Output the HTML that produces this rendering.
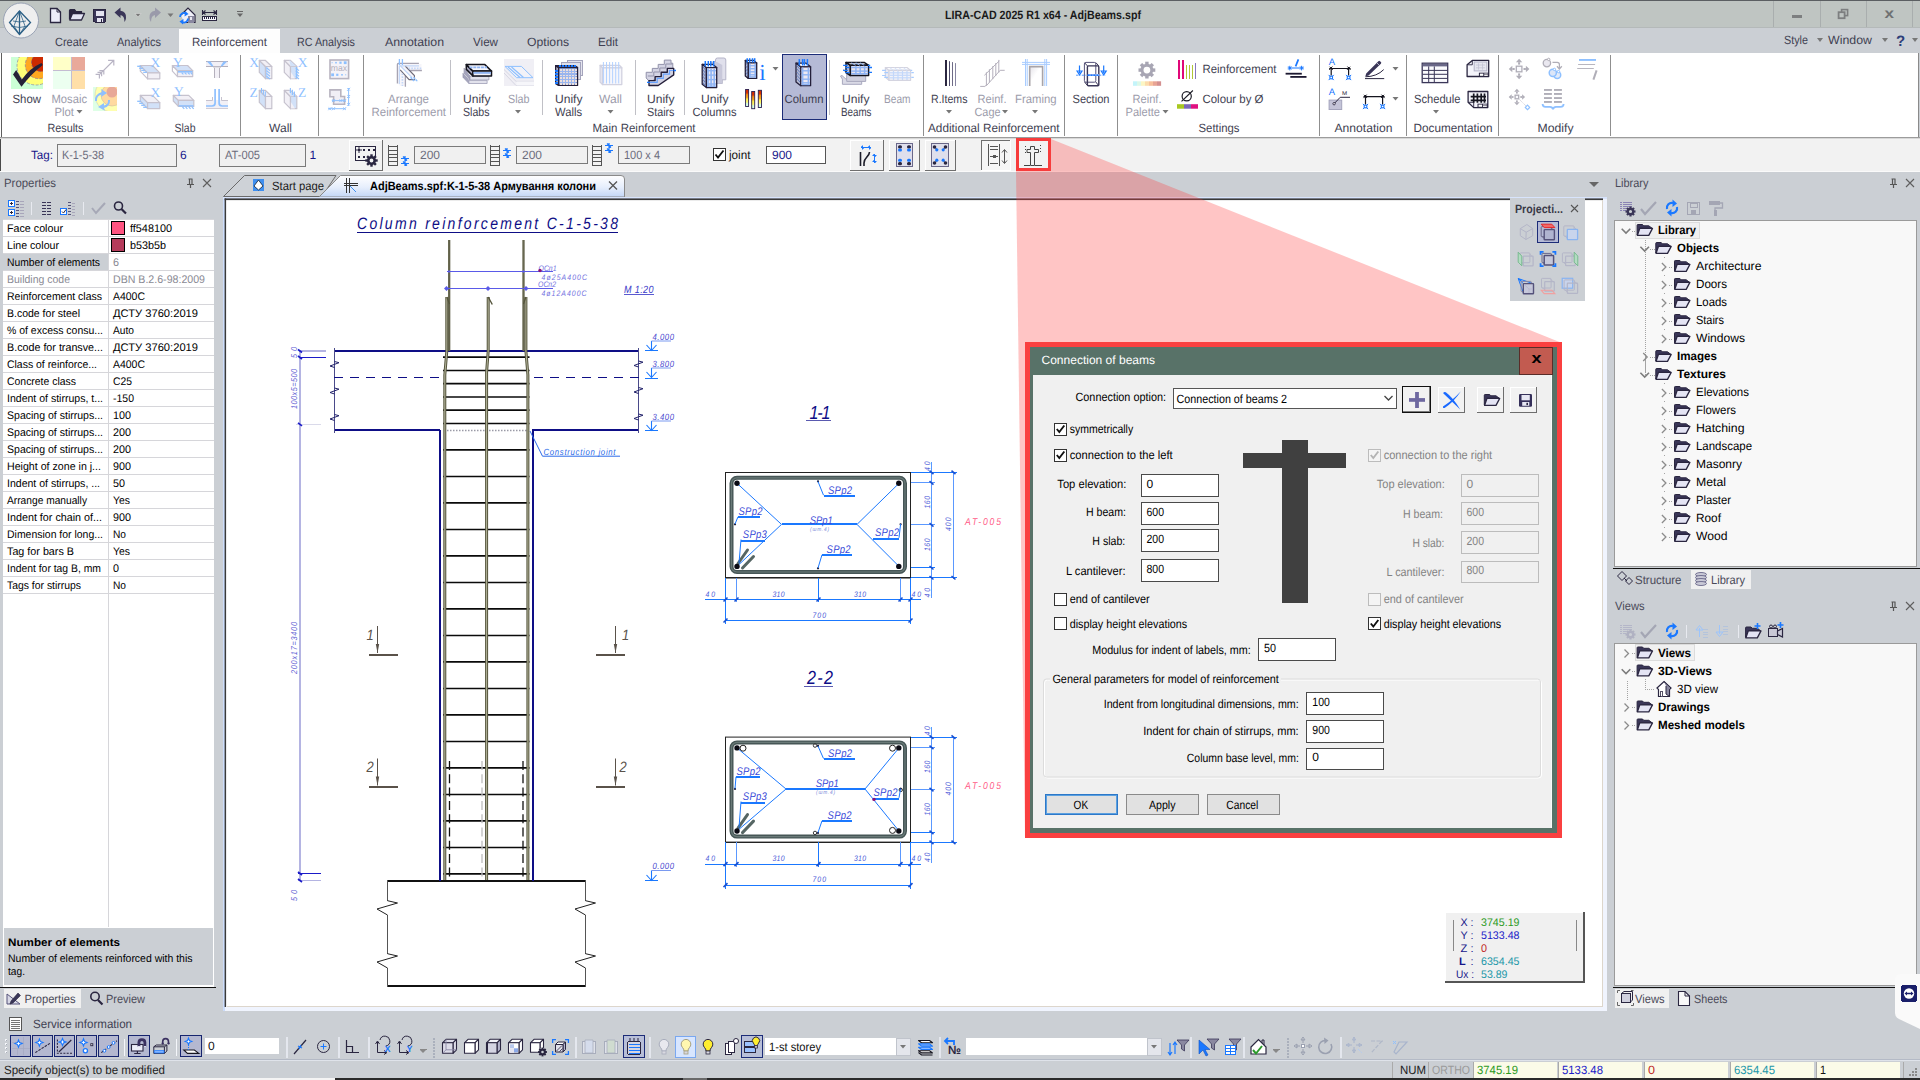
<!DOCTYPE html><html><head><meta charset="utf-8"><title>LIRA-CAD</title><style>html,body{margin:0;padding:0;background:#cbcfd4;overflow:hidden}svg{display:block}rect{shape-rendering:crispEdges}text{font-family:"Liberation Sans",sans-serif;white-space:pre}</style></head><body><svg width="1920" height="1080" viewBox="0 0 1920 1080" text-rendering="geometricPrecision">
<rect x="0" y="0" width="1920" height="1080" fill="#cbcfd4"/>
<rect x="0" y="0" width="1920" height="28" fill="#bfc5c2"/>
<rect x="0" y="0" width="1920" height="1" fill="#5b5f62"/>
<rect x="0" y="27" width="1920" height="1" fill="#b4b9b9"/>
<text x="945" y="19" font-size="12" fill="#1a1a1a" textLength="196" lengthAdjust="spacingAndGlyphs" font-weight="bold" >LIRA-CAD 2025 R1 x64 - AdjBeams.spf</text>
<rect x="1773" y="1" width="1" height="26" fill="#a9aeae"/>
<rect x="1820" y="1" width="1" height="26" fill="#a9aeae"/>
<rect x="1866" y="1" width="1" height="26" fill="#a9aeae"/>
<rect x="1912" y="1" width="1" height="26" fill="#a9aeae"/>
<rect x="1792" y="15" width="10" height="3" fill="#7d7f80"/>
<rect x="1841.6" y="9.6" width="6" height="6" fill="none" stroke="#7d7f80" stroke-width="1.6" style="shape-rendering:geometricPrecision"/>
<rect x="1838.6" y="12.2" width="6" height="6" fill="#bfc5c2" stroke="#7d7f80" stroke-width="1.8" style="shape-rendering:geometricPrecision"/>
<text x="1884.5" y="18.3" font-size="14" fill="#6e7071" textLength="9.5" lengthAdjust="spacingAndGlyphs" font-weight="bold" >x</text>
<rect x="179" y="29" width="101" height="25" fill="#fdfdfd"/>
<text x="55" y="46" font-size="12" fill="#3f3f52" textLength="33" lengthAdjust="spacingAndGlyphs" >Create</text>
<text x="117" y="46" font-size="12" fill="#3f3f52" textLength="44" lengthAdjust="spacingAndGlyphs" >Analytics</text>
<text x="192" y="46" font-size="12" fill="#3f3f52" textLength="75" lengthAdjust="spacingAndGlyphs" >Reinforcement</text>
<text x="297" y="46" font-size="12" fill="#3f3f52" textLength="58" lengthAdjust="spacingAndGlyphs" >RC Analysis</text>
<text x="385" y="46" font-size="12" fill="#3f3f52" textLength="59" lengthAdjust="spacingAndGlyphs" >Annotation</text>
<text x="473" y="46" font-size="12" fill="#3f3f52" textLength="25" lengthAdjust="spacingAndGlyphs" >View</text>
<text x="527" y="46" font-size="12" fill="#3f3f52" textLength="42" lengthAdjust="spacingAndGlyphs" >Options</text>
<text x="598" y="46" font-size="12" fill="#3f3f52" textLength="20" lengthAdjust="spacingAndGlyphs" >Edit</text>
<text x="1784" y="44" font-size="12" fill="#3f3f52" textLength="24" lengthAdjust="spacingAndGlyphs" >Style</text>
<path d="M1817 38 h6 l-3 4 z" fill="#777" />
<text x="1828" y="44" font-size="12" fill="#3f3f52" textLength="44" lengthAdjust="spacingAndGlyphs" >Window</text>
<path d="M1882 38 h6 l-3 4 z" fill="#777" />
<text x="1896" y="46" font-size="15" fill="#2d3f7a" font-weight="bold" >?</text>
<path d="M1912 38 h6 l-3 4 z" fill="#777" />
<rect x="0" y="53" width="1918" height="84" fill="#ffffff"/>
<rect x="1918" y="53" width="1" height="85" fill="#8a8a8a"/>
<rect x="1" y="53" width="1" height="85" fill="#5e5e5e"/>
<rect x="0" y="137" width="1920" height="1" fill="#9c9c9c"/>
<rect x="0" y="138" width="1920" height="1" fill="#d8d8d8"/>
<rect x="0" y="139" width="1920" height="33" fill="#f2f2f2"/>
<rect x="0" y="171" width="1920" height="1" fill="#fafafa"/>
<circle cx="21" cy="20.5" r="17.5" fill="#efefef" stroke="#9aa3b5" stroke-width="1" />
<g stroke="#2b5f85" fill="none" stroke-width="1.3">
<path d="M19.5 11 L30.5 22.5 L19.5 34.5 L9.5 22.5 Z" fill="none" />
<path d="M19.5 11 V34.5" fill="none" />
<path d="M19.5 11 L14 26 L19.5 34.5 M19.5 11 L25 26 L19.5 34.5" fill="none" stroke-width="0.8"/>
<path d="M13 21 Q19.5 23 26 21 M11 26 Q19.5 29 28 26" fill="none" stroke-width="0.8"/>
</g>
<path d="M50.5 8.5 H57 L60.5 12 V22.5 H50.5 Z" fill="#ececf8" stroke="#2a2640" stroke-width="1.3" />
<path d="M57 8.5 V12 H60.5" fill="none" stroke="#2a2640" stroke-width="1" />
<path d="M69.5 19.5 V10.5 Q69.5 9.5 70.5 9.5 H74.5 L76 11.5 H81.5 V13.5" fill="#2a2640" stroke="#2a2640" stroke-width="1.2" />
<path d="M69.8 20 L72.5 13.5 H84.5 L81.5 20 Z" fill="#e4e4f4" stroke="#2a2640" stroke-width="1.3" stroke-linejoin="round"/>
<rect x="93.5" y="9.5" width="12" height="12.5" fill="#3a3658" stroke="#2a2640" stroke-width="1" rx="1"/>
<rect x="95.5" y="10.5" width="8" height="5.5" fill="#e4e4f0"/>
<rect x="96.5" y="18" width="6.5" height="4" fill="#e4e4f0"/>
<rect x="100.5" y="18.5" width="1.6" height="3" fill="#2a2640"/>
<path d="M114.5 12.5 L120.5 7.5 V10.8 Q126.5 11.5 126 18 Q125.8 20.5 124.5 22 Q124.5 15.5 120.5 15 V18 Z" fill="#3a3658" />
<path d="M135 13.5 h6 l-3 3.5 z" fill="#777" />
<path d="M135 13.5 h6 l-3 3.5 z" fill="none" stroke="#e8e8e8" stroke-width="0.5" />
<path d="M161 12.5 L155 7.5 V10.8 Q149 11.5 149.5 18 Q149.7 20.5 151 22 Q151 15.5 155 15 V18 Z" fill="#9a9aaa" />
<path d="M167.5 13.5 h6 l-3 3.5 z" fill="#777" />
<path d="M181 15 L188 8 L195 15 V22.5 H184" fill="#f0f0f8" stroke="#2a2640" stroke-width="1.2" />
<rect x="187.5" y="16" width="6" height="6.5" fill="#8a88a0"/>
<rect x="189.5" y="17" width="2" height="3" fill="#e8e8f0"/>
<path d="M180 17 A4 4 0 0 1 186 13.5" fill="none" stroke="#1a78ff" stroke-width="1.8" />
<path d="M185 11 L188.5 14 L184.5 16.5 Z" fill="#1a78ff" />
<path d="M188 18.5 A4 4 0 0 1 182 22" fill="none" stroke="#1a78ff" stroke-width="1.8" />
<path d="M183 24.5 L179.5 21.5 L183.5 19 Z" fill="#1a78ff" />
<rect x="202.5" y="16.5" width="14" height="4" fill="#f4f4fa" stroke="#2a2640" stroke-width="1.2"/>
<rect x="204" y="17" width="1" height="2" fill="#2a2640"/>
<rect x="206" y="17" width="1" height="2" fill="#2a2640"/>
<rect x="208" y="17" width="1" height="2" fill="#2a2640"/>
<rect x="210" y="17" width="1" height="2" fill="#2a2640"/>
<rect x="212" y="17" width="1" height="2" fill="#2a2640"/>
<rect x="214" y="17" width="1" height="2" fill="#2a2640"/>
<path d="M203 12.5 H216 M202.5 10 V15 M216.5 10 V15 M205.5 10.5 L203 12.5 L205.5 14.5 M213.5 10.5 L216 12.5 L213.5 14.5" fill="none" stroke="#2a2640" stroke-width="1.1" />
<rect x="237" y="11" width="6" height="1" fill="#666"/>
<path d="M237 13.5 h6 l-3 3.5 z" fill="#666" />
<path d="M223.5 196.5 L244.5 175.5 H336 L322 196.5 Z" fill="#ced2d7" stroke="#6a6a6a" stroke-width="1" />
<text x="272" y="190" font-size="12" fill="#1a1a1a" textLength="52" lengthAdjust="spacingAndGlyphs" >Start page</text>
<defs><linearGradient id="tabg" x1="0" y1="0" x2="0" y2="1"><stop offset="0" stop-color="#ffffff"/><stop offset="0.55" stop-color="#e6eefc"/><stop offset="1" stop-color="#c3d6f6"/></linearGradient></defs>
<path d="M319 197 L340.5 175.5 H621 Q624.5 175.5 624.5 179 V197 Z" fill="url(#tabg)" stroke="#8a8a8a" stroke-width="1" />
<text x="370" y="190" font-size="12" fill="#000" textLength="226" lengthAdjust="spacingAndGlyphs" font-weight="bold" >AdjBeams.spf:K-1-5-38 Армування колони</text>
<path d="M609 181.5 L617 189.5 M617 181.5 L609 189.5" fill="none" stroke="#555" stroke-width="1.3" />
<rect x="253" y="179" width="11" height="12" fill="#3f8ff0"/>
<path d="M258.5 180 L263 186 L258.5 190 L254 186 Z" fill="#fff" stroke="#123" stroke-width="0.8" />
<g stroke="#333" fill="none" stroke-width="1">
<path d="M346.5 178 V193 M349.5 178 V193 M344 183.5 H358 M344 185.5 H358" fill="none" />
<path d="M350 186 L356 192" fill="none" stroke="#3f8ff0"/>
</g>
<path d="M1589 182 h10 l-5 5 z" fill="#666" />
<rect x="223" y="197" width="1384" height="814" fill="#f0f4fe"/>
<rect x="223" y="197" width="2" height="814" fill="#cbdcfb"/>
<rect x="223" y="197" width="1384" height="1.5" fill="#d8e4fc"/>
<rect x="225" y="199" width="1378" height="808" fill="#fff"/>
<rect x="224.6" y="198.4" width="1378.4" height="1.7" fill="#3a3a3a" style="shape-rendering:geometricPrecision"/>
<rect x="224.6" y="198.4" width="1.5" height="808.6" fill="#3a3a3a" style="shape-rendering:geometricPrecision"/>
<rect x="227" y="1006" width="1376" height="1" fill="#ddd6cc"/>
<rect x="1602" y="200" width="1" height="807" fill="#ddd6cc"/>
<rect x="128" y="55" width="1" height="81" fill="#8f8f8f"/>
<rect x="240" y="55" width="1" height="81" fill="#8f8f8f"/>
<rect x="318" y="55" width="1" height="81" fill="#8f8f8f"/>
<rect x="363" y="55" width="1" height="81" fill="#8f8f8f"/>
<rect x="923" y="55" width="1" height="81" fill="#8f8f8f"/>
<rect x="1064" y="55" width="1" height="81" fill="#8f8f8f"/>
<rect x="1117" y="55" width="1" height="81" fill="#8f8f8f"/>
<rect x="1319" y="55" width="1" height="81" fill="#8f8f8f"/>
<rect x="1406" y="55" width="1" height="81" fill="#8f8f8f"/>
<rect x="1498" y="55" width="1" height="81" fill="#8f8f8f"/>
<rect x="1610" y="55" width="1" height="81" fill="#8f8f8f"/>
<rect x="450" y="60" width="1" height="55" fill="#c0c0c6"/>
<rect x="542" y="60" width="1" height="55" fill="#c0c0c6"/>
<rect x="635" y="60" width="1" height="55" fill="#c0c0c6"/>
<rect x="684" y="60" width="1" height="55" fill="#c0c0c6"/>
<rect x="829" y="60" width="1" height="55" fill="#c0c0c6"/>
<text x="47.5" y="132" font-size="12" fill="#3f3f52" textLength="36" lengthAdjust="spacingAndGlyphs" >Results</text>
<text x="174.5" y="132" font-size="12" fill="#3f3f52" textLength="21" lengthAdjust="spacingAndGlyphs" >Slab</text>
<text x="269" y="132" font-size="12" fill="#3f3f52" textLength="23" lengthAdjust="spacingAndGlyphs" >Wall</text>
<text x="592.5" y="132" font-size="12" fill="#3f3f52" textLength="103" lengthAdjust="spacingAndGlyphs" >Main Reinforcement</text>
<text x="928" y="132" font-size="12" fill="#3f3f52" textLength="131.5" lengthAdjust="spacingAndGlyphs" >Additional Reinforcement</text>
<text x="1198.5" y="132" font-size="12" fill="#3f3f52" textLength="41" lengthAdjust="spacingAndGlyphs" >Settings</text>
<text x="1334.5" y="132" font-size="12" fill="#3f3f52" textLength="58" lengthAdjust="spacingAndGlyphs" >Annotation</text>
<text x="1413.5" y="132" font-size="12" fill="#3f3f52" textLength="79" lengthAdjust="spacingAndGlyphs" >Documentation</text>
<text x="1537.5" y="132" font-size="12" fill="#3f3f52" textLength="36" lengthAdjust="spacingAndGlyphs" >Modify</text>
<rect x="11" y="57" width="32" height="32" fill="#ccffd6"/>
<clipPath id="cs"><rect x="11" y="57" width="32" height="32"/></clipPath><g clip-path="url(#cs)">
<circle cx="36" cy="66" r="19" fill="#ffff78" stroke="#8a8aa0" stroke-width="0.7" stroke-dasharray="3 1.5"/>
<circle cx="39" cy="65" r="13.7" fill="#ffa820" stroke="#8a7aa0" stroke-width="0.7" stroke-dasharray="3 1.5"/>
<circle cx="40.5" cy="62.5" r="9" fill="#cc2a00" stroke="#7a5a80" stroke-width="0.7" stroke-dasharray="3 1.5"/>
<path d="M13 74.5 L16.2 70 L21.8 79.5 Q30 68 41.5 63 L42.8 65 Q31 74 21.5 86.8 Z" fill="#262238" />
</g>
<text x="12.5" y="103" font-size="12" fill="#3f3f52" textLength="28.5" lengthAdjust="spacingAndGlyphs" >Show</text>
<rect x="53" y="57" width="18" height="14" fill="#ffffc8"/>
<rect x="71" y="57" width="14" height="14" fill="#e9a99a"/>
<rect x="53" y="71" width="18" height="18" fill="#ecfff0"/>
<rect x="72" y="71" width="13" height="18" fill="#ffdfa8"/>
<rect x="71" y="57" width="1" height="32" fill="#c4bcd2"/>
<rect x="53" y="70" width="32" height="1" fill="#c4bcd2"/>
<text x="51.5" y="103" font-size="12" fill="#9c9cab" textLength="35.5" lengthAdjust="spacingAndGlyphs" >Mosaic</text>
<text x="54.5" y="116" font-size="12" fill="#9c9cab" textLength="19.5" lengthAdjust="spacingAndGlyphs" >Plot</text>
<path d="M76.5 110 h6 l-3 3.5 z" fill="#777" />
<g stroke="#b8b4c4" fill="none" stroke-width="1.2">
<path d="M99.4 74.6 L113.6 60.5 M108.1 60.4 H113.8 V65.6 M95.6 74.3 H99.4 V78.4 M97.5 72.4 H101.6 V76.2 M99.4 70.6 H103.8 V74.6" fill="none" />
</g>
<rect x="93" y="87" width="24" height="24" fill="#d6ffe0" opacity="0.8"/>
<clipPath id="cr"><rect x="93" y="87" width="24" height="24"/></clipPath><g clip-path="url(#cr)">
<circle cx="112" cy="95" r="17" fill="#ffffb0" stroke="#d0d0b0" stroke-width="0.6" />
<circle cx="112" cy="95" r="11" fill="#ffd9a0" stroke="#d0c0a0" stroke-width="0.6" />
<circle cx="112" cy="92" r="5.5" fill="#e8a898" />
</g>
<path d="M95 101 A9 8 0 0 1 102 92 L101 89 L107 93 L101 97 L101.5 94.5 A6 6 0 0 0 97 101 Z" fill="#8ec0ff" />
<path d="M110 100 A8 8 0 0 1 104 108 L105 110.5 L98 107 L104 103 L104 105.5 A5 5 0 0 0 108 100 Z" fill="#8ec0ff" />
<path d="M140.3 65.5 L147.60000000000002 72.8 V78.8 L140.3 71.2 Z" fill="#fff" stroke="#c6c2ce" stroke-width="1.2" stroke-linejoin="round"/>
<path d="M140.3 65.5 H152.5 L159.8 72.8 H147.60000000000002 Z" fill="#d2e1f8" stroke="#c6c2ce" stroke-width="1.2" stroke-linejoin="round"/>
<path d="M147.60000000000002 72.8 H159.8 V78.8 H147.60000000000002 Z" fill="#f2f0f6" stroke="#c6c2ce" stroke-width="1.2" stroke-linejoin="round"/>
<line x1="137.2" y1="66.3" x2="140.89999999999998" y2="66.3" stroke="#8ec0ff" stroke-width="1.3" />
<line x1="139.2" y1="68.3" x2="142.89999999999998" y2="68.3" stroke="#8ec0ff" stroke-width="1.3" />
<line x1="141.2" y1="70.3" x2="144.89999999999998" y2="70.3" stroke="#8ec0ff" stroke-width="1.3" />
<line x1="143.2" y1="72.3" x2="146.89999999999998" y2="72.3" stroke="#8ec0ff" stroke-width="1.3" />
<text x="150.6" y="66.9" font-size="13.5" fill="#8ec0ff" style="font-family:'Liberation Serif'" >X</text>
<path d="M172.4 65.5 L177.5 70.6 V76.6 L172.4 71.2 Z" fill="#fff" stroke="#c6c2ce" stroke-width="1.2" stroke-linejoin="round"/>
<path d="M172.4 65.5 H187.6 L192.7 70.6 H177.5 Z" fill="#d2e1f8" stroke="#c6c2ce" stroke-width="1.2" stroke-linejoin="round"/>
<path d="M177.5 70.6 H192.7 V76.6 H177.5 Z" fill="#f2f0f6" stroke="#c6c2ce" stroke-width="1.2" stroke-linejoin="round"/>
<rect x="178" y="71" width="14.5" height="1.6" fill="#8ec0ff" style="shape-rendering:geometricPrecision"/>
<line x1="181.6" y1="72.6" x2="183.4" y2="74.4" stroke="#8ec0ff" stroke-width="1.2" />
<line x1="184.7" y1="72.6" x2="186.5" y2="74.4" stroke="#8ec0ff" stroke-width="1.2" />
<line x1="187.9" y1="72.6" x2="189.70000000000002" y2="74.4" stroke="#8ec0ff" stroke-width="1.2" />
<line x1="190.6" y1="72.6" x2="192.4" y2="74.4" stroke="#8ec0ff" stroke-width="1.2" />
<text x="173" y="66.6" font-size="13.5" fill="#8ec0ff" style="font-family:'Liberation Serif'" >Y</text>
<path d="M140.3 95.3 L147.60000000000002 102.6 V108.6 L140.3 101.0 Z" fill="#d2e1f8" stroke="#c6c2ce" stroke-width="1.2" stroke-linejoin="round"/>
<path d="M140.3 95.3 H152.5 L159.8 102.6 H147.60000000000002 Z" fill="#f2f0f6" stroke="#c6c2ce" stroke-width="1.2" stroke-linejoin="round"/>
<path d="M147.60000000000002 102.6 H159.8 V108.6 H147.60000000000002 Z" fill="#d2e1f8" stroke="#c6c2ce" stroke-width="1.2" stroke-linejoin="round"/>
<line x1="137.2" y1="101.3" x2="140.89999999999998" y2="101.3" stroke="#8ec0ff" stroke-width="1.3" />
<line x1="139.2" y1="103.3" x2="142.89999999999998" y2="103.3" stroke="#8ec0ff" stroke-width="1.3" />
<line x1="141.2" y1="105.3" x2="144.89999999999998" y2="105.3" stroke="#8ec0ff" stroke-width="1.3" />
<line x1="143.2" y1="107.3" x2="146.89999999999998" y2="107.3" stroke="#8ec0ff" stroke-width="1.3" />
<text x="150.6" y="96.7" font-size="13.5" fill="#8ec0ff" style="font-family:'Liberation Serif'" >X</text>
<path d="M173.3 95.3 L178.4 100.39999999999999 V106.39999999999999 L173.3 101.0 Z" fill="#d2e1f8" stroke="#c6c2ce" stroke-width="1.2" stroke-linejoin="round"/>
<path d="M173.3 95.3 H188.70000000000002 L193.8 100.39999999999999 H178.4 Z" fill="#f2f0f6" stroke="#c6c2ce" stroke-width="1.2" stroke-linejoin="round"/>
<path d="M178.4 100.39999999999999 H193.8 V106.39999999999999 H178.4 Z" fill="#d2e1f8" stroke="#c6c2ce" stroke-width="1.2" stroke-linejoin="round"/>
<rect x="178.6" y="105.2" width="15" height="1.4" fill="#8ec0ff" style="shape-rendering:geometricPrecision"/>
<line x1="182.5" y1="107" x2="184.3" y2="108.8" stroke="#8ec0ff" stroke-width="1.2" />
<line x1="185.6" y1="107" x2="187.4" y2="108.8" stroke="#8ec0ff" stroke-width="1.2" />
<line x1="188.8" y1="107" x2="190.60000000000002" y2="108.8" stroke="#8ec0ff" stroke-width="1.2" />
<line x1="191.9" y1="107" x2="193.70000000000002" y2="108.8" stroke="#8ec0ff" stroke-width="1.2" />
<text x="174" y="96.39999999999999" font-size="13.5" fill="#8ec0ff" style="font-family:'Liberation Serif'" >Y</text>
<rect x="206" y="61" width="22" height="6" fill="#f2f0f6"/>
<rect x="206" y="61" width="22" height="1" fill="#b4b0bc"/>
<rect x="206" y="66" width="22" height="1" fill="#b4b0bc"/>
<path d="M206.8 61.4 H210.5 L213.5 66.3 H211.5 Z M227.2 61.4 H223.5 L220.5 66.3 H222.5 Z" fill="#8ec0ff" />
<path d="M213.2 66.5 H221 L219.8 68 H214.4 Z" fill="#fff" stroke="#b4b0bc" stroke-width="0.8" />
<rect x="214.6" y="68" width="5" height="9.5" fill="#f2f0f6"/>
<rect x="214" y="68" width="1" height="10" fill="#b4b0bc"/>
<rect x="219" y="68" width="1" height="10" fill="#b4b0bc"/>
<rect x="206" y="100" width="22" height="8.5" fill="#f2f0f6"/>
<path d="M206 100.5 H212.5 V97 M228 100.5 H221.5 V97" fill="none" stroke="#c6c2ce" stroke-width="1" />
<rect x="206" y="108" width="22" height="1" fill="#d0ccd6"/>
<g stroke="#8ec0ff" fill="none" stroke-width="1.7">
<path d="M206 106 H212 Q215.1 106 215.1 103 V89 M228 106 H222.2 Q219.1 106 219.1 103 V89" fill="none" />
</g>
<path d="M259.3 60.3 L265.5 66.5 V78.69999999999999 L259.3 72.39999999999999 Z" fill="#d2e1f8" stroke="#c6c2ce" stroke-width="1.2" stroke-linejoin="round"/>
<path d="M259.3 60.3 H265.2 L271.8 66.5 H265.5 Z" fill="#f2f0f6" stroke="#c6c2ce" stroke-width="1.2" stroke-linejoin="round"/>
<path d="M265.5 66.5 H271.8 V78.69999999999999 H265.5 Z" fill="#f2f0f6" stroke="#c6c2ce" stroke-width="1.2" stroke-linejoin="round"/>
<rect x="265.9" y="67" width="1.4" height="11.5" fill="#b4d2fc" style="shape-rendering:geometricPrecision"/>
<line x1="266.5" y1="67.8" x2="270" y2="70.6" stroke="#8ec0ff" stroke-width="1.1" />
<line x1="266.5" y1="70.6" x2="270" y2="73.39999999999999" stroke="#8ec0ff" stroke-width="1.1" />
<line x1="266.5" y1="73.39999999999999" x2="270" y2="76.19999999999999" stroke="#8ec0ff" stroke-width="1.1" />
<line x1="266.5" y1="76.19999999999999" x2="270" y2="79.0" stroke="#8ec0ff" stroke-width="1.1" />
<text x="249.3" y="66.8" font-size="13.5" fill="#8ec0ff" style="font-family:'Liberation Serif'" >X</text>
<path d="M284.3 60.3 L290.5 66.5 V78.69999999999999 L284.3 72.39999999999999 Z" fill="#f2f0f6" stroke="#c6c2ce" stroke-width="1.2" stroke-linejoin="round"/>
<path d="M284.3 60.3 H290.2 L296.8 66.5 H290.5 Z" fill="#f2f0f6" stroke="#c6c2ce" stroke-width="1.2" stroke-linejoin="round"/>
<path d="M290.5 66.5 H296.8 V78.69999999999999 H290.5 Z" fill="#d2e1f8" stroke="#c6c2ce" stroke-width="1.2" stroke-linejoin="round"/>
<path d="M289.3 60.6 H290 L296.3 66.3 H290.6 Z" fill="#d2e1f8" />
<path d="M290.9 72 V78.4 H295 Z" fill="#f2f0f6" />
<line x1="295.8" y1="68.0" x2="299" y2="70.6" stroke="#8ec0ff" stroke-width="1.1" />
<line x1="295.8" y1="70.8" x2="299" y2="73.39999999999999" stroke="#8ec0ff" stroke-width="1.1" />
<line x1="295.8" y1="73.6" x2="299" y2="76.19999999999999" stroke="#8ec0ff" stroke-width="1.1" />
<line x1="295.8" y1="76.4" x2="299" y2="79.0" stroke="#8ec0ff" stroke-width="1.1" />
<rect x="295.8" y="67" width="1.3" height="11.5" fill="#8ec0ff" style="shape-rendering:geometricPrecision"/>
<text x="297.8" y="66.8" font-size="13.5" fill="#8ec0ff" style="font-family:'Liberation Serif'" >X</text>
<path d="M259.3 90.3 L265.5 96.5 V108.69999999999999 L259.3 102.39999999999999 Z" fill="#d2e1f8" stroke="#c6c2ce" stroke-width="1.2" stroke-linejoin="round"/>
<path d="M259.3 90.3 H265.2 L271.8 96.5 H265.5 Z" fill="#f2f0f6" stroke="#c6c2ce" stroke-width="1.2" stroke-linejoin="round"/>
<path d="M265.5 96.5 H271.8 V108.69999999999999 H265.5 Z" fill="#f2f0f6" stroke="#c6c2ce" stroke-width="1.2" stroke-linejoin="round"/>
<line x1="261.5" y1="88.0" x2="261.5" y2="92.8" stroke="#8ec0ff" stroke-width="1.1" />
<line x1="263.4" y1="89.70999999999998" x2="263.4" y2="94.69999999999997" stroke="#8ec0ff" stroke-width="1.1" />
<line x1="265.3" y1="91.42000000000002" x2="265.3" y2="96.60000000000001" stroke="#8ec0ff" stroke-width="1.1" />
<text x="249.6" y="96.8" font-size="13.5" fill="#8ec0ff" style="font-family:'Liberation Serif'" >Z</text>
<path d="M284.3 90.3 L290.5 96.5 V108.69999999999999 L284.3 102.39999999999999 Z" fill="#f2f0f6" stroke="#c6c2ce" stroke-width="1.2" stroke-linejoin="round"/>
<path d="M284.3 90.3 H290.2 L296.8 96.5 H290.5 Z" fill="#f2f0f6" stroke="#c6c2ce" stroke-width="1.2" stroke-linejoin="round"/>
<path d="M290.5 96.5 H296.8 V108.69999999999999 H290.5 Z" fill="#d2e1f8" stroke="#c6c2ce" stroke-width="1.2" stroke-linejoin="round"/>
<path d="M289.3 90.6 H290 L296.3 96.3 H290.6 Z" fill="#d2e1f8" />
<path d="M290.9 102 V108.4 H295 Z" fill="#f2f0f6" />
<line x1="290.4" y1="88.0" x2="290.4" y2="93.0" stroke="#8ec0ff" stroke-width="1.1" />
<line x1="292.4" y1="89.8" x2="292.4" y2="95.0" stroke="#8ec0ff" stroke-width="1.1" />
<line x1="294.4" y1="91.6" x2="294.4" y2="97.0" stroke="#8ec0ff" stroke-width="1.1" />
<text x="298" y="96.8" font-size="13.5" fill="#8ec0ff" style="font-family:'Liberation Serif'" >Z</text>
<rect x="330" y="60" width="18.6" height="18.6" fill="#f5f3f8" stroke="#b8b4c0" stroke-width="1.6" style="shape-rendering:geometricPrecision"/>
<rect x="331.6" y="62.199999999999996" width="1" height="1" fill="#8ec0ff" style="shape-rendering:geometricPrecision"/>
<rect x="335.2" y="61.9" width="1.6" height="1.6" fill="#8ec0ff" style="shape-rendering:geometricPrecision"/>
<rect x="339.4" y="61.599999999999994" width="2.2" height="2.2" fill="#8ec0ff" style="shape-rendering:geometricPrecision"/>
<rect x="343.8" y="61.3" width="2.8" height="2.8" fill="#8ec0ff" style="shape-rendering:geometricPrecision"/>
<rect x="331.2" y="73.39999999999999" width="2.8" height="2.8" fill="#8ec0ff" style="shape-rendering:geometricPrecision"/>
<rect x="336.2" y="73.7" width="2.2" height="2.2" fill="#8ec0ff" style="shape-rendering:geometricPrecision"/>
<rect x="341.2" y="74.0" width="1.6" height="1.6" fill="#8ec0ff" style="shape-rendering:geometricPrecision"/>
<rect x="345.2" y="74.3" width="1" height="1" fill="#8ec0ff" style="shape-rendering:geometricPrecision"/>
<text x="330.8" y="71" font-size="9" fill="#b4b0bc" textLength="16.3" lengthAdjust="spacingAndGlyphs" >max</text>
<path d="M329.9 89.9 H340.8 V96.5 H344.6 V104.3 H333.6 V96.8 H329.9 Z" fill="#f1eff5" stroke="#b8b4c0" stroke-width="1.6" />
<g stroke="#8ec0ff" fill="none" stroke-width="1">
<path d="M348.6 88 V106 M331.8 100.6 H345.5 M328 108.7 H345.5" fill="none" />
<path d="M347.1 90.8 L350.1 87.8 M347.40000000000003 88.1 L349.8 90.5" fill="none" />
<path d="M347.1 98.0 L350.1 95.0 M347.40000000000003 95.3 L349.8 97.7" fill="none" />
<path d="M347.1 105.8 L350.1 102.8 M347.40000000000003 103.1 L349.8 105.5" fill="none" />
<path d="M332.0 102.1 L335.0 99.1 M332.3 99.39999999999999 L334.7 101.8" fill="none" />
<path d="M339.3 102.1 L342.3 99.1 M339.6 99.39999999999999 L342.0 101.8" fill="none" />
<path d="M343.1 102.1 L346.1 99.1 M343.40000000000003 99.39999999999999 L345.8 101.8" fill="none" />
<path d="M328.4 110.2 L331.4 107.2 M328.7 107.5 L331.09999999999997 109.9" fill="none" />
<path d="M332.0 110.2 L335.0 107.2 M332.3 107.5 L334.7 109.9" fill="none" />
<path d="M343.1 110.2 L346.1 107.2 M343.40000000000003 107.5 L345.8 109.9" fill="none" />
</g>
<path d="M398.2 64.6 L412 78.2 L414.2 77.2 V75.8 L405.5 66.5 L410 70.3 H421.5 V64 H398.2 Z" fill="#f6f5fa" />
<path d="M398 64.2 V83.6 L400 86 H405 V76 L399 69 Z" fill="#f6f5fa" />
<g stroke="#a8a4b2" fill="none" stroke-width="1.3">
<path d="M397.4 83.6 V64.4 Q397.4 63.4 398.4 63.4 H418.9 M410.2 70.5 H421.9 M405.4 75.9 V86.8" fill="none" />
</g>
<g stroke="#6e6a78" fill="none" stroke-width="1.1">
<path d="M405.2 66 L414.4 75.5 L414.6 79.6 H409.1 L400.2 69.9" fill="none" />
</g>
<g stroke="#c4d8f8" fill="none" stroke-width="1.2">
<path d="M399.4 66 V84 M400.5 65.8 H419 M399.5 65 L412 77.5" fill="none" />
<path d="M408.5 68.4 H421.5 M402.4 73.5 V86" fill="none" stroke-dasharray="1.6 1.2" stroke-width="1.6"/>
</g>
<g stroke="#8ec0ff" fill="none" stroke-width="1.3">
<path d="M399.4 59 V64.9 M402.4 59 V64.9" fill="none" />
<path d="M410.6 77.3 L414.6 81.6 M413.5 77.3 L417.8 81.6" fill="none" stroke-dasharray="2.2 0.8" stroke-width="1.5"/>
</g>
<text x="388" y="103" font-size="12" fill="#9c9cab" textLength="41" lengthAdjust="spacingAndGlyphs" >Arrange</text>
<text x="371.5" y="116" font-size="12" fill="#9c9cab" textLength="74.5" lengthAdjust="spacingAndGlyphs" >Reinforcement</text>
<path d="M463 73.3 L468.9 80.3 V83.5 L463 77.3 Z" fill="#a4a4bc" stroke="#9898b0" stroke-width="0.8" />
<path d="M468.9 80.3 H487.1 V83.5 H468.9 Z" fill="#e2e2ec" stroke="#a0a0b8" stroke-width="0.8" />
<path d="M464.1 68.2 L470 76.2 V79.9 L464.1 73 Z" fill="#a4a4bc" stroke="#9898b0" stroke-width="0.8" />
<path d="M470 76.2 H488.9 V79.9 H470 Z" fill="#e2e2ec" stroke="#a0a0b8" stroke-width="0.8" />
<path d="M466.29999999999995 64.6 L472.9 71.1 V75.89999999999999 L466.29999999999995 69.39999999999999 Z" fill="#a8a8c0" stroke="#15151f" stroke-width="1.5" stroke-linejoin="round"/>
<path d="M466.29999999999995 64.6 H484.9 L491.5 71.1 H472.9 Z" fill="#f6f6fc" stroke="#15151f" stroke-width="1.5" stroke-linejoin="round"/>
<path d="M472.9 71.1 H491.5 V75.89999999999999 H472.9 Z" fill="#f2f2fa" stroke="#15151f" stroke-width="1.5" stroke-linejoin="round"/>
<line x1="469.5" y1="67.4" x2="487" y2="67.4" stroke="#8fb4f4" stroke-width="1.6" stroke-dasharray="3 0.8"/>
<line x1="473.5" y1="72.9" x2="491" y2="72.9" stroke="#8fb4f4" stroke-width="1.8" />
<text x="463" y="103" font-size="12" fill="#3f3f52" textLength="27.5" lengthAdjust="spacingAndGlyphs" >Unify</text>
<text x="463" y="116" font-size="12" fill="#3f3f52" textLength="26.5" lengthAdjust="spacingAndGlyphs" >Slabs</text>
<rect x="504" y="59" width="30" height="27" fill="#f0eff5"/>
<path d="M504 69.5 L516 81.3 H534 M504 73 L516 85.5 H534" fill="none" stroke="#d6d6e2" stroke-width="1" />
<path d="M516.5 81.5 H534 V85.5 H516.5 Z" fill="#f6f6fa" />
<path d="M505 66.4 H521.4 L533 77.7 H516.6 Z" fill="#f2f2f8" stroke="#8ec0ff" stroke-width="1" />
<path d="M508 67 L520 77.5 M511.5 67 L523.5 77.5" fill="none" stroke="#8ec0ff" stroke-width="1.2" />
<text x="508" y="103" font-size="12" fill="#9c9cab" textLength="21.5" lengthAdjust="spacingAndGlyphs" >Slab</text>
<path d="M515 110 h6 l-3 3.5 z" fill="#777" />
<rect x="567.5" y="60.5" width="15" height="15" fill="#e4e4ee" stroke="#a4a4bc" stroke-width="1" rx="1"/>
<rect x="561.5" y="62.5" width="19" height="17" fill="#e0e0ea" stroke="#a4a4bc" stroke-width="1" rx="1"/>
<path d="M555.7 65.7 L558.6 67.5 V85.4 L555.7 83.60000000000001 Z" fill="#c8c8da" stroke="#241f3a" stroke-width="1.4" stroke-linejoin="round"/>
<path d="M555.7 65.7 H574.6 L577.5 67.5 H558.6 Z" fill="#f4f4fa" stroke="#241f3a" stroke-width="1.4" stroke-linejoin="round"/>
<path d="M558.6 67.5 H577.5 V85.4 H558.6 Z" fill="#9ab6ee" stroke="#241f3a" stroke-width="1.4" stroke-linejoin="round"/>
<rect x="559.9" y="68.9" width="1.9" height="1.7" fill="#ece0dc"/>
<rect x="559.9" y="71.75" width="1.9" height="1.7" fill="#ece0dc"/>
<rect x="559.9" y="74.60000000000001" width="1.9" height="1.7" fill="#ece0dc"/>
<rect x="559.9" y="77.45" width="1.9" height="1.7" fill="#ece0dc"/>
<rect x="559.9" y="80.30000000000001" width="1.9" height="1.7" fill="#ece0dc"/>
<rect x="559.9" y="83.15" width="1.9" height="1.7" fill="#ece0dc"/>
<rect x="562.9499999999999" y="68.9" width="1.9" height="1.7" fill="#ece0dc"/>
<rect x="562.9499999999999" y="71.75" width="1.9" height="1.7" fill="#ece0dc"/>
<rect x="562.9499999999999" y="74.60000000000001" width="1.9" height="1.7" fill="#ece0dc"/>
<rect x="562.9499999999999" y="77.45" width="1.9" height="1.7" fill="#ece0dc"/>
<rect x="562.9499999999999" y="80.30000000000001" width="1.9" height="1.7" fill="#ece0dc"/>
<rect x="562.9499999999999" y="83.15" width="1.9" height="1.7" fill="#ece0dc"/>
<rect x="566.0" y="68.9" width="1.9" height="1.7" fill="#ece0dc"/>
<rect x="566.0" y="71.75" width="1.9" height="1.7" fill="#ece0dc"/>
<rect x="566.0" y="74.60000000000001" width="1.9" height="1.7" fill="#ece0dc"/>
<rect x="566.0" y="77.45" width="1.9" height="1.7" fill="#ece0dc"/>
<rect x="566.0" y="80.30000000000001" width="1.9" height="1.7" fill="#ece0dc"/>
<rect x="566.0" y="83.15" width="1.9" height="1.7" fill="#ece0dc"/>
<rect x="569.05" y="68.9" width="1.9" height="1.7" fill="#ece0dc"/>
<rect x="569.05" y="71.75" width="1.9" height="1.7" fill="#ece0dc"/>
<rect x="569.05" y="74.60000000000001" width="1.9" height="1.7" fill="#ece0dc"/>
<rect x="569.05" y="77.45" width="1.9" height="1.7" fill="#ece0dc"/>
<rect x="569.05" y="80.30000000000001" width="1.9" height="1.7" fill="#ece0dc"/>
<rect x="569.05" y="83.15" width="1.9" height="1.7" fill="#ece0dc"/>
<rect x="572.1" y="68.9" width="1.9" height="1.7" fill="#ece0dc"/>
<rect x="572.1" y="71.75" width="1.9" height="1.7" fill="#ece0dc"/>
<rect x="572.1" y="74.60000000000001" width="1.9" height="1.7" fill="#ece0dc"/>
<rect x="572.1" y="77.45" width="1.9" height="1.7" fill="#ece0dc"/>
<rect x="572.1" y="80.30000000000001" width="1.9" height="1.7" fill="#ece0dc"/>
<rect x="572.1" y="83.15" width="1.9" height="1.7" fill="#ece0dc"/>
<rect x="575.15" y="68.9" width="1.9" height="1.7" fill="#ece0dc"/>
<rect x="575.15" y="71.75" width="1.9" height="1.7" fill="#ece0dc"/>
<rect x="575.15" y="74.60000000000001" width="1.9" height="1.7" fill="#ece0dc"/>
<rect x="575.15" y="77.45" width="1.9" height="1.7" fill="#ece0dc"/>
<rect x="575.15" y="80.30000000000001" width="1.9" height="1.7" fill="#ece0dc"/>
<rect x="575.15" y="83.15" width="1.9" height="1.7" fill="#ece0dc"/>
<rect x="559" y="65" width="1.6" height="2.2" fill="#1a78ff"/>
<rect x="562" y="65" width="1.6" height="2.2" fill="#1a78ff"/>
<rect x="565" y="65" width="1.6" height="2.2" fill="#1a78ff"/>
<rect x="568" y="65" width="1.6" height="2.2" fill="#1a78ff"/>
<rect x="571" y="65" width="1.6" height="2.2" fill="#1a78ff"/>
<rect x="574" y="65" width="1.6" height="2.2" fill="#1a78ff"/>
<rect x="555.3" y="70" width="2.2" height="1.6" fill="#1a78ff"/>
<rect x="555.3" y="73" width="2.2" height="1.6" fill="#1a78ff"/>
<rect x="555.3" y="76" width="2.2" height="1.6" fill="#1a78ff"/>
<rect x="555.3" y="79" width="2.2" height="1.6" fill="#1a78ff"/>
<rect x="555.3" y="82" width="2.2" height="1.6" fill="#1a78ff"/>
<text x="555" y="103" font-size="12" fill="#3f3f52" textLength="27.5" lengthAdjust="spacingAndGlyphs" >Unify</text>
<text x="555" y="116" font-size="12" fill="#3f3f52" textLength="27" lengthAdjust="spacingAndGlyphs" >Walls</text>
<path d="M600.1 65.3 L602.5 67.8 V84.6 L600.1 82.1 Z" fill="#ececf4" stroke="#d2d2e0" stroke-width="1.3" stroke-linejoin="round"/>
<path d="M600.1 65.3 H619.4 L621.8 67.8 H602.5 Z" fill="#fafafd" stroke="#d2d2e0" stroke-width="1.3" stroke-linejoin="round"/>
<path d="M602.5 67.8 H621.8 V84.6 H602.5 Z" fill="#f6f6fb" stroke="#d2d2e0" stroke-width="1.3" stroke-linejoin="round"/>
<line x1="603.4" y1="62" x2="603.4" y2="83.5" stroke="#b4d2ff" stroke-width="1" />
<line x1="606.5" y1="62" x2="606.5" y2="83.5" stroke="#b4d2ff" stroke-width="1" />
<line x1="609.6" y1="62" x2="609.6" y2="83.5" stroke="#b4d2ff" stroke-width="1" />
<line x1="612.6" y1="62" x2="612.6" y2="83.5" stroke="#b4d2ff" stroke-width="1" />
<line x1="615.7" y1="62" x2="615.7" y2="83.5" stroke="#b4d2ff" stroke-width="1" />
<line x1="618.7" y1="62" x2="618.7" y2="83.5" stroke="#b4d2ff" stroke-width="1" />
<text x="599" y="103" font-size="12" fill="#9c9cab" textLength="23" lengthAdjust="spacingAndGlyphs" >Wall</text>
<path d="M607.5 110 h6 l-3 3.5 z" fill="#777" />
<path d="M646.2 72.3 H652.3 V68.4 H658.2 V64.4 H664.3 V60.1 H671 V63.2 H672.8 V70 L650 82 L646.2 78 Z" fill="#d4d4e4" stroke="#9292aa" stroke-width="1" />
<path d="M647.8 76 H653.8 V72 H659.8 V68 H665.8 V64 H672.5" fill="none" stroke="#9292aa" stroke-width="1" />
<path d="M649 80.6 H655.1 V76.6 H661.2 V72.3 H667.3 V68.4 H673.7 V74.8 L658.2 85.5 H649 Z" fill="#d2d2e2" stroke="#241f3a" stroke-width="1.4" stroke-linejoin="round"/>
<path d="M650 82.4 H657.2 V78.4 H663.3 V74.2 H669.5 V70.5 H673" fill="none" stroke="#6aa4ff" stroke-width="1.2" />
<path d="M647 82.4 H650 M673.5 70.5 H676" fill="none" stroke="#1a78ff" stroke-width="1.4" />
<text x="647" y="103" font-size="12" fill="#3f3f52" textLength="27.5" lengthAdjust="spacingAndGlyphs" >Unify</text>
<text x="647" y="116" font-size="12" fill="#3f3f52" textLength="27.5" lengthAdjust="spacingAndGlyphs" >Stairs</text>
<path d="M715.5 60 Q715.5 58 717.5 58 H723.8 Q725.8 58 725.8 60 V79.8 H715.5 Z" fill="#e0e0ec" stroke="#b4b4c8" stroke-width="1" />
<path d="M711 63 L715.5 61 V79.8 H722.3 V83.5 H711 Z" fill="#d0d0e0" stroke="#b4b4c8" stroke-width="1" />
<path d="M711 62 H717 L722.3 65 V83.5 H718 Z" fill="#c8c8da" />
<path d="M702.1999999999999 64.3 L706.4 67.6 V87.6 L702.1999999999999 84.3 Z" fill="#b4b8d0" stroke="#241f3a" stroke-width="1.3" stroke-linejoin="round"/>
<path d="M702.1999999999999 64.3 H712.4999999999999 L716.6999999999999 67.6 H706.4 Z" fill="#fbfbff" stroke="#241f3a" stroke-width="1.3" stroke-linejoin="round"/>
<path d="M706.4 67.6 H716.6999999999999 V87.6 H706.4 Z" fill="#ece8f2" stroke="#241f3a" stroke-width="1.3" stroke-linejoin="round"/>
<line x1="702.9999999999999" y1="66.8" x2="705.6" y2="70.1" stroke="#5a78c0" stroke-width="0.9" />
<line x1="702.9999999999999" y1="70.0" x2="705.6" y2="73.3" stroke="#5a78c0" stroke-width="0.9" />
<line x1="702.9999999999999" y1="73.2" x2="705.6" y2="76.5" stroke="#5a78c0" stroke-width="0.9" />
<line x1="702.9999999999999" y1="76.4" x2="705.6" y2="79.7" stroke="#5a78c0" stroke-width="0.9" />
<line x1="702.9999999999999" y1="79.6" x2="705.6" y2="82.89999999999999" stroke="#5a78c0" stroke-width="0.9" />
<line x1="702.9999999999999" y1="82.8" x2="705.6" y2="86.1" stroke="#5a78c0" stroke-width="0.9" />
<line x1="708" y1="68.39999999999999" x2="708" y2="86.8" stroke="#8fb4f4" stroke-width="1.6" />
<line x1="711.1" y1="68.39999999999999" x2="711.1" y2="86.8" stroke="#8fb4f4" stroke-width="1.6" />
<line x1="714.2" y1="68.39999999999999" x2="714.2" y2="86.8" stroke="#8fb4f4" stroke-width="1.6" />
<line x1="707.1999999999999" y1="70.7" x2="715.9" y2="70.7" stroke="#8fb4f4" stroke-width="1.4" />
<line x1="707.1999999999999" y1="75.1" x2="715.9" y2="75.1" stroke="#8fb4f4" stroke-width="1.4" />
<line x1="707.1999999999999" y1="79.6" x2="715.9" y2="79.6" stroke="#8fb4f4" stroke-width="1.4" />
<line x1="707.1999999999999" y1="84" x2="715.9" y2="84" stroke="#8fb4f4" stroke-width="1.4" />
<line x1="707.1999999999999" y1="86.2" x2="715.9" y2="86.2" stroke="#8fb4f4" stroke-width="1.4" />
<line x1="705.3" y1="61" x2="705.3" y2="66.5" stroke="#1a78ff" stroke-width="1.5" />
<line x1="708.3" y1="61" x2="708.3" y2="66.5" stroke="#1a78ff" stroke-width="1.5" />
<line x1="710.8" y1="61" x2="710.8" y2="66.5" stroke="#1a78ff" stroke-width="1.5" />
<line x1="713.6" y1="61" x2="713.6" y2="66.5" stroke="#1a78ff" stroke-width="1.5" />
<text x="701" y="103" font-size="12" fill="#3f3f52" textLength="27.5" lengthAdjust="spacingAndGlyphs" >Unify</text>
<text x="692.5" y="116" font-size="12" fill="#3f3f52" textLength="44" lengthAdjust="spacingAndGlyphs" >Columns</text>
<path d="M745.3 60.4 L748.3 62.9 V78.4 L745.3 75.9 Z" fill="#b4b8d0" stroke="#241f3a" stroke-width="1.3" stroke-linejoin="round"/>
<path d="M745.3 60.4 H753.6999999999999 L756.6999999999999 62.9 H748.3 Z" fill="#fbfbff" stroke="#241f3a" stroke-width="1.3" stroke-linejoin="round"/>
<path d="M748.3 62.9 H756.6999999999999 V78.4 H748.3 Z" fill="#ece8f2" stroke="#241f3a" stroke-width="1.3" stroke-linejoin="round"/>
<line x1="746.0999999999999" y1="62.9" x2="747.5" y2="65.4" stroke="#5a78c0" stroke-width="0.9" />
<line x1="746.0999999999999" y1="66.1" x2="747.5" y2="68.6" stroke="#5a78c0" stroke-width="0.9" />
<line x1="746.0999999999999" y1="69.3" x2="747.5" y2="71.8" stroke="#5a78c0" stroke-width="0.9" />
<line x1="746.0999999999999" y1="72.5" x2="747.5" y2="75.0" stroke="#5a78c0" stroke-width="0.9" />
<line x1="749.9" y1="63.699999999999996" x2="749.9" y2="77.60000000000001" stroke="#8fb4f4" stroke-width="1.6" />
<line x1="755.2" y1="63.699999999999996" x2="755.2" y2="77.60000000000001" stroke="#8fb4f4" stroke-width="1.6" />
<line x1="749.0999999999999" y1="65.7" x2="755.9" y2="65.7" stroke="#8fb4f4" stroke-width="1.4" />
<line x1="749.0999999999999" y1="68.7" x2="755.9" y2="68.7" stroke="#8fb4f4" stroke-width="1.4" />
<line x1="749.0999999999999" y1="71.8" x2="755.9" y2="71.8" stroke="#8fb4f4" stroke-width="1.4" />
<line x1="749.0999999999999" y1="74.8" x2="755.9" y2="74.8" stroke="#8fb4f4" stroke-width="1.4" />
<line x1="749.0999999999999" y1="76.9" x2="755.9" y2="76.9" stroke="#8fb4f4" stroke-width="1.4" />
<line x1="747.2" y1="58.2" x2="747.2" y2="62.5" stroke="#1a78ff" stroke-width="1.5" />
<line x1="749.7" y1="58.2" x2="749.7" y2="62.5" stroke="#1a78ff" stroke-width="1.5" />
<line x1="752.5" y1="58.2" x2="752.5" y2="62.5" stroke="#1a78ff" stroke-width="1.5" />
<line x1="754.7" y1="58.2" x2="754.7" y2="62.5" stroke="#1a78ff" stroke-width="1.5" />
<text x="759.2" y="79.7" font-size="23" fill="#1a78ff" style="font-family:'Liberation Serif'" >i</text>
<path d="M772.5 67 h6 l-3 3.5 z" fill="#777" />
<defs><linearGradient id="bar" x1="0" y1="0" x2="0" y2="1"><stop offset="0" stop-color="#d22800"/><stop offset="0.2" stop-color="#dc3400"/><stop offset="0.3" stop-color="#f08a10"/><stop offset="0.48" stop-color="#f8a820"/><stop offset="0.56" stop-color="#fff048"/><stop offset="0.74" stop-color="#fff870"/><stop offset="0.82" stop-color="#d8ffd8"/><stop offset="1" stop-color="#d8fff0"/></linearGradient></defs>
<rect x="745.6" y="89.5" width="3" height="17" fill="url(#bar)" stroke="#2a2050" stroke-width="0.9" style="shape-rendering:geometricPrecision"/>
<rect x="751.7" y="91.5" width="3" height="17.2" fill="url(#bar)" stroke="#2a2050" stroke-width="0.9" style="shape-rendering:geometricPrecision"/>
<rect x="758.3" y="90.3" width="3.2" height="17.2" fill="url(#bar)" stroke="#2a2050" stroke-width="0.9" style="shape-rendering:geometricPrecision"/>
<rect x="782.5" y="54.5" width="44" height="65" fill="#b5bad6" stroke="#1c2c78" stroke-width="1"/>
<path d="M796.0 63.099999999999994 L800.8 66.8 V85.69999999999999 L796.0 81.99999999999999 Z" fill="#b4b8d0" stroke="#241f3a" stroke-width="1.3" stroke-linejoin="round"/>
<path d="M796.0 63.099999999999994 H805.8 L810.5999999999999 66.8 H800.8 Z" fill="#fbfbff" stroke="#241f3a" stroke-width="1.3" stroke-linejoin="round"/>
<path d="M800.8 66.8 H810.5999999999999 V85.69999999999999 H800.8 Z" fill="#ece8f2" stroke="#241f3a" stroke-width="1.3" stroke-linejoin="round"/>
<line x1="796.8" y1="65.6" x2="800.0" y2="69.3" stroke="#5a78c0" stroke-width="0.9" />
<line x1="796.8" y1="68.8" x2="800.0" y2="72.5" stroke="#5a78c0" stroke-width="0.9" />
<line x1="796.8" y1="72.0" x2="800.0" y2="75.7" stroke="#5a78c0" stroke-width="0.9" />
<line x1="796.8" y1="75.19999999999999" x2="800.0" y2="78.89999999999999" stroke="#5a78c0" stroke-width="0.9" />
<line x1="796.8" y1="78.39999999999999" x2="800.0" y2="82.1" stroke="#5a78c0" stroke-width="0.9" />
<line x1="802.6" y1="67.6" x2="802.6" y2="84.89999999999999" stroke="#8fb4f4" stroke-width="1.6" />
<line x1="808.4" y1="67.6" x2="808.4" y2="84.89999999999999" stroke="#8fb4f4" stroke-width="1.6" />
<line x1="801.5999999999999" y1="70.8" x2="809.8" y2="70.8" stroke="#8fb4f4" stroke-width="1.4" />
<line x1="801.5999999999999" y1="74.8" x2="809.8" y2="74.8" stroke="#8fb4f4" stroke-width="1.4" />
<line x1="801.5999999999999" y1="79.2" x2="809.8" y2="79.2" stroke="#8fb4f4" stroke-width="1.4" />
<line x1="801.5999999999999" y1="82.8" x2="809.8" y2="82.8" stroke="#8fb4f4" stroke-width="1.4" />
<line x1="801.5999999999999" y1="84.6" x2="809.8" y2="84.6" stroke="#8fb4f4" stroke-width="1.4" />
<line x1="799.3" y1="59.1" x2="799.3" y2="65.5" stroke="#1a78ff" stroke-width="1.5" />
<line x1="802.6" y1="59.1" x2="802.6" y2="65.5" stroke="#1a78ff" stroke-width="1.5" />
<line x1="804.4" y1="59.1" x2="804.4" y2="65.5" stroke="#1a78ff" stroke-width="1.5" />
<line x1="807.4" y1="59.1" x2="807.4" y2="65.5" stroke="#1a78ff" stroke-width="1.5" />
<text x="784.5" y="103" font-size="12" fill="#3f3f52" textLength="39" lengthAdjust="spacingAndGlyphs" >Column</text>
<path d="M840.5 76 L842.4 79.2 V84.3 H861.7 V79.2 H846 L842 75.5 Z" fill="#dadae6" stroke="#a8a8be" stroke-width="1" />
<path d="M843.5 70 L846.7 72.5 V81.4 H865.7 V75.5 H850 Z" fill="#d0d0de" stroke="#a8a8be" stroke-width="1" />
<path d="M846.0 62.4 L850.4 65.3 V75.5 L846.0 72.6 Z" fill="#c0c0d4" stroke="#15151f" stroke-width="1.5" stroke-linejoin="round"/>
<path d="M846.0 62.4 H864.2 L868.6 65.3 H850.4 Z" fill="#f8f8fc" stroke="#15151f" stroke-width="1.5" stroke-linejoin="round"/>
<path d="M850.4 65.3 H868.6 V75.5 H850.4 Z" fill="#e8e4ee" stroke="#15151f" stroke-width="1.5" stroke-linejoin="round"/>
<line x1="855.9" y1="66" x2="855.9" y2="75" stroke="#8fb4f4" stroke-width="1.5" />
<line x1="851.5" y1="62.8" x2="855.5" y2="65.3" stroke="#8fb4f4" stroke-width="1" />
<line x1="860.2" y1="66" x2="860.2" y2="75" stroke="#8fb4f4" stroke-width="1.5" />
<line x1="855.8000000000001" y1="62.8" x2="859.8000000000001" y2="65.3" stroke="#8fb4f4" stroke-width="1" />
<line x1="864.6" y1="66" x2="864.6" y2="75" stroke="#8fb4f4" stroke-width="1.5" />
<line x1="860.2" y1="62.8" x2="864.2" y2="65.3" stroke="#8fb4f4" stroke-width="1" />
<line x1="851" y1="67.5" x2="868" y2="67.5" stroke="#8fb4f4" stroke-width="1.4" />
<line x1="851" y1="71.1" x2="868" y2="71.1" stroke="#8fb4f4" stroke-width="1.4" />
<line x1="851" y1="73.7" x2="868" y2="73.7" stroke="#8fb4f4" stroke-width="1.4" />
<g stroke="#1a78ff" stroke-width="1.3">
<path d="M843.1 65.3 H847.8 M845.3 67.5 H849.3 M843.1 70.4 H847.8 M845.3 72.6 H849.6 M867.9 65.3 H870.2 M868.8 67.5 H872 M868.8 72.3 H872" fill="none" />
</g>
<text x="842" y="103" font-size="12" fill="#3f3f52" textLength="27.5" lengthAdjust="spacingAndGlyphs" >Unify</text>
<text x="841" y="116" font-size="12" fill="#3f3f52" textLength="30.5" lengthAdjust="spacingAndGlyphs" >Beams</text>
<path d="M885.4 67.5 L889 70.4 V80.30000000000001 L885.4 77.4 Z" fill="#ececf4" stroke="#d4d4e0" stroke-width="1.2" stroke-linejoin="round"/>
<path d="M885.4 67.5 H907.0 L910.6 70.4 H889 Z" fill="#fbfbfe" stroke="#d4d4e0" stroke-width="1.2" stroke-linejoin="round"/>
<path d="M889 70.4 H910.6 V80.30000000000001 H889 Z" fill="#f4f4f9" stroke="#d4d4e0" stroke-width="1.2" stroke-linejoin="round"/>
<line x1="893.5" y1="71" x2="893.5" y2="80" stroke="#c4d8fa" stroke-width="1.2" />
<line x1="889.9" y1="67.8" x2="893.5" y2="70.4" stroke="#d4e2fa" stroke-width="1" />
<line x1="898" y1="71" x2="898" y2="80" stroke="#c4d8fa" stroke-width="1.2" />
<line x1="894.4" y1="67.8" x2="898" y2="70.4" stroke="#d4e2fa" stroke-width="1" />
<line x1="902.5" y1="71" x2="902.5" y2="80" stroke="#c4d8fa" stroke-width="1.2" />
<line x1="898.9" y1="67.8" x2="902.5" y2="70.4" stroke="#d4e2fa" stroke-width="1" />
<line x1="907" y1="71" x2="907" y2="80" stroke="#c4d8fa" stroke-width="1.2" />
<line x1="903.4" y1="67.8" x2="907" y2="70.4" stroke="#d4e2fa" stroke-width="1" />
<line x1="889.5" y1="72.8" x2="910.4" y2="72.8" stroke="#c4d8fa" stroke-width="1.2" />
<line x1="889.5" y1="75.3" x2="910.4" y2="75.3" stroke="#c4d8fa" stroke-width="1.2" />
<line x1="889.5" y1="77.8" x2="910.4" y2="77.8" stroke="#c4d8fa" stroke-width="1.2" />
<path d="M882.1 70.4 H885.8 M884.3 72.6 H888 M882.1 75.5 H885.8 M884.3 77.4 H888 M910.6 70.4 H912.2 M911.3 72.6 H913.8 M911.3 77.4 H913.8" fill="none" stroke="#a8ccff" stroke-width="1.1" />
<text x="884" y="103" font-size="12" fill="#9c9cab" textLength="26.5" lengthAdjust="spacingAndGlyphs" >Beam</text>
<rect x="945" y="60" width="2" height="26" fill="#2a2640"/>
<rect x="949" y="61.2" width="0.9" height="24.8" fill="#3a3658" style="shape-rendering:geometricPrecision"/>
<rect x="952.2" y="62.1" width="0.8" height="23.9" fill="#4a4668" style="shape-rendering:geometricPrecision"/>
<rect x="955.2" y="63.1" width="0.7" height="22.9" fill="#55527a" style="shape-rendering:geometricPrecision"/>
<text x="931" y="103" font-size="12" fill="#3f3f52" textLength="36.5" lengthAdjust="spacingAndGlyphs" >R.Items</text>
<path d="M946 110 h6 l-3 3.5 z" fill="#777" />
<g stroke="#b4b0bc" fill="none" stroke-width="1">
<path d="M980.2 86.4 H984.9 L986.4 85 M984.4 75.3 L999.3 60.9 M986.4 85.7 L1000.2 70.3 H1004.7" fill="none" />
<path d="M986.4 72.3 V85.7" fill="none" />
<path d="M989.4 69.2 V82.4" fill="none" />
<path d="M992.8 66.1 V79.10000000000001" fill="none" />
<path d="M995.8 63.0 V75.80000000000001" fill="none" />
<path d="M998.8 59.9 V72.5" fill="none" />
</g>
<text x="977.5" y="103" font-size="12" fill="#9c9cab" textLength="29" lengthAdjust="spacingAndGlyphs" >Reinf.</text>
<text x="974.5" y="116" font-size="12" fill="#9c9cab" textLength="26" lengthAdjust="spacingAndGlyphs" >Cage</text>
<path d="M1002 110 h6 l-3 3.5 z" fill="#777" />
<g stroke="#a8ccff" fill="none" stroke-width="1">
<path d="M1022 62.4 H1050 M1022 64.4 H1050 M1025.5 59 V86 M1027.2 59 V86 M1044.8 59 V86 M1046.6 59 V86" fill="none" />
</g>
<defs><linearGradient id="door" x1="0" y1="0" x2="1" y2="1"><stop offset="0" stop-color="#e4e2e8"/><stop offset="0.45" stop-color="#ffffff"/></linearGradient></defs>
<path d="M1029.7 86 V66.6 H1042.6 V86" fill="url(#door)" stroke="#a8a4a8" stroke-width="1.6" />
<text x="1015" y="103" font-size="12" fill="#9c9cab" textLength="41.5" lengthAdjust="spacingAndGlyphs" >Framing</text>
<path d="M1032 110 h6 l-3 3.5 z" fill="#777" />
<g stroke="#3a3658" fill="none" stroke-width="1.3">
<rect x="1084.4" y="62.4" width="11.4" height="19.8" fill="none" stroke="#55527a" stroke-width="1" rx="1.5" style="shape-rendering:geometricPrecision"/>
<path d="M1084.6 62.8 L1087.4 65.9 M1095.8 62.6 L1098.8 65.9 M1084.6 82 L1087.4 85.5 M1095.8 82 L1098.6 85.5" fill="none" stroke-width="1"/>
<rect x="1087.4" y="65.9" width="11.4" height="19.8" fill="none" stroke="#3a3658" stroke-width="1.4" rx="1" style="shape-rendering:geometricPrecision"/>
</g>
<rect x="1088" y="74.2" width="10.5" height="2.2" fill="#a8b8e8"/>
<g stroke="#1a78ff" fill="#1a78ff" stroke-width="1.2">
<path d="M1079.5 65.4 V73 M1077 71 L1079.5 74.8 L1082 71 Z M1103.7 65.4 V73 M1101.2 71 L1103.7 74.8 L1106.2 71 Z" fill="none" />
</g>
<line x1="1076" y1="75.2" x2="1105.2" y2="75.2" stroke="#5a9cff" stroke-width="1" stroke-dasharray="2.5 1.2 0.8 1.2"/>
<line x1="1087.5" y1="75.3" x2="1098.5" y2="75.3" stroke="#1a78ff" stroke-width="1.6" stroke-dasharray="2 1"/>
<text x="1072.5" y="103" font-size="12" fill="#3f3f52" textLength="37" lengthAdjust="spacingAndGlyphs" >Section</text>
<circle cx="1146.9" cy="70.1" r="4.9" fill="none" stroke="#a8a6b4" stroke-width="3.0000000000000004" />
<rect x="1145.2" y="61.699999999999996" width="3.4" height="3.0" fill="#a8a6b4" transform="rotate(0.0 1146.9 70.1)" style="shape-rendering:geometricPrecision"/>
<rect x="1145.2" y="61.699999999999996" width="3.4" height="3.0" fill="#a8a6b4" transform="rotate(45.0 1146.9 70.1)" style="shape-rendering:geometricPrecision"/>
<rect x="1145.2" y="61.699999999999996" width="3.4" height="3.0" fill="#a8a6b4" transform="rotate(90.0 1146.9 70.1)" style="shape-rendering:geometricPrecision"/>
<rect x="1145.2" y="61.699999999999996" width="3.4" height="3.0" fill="#a8a6b4" transform="rotate(135.0 1146.9 70.1)" style="shape-rendering:geometricPrecision"/>
<rect x="1145.2" y="61.699999999999996" width="3.4" height="3.0" fill="#a8a6b4" transform="rotate(180.0 1146.9 70.1)" style="shape-rendering:geometricPrecision"/>
<rect x="1145.2" y="61.699999999999996" width="3.4" height="3.0" fill="#a8a6b4" transform="rotate(225.0 1146.9 70.1)" style="shape-rendering:geometricPrecision"/>
<rect x="1145.2" y="61.699999999999996" width="3.4" height="3.0" fill="#a8a6b4" transform="rotate(270.0 1146.9 70.1)" style="shape-rendering:geometricPrecision"/>
<rect x="1145.2" y="61.699999999999996" width="3.4" height="3.0" fill="#a8a6b4" transform="rotate(315.0 1146.9 70.1)" style="shape-rendering:geometricPrecision"/>
<rect x="1133" y="81.3" width="4.1" height="4.5" fill="#c4f4fa" style="shape-rendering:geometricPrecision"/>
<rect x="1137" y="81.3" width="4.1" height="4.5" fill="#dcf8e8" style="shape-rendering:geometricPrecision"/>
<rect x="1141" y="81.3" width="4.1" height="4.5" fill="#fcf6c4" style="shape-rendering:geometricPrecision"/>
<rect x="1145" y="81.3" width="4.1" height="4.5" fill="#fcdcac" style="shape-rendering:geometricPrecision"/>
<rect x="1149" y="81.3" width="4.1" height="4.5" fill="#f8c09c" style="shape-rendering:geometricPrecision"/>
<rect x="1153" y="81.3" width="4.1" height="4.5" fill="#e8a494" style="shape-rendering:geometricPrecision"/>
<rect x="1157" y="81.3" width="4.1" height="4.5" fill="#d49090" style="shape-rendering:geometricPrecision"/>
<text x="1132.5" y="103" font-size="12" fill="#9c9cab" textLength="29" lengthAdjust="spacingAndGlyphs" >Reinf.</text>
<text x="1125.5" y="116" font-size="12" fill="#9c9cab" textLength="34.5" lengthAdjust="spacingAndGlyphs" >Palette</text>
<path d="M1162.5 110 h6 l-3 3.5 z" fill="#777" />
<rect x="1178" y="60" width="2" height="19" fill="#e00878"/>
<rect x="1182" y="60" width="2" height="19" fill="#e00878"/>
<rect x="1186" y="65" width="0.9" height="14" fill="#a8c020" style="shape-rendering:geometricPrecision"/>
<rect x="1189" y="65" width="0.9" height="14" fill="#a8c020" style="shape-rendering:geometricPrecision"/>
<rect x="1192" y="65" width="0.9" height="14" fill="#a8c020" style="shape-rendering:geometricPrecision"/>
<rect x="1195" y="63" width="0.9" height="16" fill="#7a68b8" style="shape-rendering:geometricPrecision"/>
<text x="1202.5" y="73" font-size="12" fill="#3f3f52" textLength="74" lengthAdjust="spacingAndGlyphs" >Reinforcement</text>
<circle cx="1186.7" cy="96.2" r="4.6" fill="none" stroke="#1a1a24" stroke-width="1.2" />
<line x1="1181.5" y1="101.4" x2="1192.9" y2="90.5" stroke="#1a1a24" stroke-width="1.1" />
<rect x="1177" y="104.2" width="7" height="4.5" fill="#a8c820" style="shape-rendering:geometricPrecision"/>
<rect x="1184" y="104.2" width="7" height="4.5" fill="#7a68b8" style="shape-rendering:geometricPrecision"/>
<rect x="1191" y="104.2" width="7" height="4.5" fill="#e01080" style="shape-rendering:geometricPrecision"/>
<text x="1202.5" y="103" font-size="12" fill="#3f3f52" textLength="61" lengthAdjust="spacingAndGlyphs" >Colour by Ø</text>
<path d="M1298.4 59.4 L1295.6 66.4" fill="none" stroke="#1a78ff" stroke-width="1.7" />
<g stroke="#1a78ff" fill="none" stroke-width="1">
<path d="M1287.7 68 H1303.9 M1289.8 65.8 V70.4 M1301.6 65.8 V70.4 M1288.3 69.5 L1291.3 66.5 M1300.1 69.5 L1303.1 66.5 M1288.3 66.5 L1291.3 69.5 M1300.1 66.5 L1303.1 69.5" fill="none" />
</g>
<rect x="1285.6" y="72.8" width="16.2" height="1.8" fill="#1c1830" style="shape-rendering:geometricPrecision"/>
<rect x="1290.3" y="76" width="16.2" height="1.8" fill="#1c1830" style="shape-rendering:geometricPrecision"/>
<text x="1328.7" y="64.9" font-size="9.5" fill="#1a78ff" >A</text>
<g stroke="#15151f" fill="none" stroke-width="1.2">
<path d="M1329.2 68.5 H1350.6 M1331.2 67.0 V75.4 M1348.6 67.0 V75.4" fill="none" />
<path d="M1329.6000000000001 66.7 L1332.8 69.9 M1347.0 69.9 L1350.1999999999998 66.7 M1329.2 70.0 L1332.4 66.5 M1347.3999999999999 66.5 L1350.6 70.0" fill="none" stroke-width="0.9"/>
</g>
<rect x="1329.9" y="76.2" width="2.6" height="2.6" fill="#fff" stroke="#1a78ff" stroke-width="1.1" style="shape-rendering:geometricPrecision"/>
<path d="M1328.6000000000001 74.9 L1329.9 76.2 M1333.8 74.9 L1332.5 76.2 M1328.6000000000001 80.1 L1329.9 78.8 M1333.8 80.1 L1332.5 78.8" fill="none" stroke="#1a78ff" stroke-width="1" />
<rect x="1347.3" y="76.2" width="2.6" height="2.6" fill="#fff" stroke="#1a78ff" stroke-width="1.1" style="shape-rendering:geometricPrecision"/>
<path d="M1346.0 74.9 L1347.3 76.2 M1351.1999999999998 74.9 L1349.8999999999999 76.2 M1346.0 80.1 L1347.3 78.8 M1351.1999999999998 80.1 L1349.8999999999999 78.8" fill="none" stroke="#1a78ff" stroke-width="1" />
<path d="M1366.2 73.4 L1378.4 61.2 Q1379.2 60.4 1380 61.2 L1380.9 62.1 Q1381.7 62.9 1380.9 63.7 L1368.6 75.6 L1365.3 76.4 Z" fill="#3a3658" />
<path d="M1376.8 62.8 L1379.3 65.3" fill="none" stroke="#cfcfe0" stroke-width="0.8" />
<path d="M1365.5 76.8 Q1377 76.5 1383.7 69.6" fill="none" stroke="#2a2640" stroke-width="1" />
<rect x="1365" y="78.1" width="19.2" height="1" fill="#2a2640" style="shape-rendering:geometricPrecision"/>
<path d="M1392.5 67 h6 l-3 3.5 z" fill="#777" />
<path d="M1392.5 97 h6 l-3 3.5 z" fill="#777" />
<text x="1328.7" y="94.9" font-size="9.5" fill="#1a78ff" >A</text>
<text x="1342" y="95.2" font-size="5.5" fill="#2a2640" textLength="5.2" lengthAdjust="spacingAndGlyphs" >M</text>
<rect x="1329.1" y="100.1" width="12.6" height="9.4" fill="#c4c4d8" stroke="#a4a4bc" stroke-width="1" style="shape-rendering:geometricPrecision"/>
<path d="M1334.1 103.7 L1340.2 97.3 H1350" fill="none" stroke="#2a2640" stroke-width="1" />
<circle cx="1334.1" cy="103.7" r="1.2" fill="#fff" stroke="#2a2640" stroke-width="0.9" />
<g stroke="#15151f" fill="none" stroke-width="1.2">
<path d="M1363.5 96.6 H1384.6 M1365.5 95.1 V104.4 M1382.6 95.1 V104.4" fill="none" />
<path d="M1363.9 94.8 L1367.1 98.0 M1381.0 98.0 L1384.1999999999998 94.8 M1363.5 98.1 L1366.7 94.6 M1381.3999999999999 94.6 L1384.6 98.1" fill="none" stroke-width="0.9"/>
</g>
<rect x="1364.2" y="105.2" width="2.6" height="2.6" fill="#fff" stroke="#1a78ff" stroke-width="1.1" style="shape-rendering:geometricPrecision"/>
<path d="M1362.9 103.9 L1364.2 105.2 M1368.1 103.9 L1366.8 105.2 M1362.9 109.1 L1364.2 107.8 M1368.1 109.1 L1366.8 107.8" fill="none" stroke="#1a78ff" stroke-width="1" />
<rect x="1381.3" y="105.2" width="2.6" height="2.6" fill="#fff" stroke="#1a78ff" stroke-width="1.1" style="shape-rendering:geometricPrecision"/>
<path d="M1380.0 103.9 L1381.3 105.2 M1385.1999999999998 103.9 L1383.8999999999999 105.2 M1380.0 109.1 L1381.3 107.8 M1385.1999999999998 109.1 L1383.8999999999999 107.8" fill="none" stroke="#1a78ff" stroke-width="1" />
<rect x="1422.2" y="63.2" width="25.5" height="19.4" fill="#fbfbfe" stroke="#3a3658" stroke-width="1.3" style="shape-rendering:geometricPrecision"/>
<rect x="1422.8" y="63.8" width="24.3" height="2.6" fill="#6a6888" style="shape-rendering:geometricPrecision"/>
<line x1="1422.5" y1="70.4" x2="1447.5" y2="70.4" stroke="#3a3658" stroke-width="1" />
<line x1="1422.5" y1="74.3" x2="1447.5" y2="74.3" stroke="#3a3658" stroke-width="1" />
<line x1="1422.5" y1="78.4" x2="1447.5" y2="78.4" stroke="#3a3658" stroke-width="1" />
<line x1="1428.7" y1="66.4" x2="1428.7" y2="82.4" stroke="#3a3658" stroke-width="1" />
<line x1="1434.3" y1="66.4" x2="1434.3" y2="82.4" stroke="#3a3658" stroke-width="1" />
<text x="1414" y="103" font-size="12" fill="#3f3f52" textLength="46.5" lengthAdjust="spacingAndGlyphs" >Schedule</text>
<path d="M1433 110 h6 l-3 3.5 z" fill="#777" />
<path d="M1467.1 64.8 L1472.3 60.4 H1488.7 V76.5 H1467.1 Z" fill="#f4f4fa" stroke="#2a2640" stroke-width="1.3" stroke-linejoin="round"/>
<path d="M1467.3 64.8 H1472.3 V60.6" fill="none" stroke="#2a2640" stroke-width="0.9" />
<rect x="1474.2" y="62" width="12.6" height="8.9" fill="#e6e6f0" stroke="#b4b4c8" stroke-width="1" style="shape-rendering:geometricPrecision"/>
<path d="M1476 65 H1485 M1476 67.8 H1485 M1478.5 63.3 V69.6 M1482.5 63.3 V69.6" fill="none" stroke="#c4c4d4" stroke-width="0.8" />
<rect x="1478.9" y="72.7" width="9.8" height="3.8" fill="#2a2640" style="shape-rendering:geometricPrecision"/>
<rect x="1479.9" y="73.6" width="3.4" height="2.2" fill="#fff" style="shape-rendering:geometricPrecision"/>
<rect x="1484.2" y="73.5" width="3.6" height="1" fill="#fff" style="shape-rendering:geometricPrecision"/>
<rect x="1484.2" y="75" width="3.6" height="0.9" fill="#fff" style="shape-rendering:geometricPrecision"/>
<path d="M1468.1 91.5 H1487.8 V107.6 H1473.7 L1468.1 102.3 Z" fill="#f4f4fa" stroke="#2a2640" stroke-width="1.3" stroke-linejoin="round"/>
<path d="M1468.3 102.3 H1473.7 V107.4" fill="none" stroke="#2a2640" stroke-width="0.9" />
<g stroke="#15151f" fill="none" stroke-width="1.7">
<path d="M1470.7 96.6 H1486 M1470.7 100.4 H1486 M1473.7 93.4 V102.7 M1477.4 93.4 V102.7 M1481.2 93.4 V102.7 M1484.5 93.4 V102.7" fill="none" />
</g>
<rect x="1477.5" y="103.7" width="10.3" height="3.9" fill="#2a2640" style="shape-rendering:geometricPrecision"/>
<rect x="1478.5" y="104.6" width="3.6" height="2.2" fill="#fff" style="shape-rendering:geometricPrecision"/>
<rect x="1483" y="104.5" width="3.8" height="1" fill="#fff" style="shape-rendering:geometricPrecision"/>
<rect x="1483" y="106" width="3.8" height="0.9" fill="#fff" style="shape-rendering:geometricPrecision"/>
<rect x="1516.3" y="66.2" width="5.6" height="5.6" fill="#fbfbfe" stroke="#b0aeb8" stroke-width="1.3" style="shape-rendering:geometricPrecision"/>
<rect x="1518.1" y="62.22" width="2" height="2.38" fill="#b0aeb8" style="shape-rendering:geometricPrecision"/>
<path d="M1515.8999999999999 62.22 L1519.1 58.7 L1522.3 62.22 Z" fill="#b0aeb8" />
<rect x="1518.1" y="73.4" width="2" height="2.38" fill="#b0aeb8" style="shape-rendering:geometricPrecision"/>
<path d="M1515.8999999999999 75.78 L1519.1 79.3 L1522.3 75.78 Z" fill="#b0aeb8" />
<rect x="1512.32" y="68.0" width="2.38" height="2" fill="#b0aeb8" style="shape-rendering:geometricPrecision"/>
<path d="M1512.32 65.8 L1508.8 69 L1512.32 72.2 Z" fill="#b0aeb8" />
<rect x="1523.5" y="68.0" width="2.38" height="2" fill="#b0aeb8" style="shape-rendering:geometricPrecision"/>
<path d="M1525.8799999999999 65.8 L1529.3999999999999 69 L1525.8799999999999 72.2 Z" fill="#b0aeb8" />
<rect x="1515.1000000000001" y="95.2" width="3.6" height="3.6" fill="#fbfbfe" stroke="#b0aeb8" stroke-width="1.3" style="shape-rendering:geometricPrecision"/>
<rect x="1516.0" y="91.77" width="1.8" height="1.8299999999999983" fill="#b0aeb8" style="shape-rendering:geometricPrecision"/>
<path d="M1514.2 91.77 L1516.9 88.8 L1519.6000000000001 91.77 Z" fill="#b0aeb8" />
<rect x="1516.0" y="100.4" width="1.8" height="1.8299999999999983" fill="#b0aeb8" style="shape-rendering:geometricPrecision"/>
<path d="M1514.2 102.23 L1516.9 105.2 L1519.6000000000001 102.23 Z" fill="#b0aeb8" />
<rect x="1511.67" y="96.1" width="1.8299999999999983" height="1.8" fill="#b0aeb8" style="shape-rendering:geometricPrecision"/>
<path d="M1511.67 94.3 L1508.7 97 L1511.67 99.7 Z" fill="#b0aeb8" />
<rect x="1520.3000000000002" y="96.1" width="1.8299999999999983" height="1.8" fill="#b0aeb8" style="shape-rendering:geometricPrecision"/>
<path d="M1522.13 94.3 L1525.1000000000001 97 L1522.13 99.7 Z" fill="#b0aeb8" />
<line x1="1518.8" y1="98.9" x2="1526.3" y2="106.2" stroke="#c8c6d0" stroke-width="0.9" stroke-dasharray="1 0.8"/>
<path d="M1527.5 105.2 L1529.7 107.4 L1527.5 109.6 L1525.3 107.4 Z" fill="#fff" stroke="#8ec0ff" stroke-width="1.2" />
<circle cx="1546.9" cy="63.1" r="3.7" fill="#eae8f0" stroke="#b0aeb8" stroke-width="1.3" />
<circle cx="1548.7" cy="59.4" r="1.2" fill="#fff" stroke="#b0aeb8" stroke-width="1" />
<path d="M1552.5 62.4 H1557.2 Q1559.4 62.4 1559.4 64.6 V68.4" fill="none" stroke="#b0aeb8" stroke-width="1.2" />
<path d="M1557 66.3 L1559.4 69 L1561.8 66.3" fill="none" stroke="#b0aeb8" stroke-width="1.3" />
<circle cx="1557.2" cy="74.9" r="3.5" fill="#e4ecfa" stroke="#8ec0ff" stroke-width="1.5" />
<circle cx="1552.8" cy="72.8" r="3.6" fill="#dce6f8" stroke="#8ec0ff" stroke-width="1.5" />
<circle cx="1554.4" cy="69.4" r="1.2" fill="#fff" stroke="#8ec0ff" stroke-width="1" />
<circle cx="1558.5" cy="71.6" r="1.2" fill="#fff" stroke="#8ec0ff" stroke-width="1" />
<rect x="1579" y="59" width="17" height="1.9" fill="#8ec0ff" style="shape-rendering:geometricPrecision"/>
<rect x="1578.1" y="64" width="17" height="0.9" fill="#b0aeb8" style="shape-rendering:geometricPrecision"/>
<rect x="1577.2" y="68" width="16.6" height="0.9" fill="#b0aeb8" style="shape-rendering:geometricPrecision"/>
<line x1="1596.6" y1="70.4" x2="1593.4" y2="79.6" stroke="#b0aeb8" stroke-width="2" />
<rect x="1544" y="89" width="7.9" height="1.9" fill="#b0aeb8" style="shape-rendering:geometricPrecision"/>
<rect x="1554" y="89" width="7.9" height="1.9" fill="#b0aeb8" style="shape-rendering:geometricPrecision"/>
<rect x="1544" y="93" width="7.9" height="1.9" fill="#b0aeb8" style="shape-rendering:geometricPrecision"/>
<rect x="1554" y="93" width="7.9" height="1.9" fill="#b0aeb8" style="shape-rendering:geometricPrecision"/>
<rect x="1544" y="97.1" width="7.9" height="1.9" fill="#b0aeb8" style="shape-rendering:geometricPrecision"/>
<rect x="1554" y="97.1" width="7.9" height="1.9" fill="#b0aeb8" style="shape-rendering:geometricPrecision"/>
<rect x="1544" y="101" width="7.9" height="1.9" fill="#b0aeb8" style="shape-rendering:geometricPrecision"/>
<rect x="1554" y="101" width="7.9" height="1.9" fill="#b0aeb8" style="shape-rendering:geometricPrecision"/>
<path d="M1542.6 104 Q1542.6 106.8 1545.5 106.8 H1550 Q1552.4 106.8 1553 109.4 Q1553.6 106.8 1556 106.8 H1560.6 Q1563.6 106.8 1563.6 104" fill="none" stroke="#8ec0ff" stroke-width="1.8" />
<rect x="0" y="139" width="1" height="32" fill="#4a4a4a"/>
<text x="31" y="158.5" font-size="12" fill="#16168a" textLength="22" lengthAdjust="spacingAndGlyphs" >Tag:</text>
<rect x="57.5" y="144.5" width="119" height="22" fill="#f0f0f0" stroke="#7a7a7a" stroke-width="1"/>
<text x="62" y="159.1" font-size="12" fill="#6c6c7c" textLength="42" lengthAdjust="spacingAndGlyphs" >K-1-5-38</text>
<text x="180" y="158.5" font-size="12" fill="#16168a" >6</text>
<rect x="219.5" y="144.5" width="86" height="22" fill="#f0f0f0" stroke="#7a7a7a" stroke-width="1"/>
<text x="225" y="159.1" font-size="12" fill="#6c6c7c" textLength="35" lengthAdjust="spacingAndGlyphs" >AT-005</text>
<text x="309.5" y="158.5" font-size="12" fill="#16168a" >1</text>
<rect x="349" y="140" width="34" height="31" fill="#f2f2f2"/>
<rect x="349" y="140" width="34" height="1" fill="#ffffff"/>
<rect x="349" y="140" width="1" height="31" fill="#ffffff"/>
<rect x="349" y="170" width="34" height="1" fill="#6e6e6e"/>
<rect x="382" y="140" width="1" height="31" fill="#6e6e6e"/>
<rect x="355.5" y="146.5" width="20" height="14" fill="none" stroke="#2a2640" stroke-width="1"/>
<rect x="355.5" y="146.5" width="20" height="14" fill="none" stroke="#2a2640" stroke-width="1.2" rx="2"/>
<rect x="358" y="149" width="2" height="2" fill="#2a2640"/>
<rect x="363" y="149" width="2" height="2" fill="#2a2640"/>
<rect x="368" y="149" width="2" height="2" fill="#2a2640"/>
<rect x="373" y="149" width="2" height="2" fill="#2a2640"/>
<rect x="358" y="156" width="2" height="2" fill="#2a2640"/>
<rect x="363" y="156" width="2" height="2" fill="#2a2640"/>
<path d="M359 147 V153 M356 150 H362" fill="none" stroke="#2a2640" stroke-width="1" />
<circle cx="371.5" cy="160.5" r="5.5" fill="#f2f2f2" />
<circle cx="371.5" cy="160.5" r="3.2" fill="none" stroke="#2a2640" stroke-width="2.6" />
<rect x="370.3" y="154.3" width="2.4" height="3" fill="#2a2640" transform="rotate(0 371.5 160.5)" style="shape-rendering:geometricPrecision"/>
<rect x="370.3" y="154.3" width="2.4" height="3" fill="#2a2640" transform="rotate(45 371.5 160.5)" style="shape-rendering:geometricPrecision"/>
<rect x="370.3" y="154.3" width="2.4" height="3" fill="#2a2640" transform="rotate(90 371.5 160.5)" style="shape-rendering:geometricPrecision"/>
<rect x="370.3" y="154.3" width="2.4" height="3" fill="#2a2640" transform="rotate(135 371.5 160.5)" style="shape-rendering:geometricPrecision"/>
<rect x="370.3" y="154.3" width="2.4" height="3" fill="#2a2640" transform="rotate(180 371.5 160.5)" style="shape-rendering:geometricPrecision"/>
<rect x="370.3" y="154.3" width="2.4" height="3" fill="#2a2640" transform="rotate(225 371.5 160.5)" style="shape-rendering:geometricPrecision"/>
<rect x="370.3" y="154.3" width="2.4" height="3" fill="#2a2640" transform="rotate(270 371.5 160.5)" style="shape-rendering:geometricPrecision"/>
<rect x="370.3" y="154.3" width="2.4" height="3" fill="#2a2640" transform="rotate(315 371.5 160.5)" style="shape-rendering:geometricPrecision"/>
<rect x="388" y="145" width="1" height="21" fill="#555"/>
<rect x="397" y="145" width="1" height="21" fill="#555"/>
<rect x="388" y="146.0" width="10" height="1" fill="#555"/>
<rect x="388" y="149.8" width="10" height="1" fill="#555"/>
<rect x="388" y="153.6" width="10" height="1" fill="#555"/>
<rect x="388" y="157.4" width="10" height="1" fill="#555"/>
<rect x="388" y="161.2" width="10" height="1" fill="#555"/>
<rect x="388" y="165.0" width="10" height="1" fill="#555"/>
<g stroke="#1a78ff" fill="none" stroke-width="1.2">
<path d="M401 158.5 H409 M401 163.5 H409 M405 156 V166 M403 156.5 L407 160.5 M403 161.5 L407 165.5" fill="none" />
</g>
<rect x="414.5" y="146.5" width="71" height="17" fill="#f0f0f0" stroke="#7a7a7a" stroke-width="1"/>
<text x="420" y="158.6" font-size="12" fill="#6c6c7c" textLength="20" lengthAdjust="spacingAndGlyphs" >200</text>
<rect x="490" y="145" width="1" height="21" fill="#555"/>
<rect x="499" y="145" width="1" height="21" fill="#555"/>
<rect x="490" y="146.0" width="10" height="1" fill="#555"/>
<rect x="490" y="149.8" width="10" height="1" fill="#555"/>
<rect x="490" y="153.6" width="10" height="1" fill="#555"/>
<rect x="490" y="157.4" width="10" height="1" fill="#555"/>
<rect x="490" y="161.2" width="10" height="1" fill="#555"/>
<rect x="490" y="165.0" width="10" height="1" fill="#555"/>
<g stroke="#1a78ff" fill="none" stroke-width="1.2">
<path d="M503 150.5 H511 M503 155.5 H511 M507 148 V158 M505 148.5 L509 152.5 M505 153.5 L509 157.5" fill="none" />
</g>
<rect x="516.5" y="146.5" width="71" height="17" fill="#f0f0f0" stroke="#7a7a7a" stroke-width="1"/>
<text x="522" y="158.6" font-size="12" fill="#6c6c7c" textLength="20" lengthAdjust="spacingAndGlyphs" >200</text>
<rect x="592" y="145" width="1" height="21" fill="#555"/>
<rect x="601" y="145" width="1" height="21" fill="#555"/>
<rect x="592" y="146.0" width="10" height="1" fill="#555"/>
<rect x="592" y="149.8" width="10" height="1" fill="#555"/>
<rect x="592" y="153.6" width="10" height="1" fill="#555"/>
<rect x="592" y="157.4" width="10" height="1" fill="#555"/>
<rect x="592" y="161.2" width="10" height="1" fill="#555"/>
<rect x="592" y="165.0" width="10" height="1" fill="#555"/>
<g stroke="#1a78ff" fill="none" stroke-width="1.2">
<path d="M605 145.5 H613 M605 150.5 H613 M609 143 V153 M607 143.5 L611 147.5 M607 148.5 L611 152.5" fill="none" />
</g>
<rect x="618.5" y="146.5" width="71" height="17" fill="#f0f0f0" stroke="#7a7a7a" stroke-width="1"/>
<text x="624" y="158.6" font-size="12" fill="#6c6c7c" textLength="36" lengthAdjust="spacingAndGlyphs" >100 x 4</text>
<rect x="713.5" y="148.5" width="12" height="12" fill="#fff" stroke="#333" stroke-width="1"/>
<path d="M715.5 154.5 L718 157.5 L723.5 150.5" fill="none" stroke="#111" stroke-width="1.8" />
<text x="729" y="158.5" font-size="12" fill="#111" textLength="21.5" lengthAdjust="spacingAndGlyphs" >joint</text>
<rect x="766.5" y="146.5" width="59" height="17" fill="#fff" stroke="#555" stroke-width="1"/>
<text x="772" y="158.6" font-size="12" fill="#16168a" textLength="20" lengthAdjust="spacingAndGlyphs" >900</text>
<rect x="850" y="140" width="34" height="31" fill="#f2f2f2"/>
<rect x="850" y="140" width="34" height="1" fill="#ffffff"/>
<rect x="850" y="140" width="1" height="31" fill="#ffffff"/>
<rect x="850" y="170" width="34" height="1" fill="#6e6e6e"/>
<rect x="883" y="140" width="1" height="31" fill="#6e6e6e"/>
<g stroke="#1c1c28" fill="none" stroke-width="1.6">
<path d="M860.5 152 V166 M864 166 V163 Q864 160 866.5 157.5 Q869.5 154.5 869.5 152" fill="none" />
</g>
<g stroke="#1a78ff" fill="none" stroke-width="1">
<path d="M861 147.5 H871 M862.5 145.5 V149.5 M869.5 145.5 V149.5 M861.5 146 L863.5 149 M868.5 146 L870.5 149" fill="none" />
<path d="M874.5 154 V163 M872.5 155.5 H876.5 M872.5 161.5 H876.5 M873 154.5 L876 156.5 M873 160.5 L876 162.5" fill="none" />
</g>
<rect x="889" y="140" width="31" height="31" fill="#f2f2f2"/>
<rect x="889" y="140" width="31" height="1" fill="#ffffff"/>
<rect x="889" y="140" width="1" height="31" fill="#ffffff"/>
<rect x="889" y="170" width="31" height="1" fill="#6e6e6e"/>
<rect x="919" y="140" width="1" height="31" fill="#6e6e6e"/>
<rect x="896.5" y="143.5" width="16" height="23" fill="#dfdfec" stroke="#6a688a" stroke-width="1"/>
<rect x="898" y="145.3" width="4" height="3.2" fill="#2a2640" rx="1.5" style="shape-rendering:geometricPrecision"/>
<rect x="898" y="148.5" width="4" height="3" fill="#1a78ff" rx="1.5" style="shape-rendering:geometricPrecision"/>
<rect x="907" y="145.3" width="4" height="3.2" fill="#2a2640" rx="1.5" style="shape-rendering:geometricPrecision"/>
<rect x="907" y="148.5" width="4" height="3" fill="#1a78ff" rx="1.5" style="shape-rendering:geometricPrecision"/>
<rect x="898" y="162.0" width="4" height="3.2" fill="#2a2640" rx="1.5" style="shape-rendering:geometricPrecision"/>
<rect x="898" y="158.8" width="4" height="3" fill="#1a78ff" rx="1.5" style="shape-rendering:geometricPrecision"/>
<rect x="907" y="162.0" width="4" height="3.2" fill="#2a2640" rx="1.5" style="shape-rendering:geometricPrecision"/>
<rect x="907" y="158.8" width="4" height="3" fill="#1a78ff" rx="1.5" style="shape-rendering:geometricPrecision"/>
<rect x="925" y="140" width="31" height="31" fill="#f2f2f2"/>
<rect x="925" y="140" width="31" height="1" fill="#ffffff"/>
<rect x="925" y="140" width="1" height="31" fill="#ffffff"/>
<rect x="925" y="170" width="31" height="1" fill="#6e6e6e"/>
<rect x="955" y="140" width="1" height="31" fill="#6e6e6e"/>
<rect x="931.5" y="143.5" width="17" height="23" fill="#dfdfec" stroke="#6a688a" stroke-width="1"/>
<circle cx="934.5" cy="147" r="1.8" fill="#2a2640" />
<line x1="934.5" y1="147" x2="937.0" y2="149.5" stroke="#2a2640" stroke-width="1" />
<circle cx="936.8" cy="149.8" r="1.6" fill="#1a78ff" />
<circle cx="945.5" cy="147" r="1.8" fill="#2a2640" />
<line x1="945.5" y1="147" x2="943.0" y2="149.5" stroke="#2a2640" stroke-width="1" />
<circle cx="943.2" cy="149.8" r="1.6" fill="#1a78ff" />
<circle cx="934.5" cy="163" r="1.8" fill="#2a2640" />
<line x1="934.5" y1="163" x2="937.0" y2="160.5" stroke="#2a2640" stroke-width="1" />
<circle cx="936.8" cy="160.2" r="1.6" fill="#1a78ff" />
<circle cx="945.5" cy="163" r="1.8" fill="#2a2640" />
<line x1="945.5" y1="163" x2="943.0" y2="160.5" stroke="#2a2640" stroke-width="1" />
<circle cx="943.2" cy="160.2" r="1.6" fill="#1a78ff" />
<rect x="981" y="140" width="30" height="31" fill="#f6f6f6"/>
<rect x="981" y="140" width="30" height="1" fill="#6e6e6e"/>
<rect x="981" y="140" width="1" height="31" fill="#6e6e6e"/>
<rect x="981" y="170" width="30" height="1" fill="#ffffff"/>
<rect x="1010" y="140" width="1" height="31" fill="#ffffff"/>
<g stroke="#555" fill="none" stroke-width="1">
<path d="M988.5 144 V166 M999.5 144 V166 M990 146.5 H998 M990 149.5 H998 M990 156.5 H998 M990 163.5 H998" fill="none" />
<path d="M1004.5 150 V163 M1002 152.5 L1004.5 149.5 L1007 152.5 M1002 160.5 L1004.5 163.5 L1007 160.5" fill="none" />
</g>
<rect x="993" y="155" width="3" height="3" fill="#555"/>
<rect x="5" y="1039" width="2" height="2" fill="#f4f6fa"/>
<rect x="6" y="1040" width="1" height="1" fill="#a8adb8"/>
<rect x="5" y="1043" width="2" height="2" fill="#f4f6fa"/>
<rect x="6" y="1044" width="1" height="1" fill="#a8adb8"/>
<rect x="5" y="1047" width="2" height="2" fill="#f4f6fa"/>
<rect x="6" y="1048" width="1" height="1" fill="#a8adb8"/>
<rect x="5" y="1051" width="2" height="2" fill="#f4f6fa"/>
<rect x="6" y="1052" width="1" height="1" fill="#a8adb8"/>
<rect x="10.5" y="1035.5" width="20" height="21" fill="#b4b8d0" stroke="#16246e" stroke-width="1"/>
<rect x="32.5" y="1035.5" width="20" height="21" fill="#b4b8d0" stroke="#16246e" stroke-width="1"/>
<rect x="54.5" y="1035.5" width="20" height="21" fill="#b4b8d0" stroke="#16246e" stroke-width="1"/>
<rect x="76.5" y="1035.5" width="20" height="21" fill="#b4b8d0" stroke="#16246e" stroke-width="1"/>
<rect x="98.5" y="1035.5" width="20" height="21" fill="#b4b8d0" stroke="#16246e" stroke-width="1"/>
<g stroke="#a4a8c2" fill="none" stroke-width="1">
<path d="M12 1048.5 H30 M23.5 1037 V1055 M17.5 1049 V1055 M12 1042.5 H23.5" fill="none" opacity="0.7"/>
</g>
<path d="M18.5 1040.0 L19.508 1042.5919999999999 L22.1 1043.6 L19.508 1044.608 L18.5 1047.1999999999998 L17.492 1044.608 L14.9 1043.6 L17.492 1042.5919999999999 Z" fill="#fff" stroke="#1a78ff" stroke-width="1.1" />
<line x1="35.3" y1="1052.6" x2="50" y2="1043.3" stroke="#2a2640" stroke-width="1.1" stroke-dasharray="2.5 1.2"/>
<path d="M39.4 1039.0 L40.408 1041.5919999999999 L43.0 1042.6 L40.408 1043.608 L39.4 1046.1999999999998 L38.391999999999996 1043.608 L35.8 1042.6 L38.391999999999996 1041.5919999999999 Z" fill="#fff" stroke="#1a78ff" stroke-width="1.1" />
<g stroke="#2a2640" fill="none" stroke-width="1.1">
<path d="M57.4 1039.5 V1053.3 H73" fill="none" stroke-dasharray="2 1.3"/>
<path d="M58.8 1052 L71.3 1040" fill="none" />
</g>
<path d="M62.5 1038.4 L63.508 1040.992 L66.1 1042 L63.508 1043.008 L62.5 1045.6 L61.492 1043.008 L58.9 1042 L61.492 1040.992 Z" fill="#fff" stroke="#1a78ff" stroke-width="1.1" />
<path d="M83.5 1038.8000000000002 L84.508 1041.392 L87.1 1042.4 L84.508 1043.4080000000001 L83.5 1046.0 L82.492 1043.4080000000001 L79.9 1042.4 L82.492 1041.392 Z" fill="#fff" stroke="#1a78ff" stroke-width="1.1" />
<circle cx="85.4" cy="1050.8" r="2.1" fill="#fff" stroke="#1a78ff" stroke-width="1.3" />
<rect x="90.8" y="1043.7" width="2" height="2" fill="#fff" stroke="#2a2640" stroke-width="0.9" style="shape-rendering:geometricPrecision"/>
<line x1="101.3" y1="1052.6" x2="116.9" y2="1040.8" stroke="#2a2640" stroke-width="1.1" stroke-dasharray="2.5 1.2"/>
<circle cx="104.4" cy="1050.8" r="1.4" fill="#fff" stroke="#1a78ff" stroke-width="1" />
<circle cx="108.7" cy="1047" r="1.4" fill="#fff" stroke="#1a78ff" stroke-width="1" />
<circle cx="113.5" cy="1042.9" r="1.4" fill="#fff" stroke="#1a78ff" stroke-width="1" />
<rect x="124" y="1039" width="1" height="17" fill="#f4f6fa"/>
<rect x="128.5" y="1035.5" width="21" height="21" fill="#b4b8d0" stroke="#16246e" stroke-width="1"/>
<rect x="131.5" y="1044.5" width="11.5" height="6.5" fill="#ececf8" stroke="#2a2640" stroke-width="1.1" style="shape-rendering:geometricPrecision"/>
<rect x="136.8" y="1051" width="1.2" height="2.3" fill="#2a2640" style="shape-rendering:geometricPrecision"/>
<rect x="134.2" y="1053" width="6.4" height="1" fill="#2a2640" style="shape-rendering:geometricPrecision"/>
<path d="M138.9 1046.5 V1042.6 Q138.9 1039.6 141.9 1039.6 Q144.9 1039.6 144.9 1042.6 V1046.5" fill="none" stroke="#3a3060" stroke-width="2.8" />
<rect x="137.5" y="1045.6" width="2.8" height="1.8" fill="#d8d8ea"/>
<rect x="143.5" y="1045.6" width="2.8" height="1.8" fill="#d8d8ea"/>
<path d="M153.8 1046.8 L156.3 1045 H166.9 V1051 L164.4 1053.4 H153.8 Z M153.8 1046.8 H164.4 V1053.4 M164.4 1046.8 L166.9 1045" fill="none" stroke="#2a2640" stroke-width="1" />
<path d="M154.3 1050.6 H164 V1053 H154.3 Z" fill="#8ab8ff" stroke="#1a78ff" stroke-width="0.8" />
<path d="M162.7 1044.6 V1041.8 Q162.7 1038.6 165.6 1038.6 Q168.5 1038.6 168.5 1041.8 V1044.6" fill="none" stroke="#3a3060" stroke-width="1.6" />
<path d="M161.5 1043.3 H164 M167.3 1043.3 H169.8" fill="none" stroke="#3a3060" stroke-width="1" />
<rect x="176" y="1039" width="1" height="17" fill="#f4f6fa"/>
<rect x="180.5" y="1035.5" width="21" height="21" fill="#b4b8d0" stroke="#16246e" stroke-width="1"/>
<path d="M183.8 1050 H194.4 L198.8 1053.4 H187.5 Z" fill="#fff" stroke="#15151f" stroke-width="1.1" />
<line x1="188.5" y1="1045" x2="188.5" y2="1050" stroke="#1a78ff" stroke-width="1" stroke-dasharray="1 1"/>
<path d="M188.5 1038.1000000000001 L189.424 1040.476 L191.8 1041.4 L189.424 1042.324 L188.5 1044.7 L187.576 1042.324 L185.2 1041.4 L187.576 1040.476 Z" fill="#fff" stroke="#1a78ff" stroke-width="1.1" />
<rect x="205" y="1038" width="74" height="16" fill="#fff"/>
<text x="208" y="1050" font-size="12" fill="#111" >0</text>
<rect x="286" y="1037" width="2" height="21" fill="#e4e7ee"/>
<path d="M294 1054 L306 1040" fill="none" stroke="#2a2640" stroke-width="1.2" />
<path d="M298 1046 L302 1048 M299 1049 L301 1045" fill="none" stroke="#1a78ff" stroke-width="1.2" />
<circle cx="323.5" cy="1046.5" r="6" fill="none" stroke="#2a2640" stroke-width="1" />
<path d="M320.5 1046.5 H326.5 M323.5 1043.5 V1049.5" fill="none" stroke="#1a78ff" stroke-width="1" />
<rect x="338" y="1037" width="2" height="21" fill="#e4e7ee"/>
<path d="M346.5 1040 V1052.5 H359 M346.5 1046.5 H352.5 V1052.5" fill="none" stroke="#2a2640" stroke-width="1.2" />
<rect x="368" y="1037" width="2" height="21" fill="#e4e7ee"/>
<path d="M377.5 1042 V1052.5 H386 M375.5 1044 L377.5 1041 L379.5 1044 M384 1050.5 L387 1052.5 L384 1054.5" fill="none" stroke="#2a2640" stroke-width="1" />
<path d="M380 1040 A5 5 0 1 1 386 1046" fill="none" stroke="#2a2640" stroke-width="1" />
<text x="384.5" y="1052" font-size="9" fill="#1a78ff" font-weight="bold" >X</text>
<path d="M399.5 1042 V1052.5 H408 M397.5 1044 L399.5 1041 L401.5 1044 M406 1050.5 L409 1052.5 L406 1054.5" fill="none" stroke="#2a2640" stroke-width="1" />
<path d="M402 1040 A5 5 0 1 1 408 1046" fill="none" stroke="#2a2640" stroke-width="1" />
<text x="406.5" y="1052" font-size="9" fill="#1a78ff" font-weight="bold" >Y</text>
<path d="M420 1050 h6 l-3 3 z" fill="#888" />
<rect x="420" y="1049" width="7" height="1" fill="#888"/>
<rect x="433" y="1038" width="2" height="2" fill="#aab0bc"/>
<rect x="433" y="1041" width="2" height="2" fill="#aab0bc"/>
<rect x="433" y="1044" width="2" height="2" fill="#aab0bc"/>
<rect x="433" y="1047" width="2" height="2" fill="#aab0bc"/>
<rect x="433" y="1050" width="2" height="2" fill="#aab0bc"/>
<rect x="433" y="1053" width="2" height="2" fill="#aab0bc"/>
<rect x="433" y="1056" width="2" height="2" fill="#aab0bc"/>
<path d="M442.5 1042.8 L446.0 1039.3 H456.5 L453.0 1042.8 Z" fill="#dcdce8" stroke="#2a2640" stroke-width="1.1" stroke-linejoin="round"/>
<path d="M453.0 1042.8 L456.5 1039.3 V1049.8 L453.0 1053.3 Z" fill="#dcdce8" stroke="#2a2640" stroke-width="1.1" stroke-linejoin="round"/>
<path d="M442.5 1042.8 H453.0 V1053.3 H442.5 Z" fill="#dcdce8" stroke="#2a2640" stroke-width="1.1" stroke-linejoin="round"/>
<path d="M446 1039.3 V1049.8 H456.5 M446 1049.8 L442.5 1053.3" fill="none" stroke="#8a88a6" stroke-width="0.9" />
<path d="M464.5 1042.8 L468.0 1039.3 H478.5 L475.0 1042.8 Z" fill="#fff" stroke="#2a2640" stroke-width="1.1" stroke-linejoin="round"/>
<path d="M475.0 1042.8 L478.5 1039.3 V1049.8 L475.0 1053.3 Z" fill="#fff" stroke="#2a2640" stroke-width="1.1" stroke-linejoin="round"/>
<path d="M464.5 1042.8 H475.0 V1053.3 H464.5 Z" fill="#fff" stroke="#2a2640" stroke-width="1.1" stroke-linejoin="round"/>
<path d="M486.5 1042.8 L490.0 1039.3 H500.5 L497.0 1042.8 Z" fill="#f4f4fa" stroke="#2a2640" stroke-width="1.1" stroke-linejoin="round"/>
<path d="M497.0 1042.8 L500.5 1039.3 V1049.8 L497.0 1053.3 Z" fill="#b4b4cc" stroke="#2a2640" stroke-width="1.1" stroke-linejoin="round"/>
<path d="M486.5 1042.8 H497.0 V1053.3 H486.5 Z" fill="#d4d4e2" stroke="#2a2640" stroke-width="1.1" stroke-linejoin="round"/>
<rect x="486" y="1043" width="2" height="10" fill="#2a2640"/>
<path d="M508.5 1042.8 L512.0 1039.3 H522.5 L519.0 1042.8 Z" fill="#fff" stroke="#2a2640" stroke-width="1.1" stroke-linejoin="round"/>
<path d="M519.0 1042.8 L522.5 1039.3 V1049.8 L519.0 1053.3 Z" fill="#fff" stroke="#2a2640" stroke-width="1.1" stroke-linejoin="round"/>
<path d="M508.5 1042.8 H519.0 V1053.3 H508.5 Z" fill="#fff" stroke="#2a2640" stroke-width="1.1" stroke-linejoin="round"/>
<rect x="510" y="1044.3" width="4" height="4" fill="#b8c8ec" style="shape-rendering:geometricPrecision"/>
<rect x="514" y="1048.3" width="4" height="4" fill="#8aa8e8" style="shape-rendering:geometricPrecision"/>
<rect x="510" y="1048.3" width="4" height="4.5" fill="#e4e4f0" style="shape-rendering:geometricPrecision"/>
<path d="M530.5 1042.8 L534.0 1039.3 H543.5 L540.0 1042.8 Z" fill="#fff" stroke="#2a2640" stroke-width="1.1" stroke-linejoin="round"/>
<path d="M540.0 1042.8 L543.5 1039.3 V1048.8 L540.0 1052.3 Z" fill="#fff" stroke="#2a2640" stroke-width="1.1" stroke-linejoin="round"/>
<path d="M530.5 1042.8 H540.0 V1052.3 H530.5 Z" fill="#fff" stroke="#2a2640" stroke-width="1.1" stroke-linejoin="round"/>
<circle cx="542.5" cy="1052" r="4.2" fill="#cbcfd4" />
<circle cx="542.5" cy="1052" r="2.3" fill="none" stroke="#2a2640" stroke-width="2" />
<rect x="541.5" y="1047.6" width="2" height="2.2" fill="#2a2640" transform="rotate(0 542.5 1052)" style="shape-rendering:geometricPrecision"/>
<rect x="541.5" y="1047.6" width="2" height="2.2" fill="#2a2640" transform="rotate(45 542.5 1052)" style="shape-rendering:geometricPrecision"/>
<rect x="541.5" y="1047.6" width="2" height="2.2" fill="#2a2640" transform="rotate(90 542.5 1052)" style="shape-rendering:geometricPrecision"/>
<rect x="541.5" y="1047.6" width="2" height="2.2" fill="#2a2640" transform="rotate(135 542.5 1052)" style="shape-rendering:geometricPrecision"/>
<rect x="541.5" y="1047.6" width="2" height="2.2" fill="#2a2640" transform="rotate(180 542.5 1052)" style="shape-rendering:geometricPrecision"/>
<rect x="541.5" y="1047.6" width="2" height="2.2" fill="#2a2640" transform="rotate(225 542.5 1052)" style="shape-rendering:geometricPrecision"/>
<rect x="541.5" y="1047.6" width="2" height="2.2" fill="#2a2640" transform="rotate(270 542.5 1052)" style="shape-rendering:geometricPrecision"/>
<rect x="541.5" y="1047.6" width="2" height="2.2" fill="#2a2640" transform="rotate(315 542.5 1052)" style="shape-rendering:geometricPrecision"/>
<path d="M555.5 1044.5 L558.0 1042 H565.5 L563.0 1044.5 Z" fill="#fff" stroke="#2a2640" stroke-width="1" stroke-linejoin="round"/>
<path d="M563.0 1044.5 L565.5 1042 V1049.5 L563.0 1052.0 Z" fill="#b4b4cc" stroke="#2a2640" stroke-width="1" stroke-linejoin="round"/>
<path d="M555.5 1044.5 H563.0 V1052.0 H555.5 Z" fill="#e0e0ea" stroke="#2a2640" stroke-width="1" stroke-linejoin="round"/>
<path d="M556.5 1051 L562 1045.5 M559.5 1051.5 L562.5 1048.5" fill="none" stroke="#2a2640" stroke-width="0.8" />
<g stroke="#1a78ff" fill="none" stroke-width="1.3">
<path d="M552.6 1043 V1039.6 H556 M565 1039.6 H568.4 V1043 M552.6 1051 V1054.4 H556 M565 1054.4 H568.4 V1051" fill="none" />
</g>
<rect x="575" y="1037" width="2" height="21" fill="#e4e7ee"/>
<rect x="582.5" y="1041.5" width="6" height="12" fill="#dfe2ea" stroke="#a8adbc" stroke-width="1"/>
<rect x="589.5" y="1041.5" width="6" height="12" fill="#dfe2ea" stroke="#a8adbc" stroke-width="1"/>
<path d="M585 1040 h8 v13 h-8 z" fill="#d5dcec" stroke="#a8adbc" stroke-width="0.8" />
<rect x="604.5" y="1041.5" width="6" height="12" fill="#dfe2ea" stroke="#a8adbc" stroke-width="1"/>
<rect x="611.5" y="1041.5" width="6" height="12" fill="#dfe2ea" stroke="#a8adbc" stroke-width="1"/>
<path d="M607 1040 h8 v13 h-8 z" fill="#d0dcd0" stroke="#a8adbc" stroke-width="0.8" />
<rect x="623.5" y="1035.5" width="21" height="22" fill="#b8bfd8" stroke="#1c2c78" stroke-width="1"/>
<rect x="627.5" y="1041.5" width="13" height="13" fill="#d5d5e2" stroke="#2a2640" stroke-width="1.2" rx="2"/>
<rect x="629" y="1044" width="11" height="1" fill="#1a78ff"/>
<rect x="629" y="1047" width="11" height="1" fill="#1a78ff"/>
<rect x="629" y="1050" width="11" height="1" fill="#1a78ff"/>
<rect x="629" y="1053" width="11" height="1" fill="#1a78ff"/>
<path d="M630 1041 V1038 M634 1041 V1038 M638 1041 V1038" fill="none" stroke="#2a2640" stroke-width="1" />
<rect x="649" y="1037" width="2" height="21" fill="#e4e7ee"/>
<path d="M662.0 1051.0 Q662.0 1049.0 660.5 1047.5 A4.8 4.8 0 1 1 667.5 1047.5 Q666.0 1049.0 666.0 1051.0 Z" fill="#e8e8ee" stroke="#a8adbc" stroke-width="1" />
<rect x="662.0" y="1051.0" width="4.0" height="3.0" fill="#d8d8e0" stroke="#a8adbc" stroke-width="0.8" style="shape-rendering:geometricPrecision"/>
<rect x="675.5" y="1036.5" width="20" height="21" fill="#d8e6ff" stroke="#7aa8f0" stroke-width="1"/>
<path d="M684.0 1051.0 Q684.0 1049.0 682.5 1047.5 A4.8 4.8 0 1 1 689.5 1047.5 Q688.0 1049.0 688.0 1051.0 Z" fill="#fff7b0" stroke="#a8a080" stroke-width="1" />
<rect x="684.0" y="1051.0" width="4.0" height="3.0" fill="#d8d8e0" stroke="#a8a080" stroke-width="0.8" style="shape-rendering:geometricPrecision"/>
<path d="M706.0 1051.0 Q706.0 1049.0 704.5 1047.5 A4.8 4.8 0 1 1 711.5 1047.5 Q710.0 1049.0 710.0 1051.0 Z" fill="#ffee30" stroke="#2a2640" stroke-width="1" />
<rect x="706.0" y="1051.0" width="4.0" height="3.0" fill="#d8d8e0" stroke="#2a2640" stroke-width="0.8" style="shape-rendering:geometricPrecision"/>
<rect x="725.5" y="1043.5" width="6" height="11" fill="#fff" stroke="#2a2640" stroke-width="1"/>
<rect x="728.5" y="1041.5" width="6" height="11" fill="#fff" stroke="#2a2640" stroke-width="1"/>
<circle cx="736" cy="1041" r="2.5" fill="#fff" stroke="#2a2640" stroke-width="1" />
<rect x="741.5" y="1035.5" width="21" height="22" fill="#b8bfd8" stroke="#1c2c78" stroke-width="1"/>
<rect x="744.5" y="1041.5" width="11" height="5" fill="#9cc2ff" stroke="#2a2640" stroke-width="1"/>
<rect x="744.5" y="1047.5" width="11" height="5" fill="#9cc2ff" stroke="#2a2640" stroke-width="1"/>
<path d="M754.5 1045.75 Q754.5 1044.25 753.375 1043.125 A3.5999999999999996 3.5999999999999996 0 1 1 758.625 1043.125 Q757.5 1044.25 757.5 1045.75 Z" fill="#ffee30" stroke="#2a2640" stroke-width="1" />
<rect x="754.5" y="1045.75" width="3.0" height="2.25" fill="#d8d8e0" stroke="#2a2640" stroke-width="0.8" style="shape-rendering:geometricPrecision"/>
<rect x="765" y="1038" width="145" height="17" fill="#fff"/>
<text x="769" y="1051" font-size="12" fill="#111" textLength="52" lengthAdjust="spacingAndGlyphs" >1-st storey</text>
<rect x="896" y="1038" width="14" height="17" fill="#e4e6ec" stroke="#c0c4cc" stroke-width="1"/>
<path d="M900 1045 h6 l-3 3.5 z" fill="#777" />
<path d="M918.5 1040.5 H929.5 L932.5 1042.7 H921.5 Z" fill="#fff" stroke="#15151f" stroke-width="1.1" stroke-linejoin="round"/>
<path d="M918.5 1043.9 H929.5 L932.5 1046.1000000000001 H921.5 Z" fill="#8ab8ff" stroke="#1a78ff" stroke-width="1.1" stroke-linejoin="round"/>
<path d="M918.5 1047.3 H929.5 L932.5 1049.5 H921.5 Z" fill="#8ab8ff" stroke="#1a78ff" stroke-width="1.1" stroke-linejoin="round"/>
<path d="M918.5 1050.7 H929.5 L932.5 1052.9 H921.5 Z" fill="#fff" stroke="#15151f" stroke-width="1.1" stroke-linejoin="round"/>
<path d="M918.5 1052.5 L921.5 1055 H932.5" fill="none" stroke="#15151f" stroke-width="1.1" />
<rect x="939" y="1037" width="2" height="21" fill="#e4e7ee"/>
<text x="948" y="1054" font-size="12" fill="#2a2640" textLength="13" lengthAdjust="spacingAndGlyphs" font-weight="bold" >№</text>
<path d="M948 1044 L945 1041 L948 1038 M945 1041 H954 V1045" fill="none" stroke="#1a78ff" stroke-width="1.8" />
<rect x="966" y="1038" width="195" height="17" fill="#fff"/>
<rect x="1147" y="1038" width="14" height="17" fill="#e4e6ec" stroke="#c0c4cc" stroke-width="1"/>
<path d="M1151 1045 h6 l-3 3.5 z" fill="#777" />
<path d="M1177 1040 h12 l-4.5 5 v6 l-3 -2 v-4 z" fill="#8a88a0" stroke="#3a3658" stroke-width="0.8" />
<path d="M1170 1043 V1054 M1168 1052 L1170 1055 L1172 1052 M1175 1043 V1054 M1173 1045 L1175 1042 L1177 1045" fill="none" stroke="#1a78ff" stroke-width="1.2" />
<rect x="1190" y="1037" width="2" height="21" fill="#e4e7ee"/>
<path d="M1207 1039 h12 l-4.5 5 v6 l-3 -2 v-4 z" fill="#8a88a0" stroke="#3a3658" stroke-width="0.8" />
<path d="M1199 1040 V1054 L1203 1050 L1206 1056 L1208 1055 L1205 1049.5 H1210 Z" fill="#1a78ff" stroke="#1050c0" stroke-width="0.6" />
<path d="M1229 1039 h12 l-4.5 5 v6 l-3 -2 v-4 z" fill="#8a88a0" stroke="#3a3658" stroke-width="0.8" />
<rect x="1225.5" y="1045.5" width="10" height="9" fill="#fff" stroke="#1a78ff" stroke-width="1"/>
<rect x="1226" y="1048" width="9" height="1" fill="#1a78ff"/>
<rect x="1226" y="1051" width="9" height="1" fill="#1a78ff"/>
<rect x="1230" y="1046" width="1" height="8" fill="#1a78ff"/>
<rect x="1243" y="1037" width="2" height="21" fill="#e4e7ee"/>
<path d="M1251 1047 L1258.5 1039.5 L1266 1047 V1054 H1251 Z" fill="#fff" stroke="#2a2640" stroke-width="1.2" />
<path d="M1262 1043 v-3 h2 v5" fill="none" stroke="#2a2640" stroke-width="1" />
<path d="M1253 1050 L1256 1053.5 L1262 1046" fill="none" stroke="#2a9a2a" stroke-width="2" />
<path d="M1273 1050 h6 l-3 3 z" fill="#888" />
<rect x="1273" y="1049" width="7" height="1" fill="#888"/>
<rect x="1287" y="1038" width="2" height="2" fill="#aab0bc"/>
<rect x="1287" y="1041" width="2" height="2" fill="#aab0bc"/>
<rect x="1287" y="1044" width="2" height="2" fill="#aab0bc"/>
<rect x="1287" y="1047" width="2" height="2" fill="#aab0bc"/>
<rect x="1287" y="1050" width="2" height="2" fill="#aab0bc"/>
<rect x="1287" y="1053" width="2" height="2" fill="#aab0bc"/>
<rect x="1287" y="1056" width="2" height="2" fill="#aab0bc"/>
<g stroke="#9aa0b0" fill="#9aa0b0" stroke-width="1">
<path d="M1303 1043 V1039 M1303 1049 V1053 M1300 1046 H1296 M1306 1046 H1310" fill="none" />
<path d="M1301 1040 L1303 1037 L1305 1040 Z M1301 1052 L1303 1055 L1305 1052 Z M1297 1044 L1294 1046 L1297 1048 Z M1309 1044 L1312 1046 L1309 1048 Z" fill="none" />
</g>
<rect x="1301.5" y="1044.5" width="3" height="3" fill="#fff" stroke="#9aa0b0" stroke-width="1"/>
<path d="M1331 1044 A6.5 6.5 0 1 1 1326 1040.5" fill="none" stroke="#9aa0b0" stroke-width="1.6" />
<path d="M1324 1037.5 L1328.5 1040.5 L1324.5 1044 Z" fill="#9aa0b0" />
<rect x="1340" y="1037" width="2" height="21" fill="#e4e7ee"/>
<g stroke="#a8b4cc" fill="#a8b4cc" stroke-width="1">
<path d="M1354 1043 V1039 M1354 1047 V1051 M1352 1045 H1348 M1356 1045 H1360" fill="none" />
<path d="M1352.5 1040 L1354 1037 L1355.5 1040 Z M1352.5 1050 L1354 1053 L1355.5 1050 Z M1349 1043.5 L1346 1045 L1349 1046.5 Z M1359 1043.5 L1362 1045 L1359 1046.5 Z" fill="none" />
</g>
<path d="M1358 1049 L1362 1053" fill="none" stroke="#a8c8ff" stroke-width="1" stroke-dasharray="1 1"/>
<path d="M1371 1041 H1383 M1382 1041 L1371 1053" fill="none" stroke="#b0b8c8" stroke-width="1.2" stroke-dasharray="4 1.5"/>
<path d="M1393 1041 L1396 1044 M1396 1041 L1393 1044" fill="none" stroke="#8ec0ff" stroke-width="1" />
<path d="M1394 1052 L1399 1042 H1407 L1396 1054 Z" fill="none" stroke="#a8b4cc" stroke-width="1.2" />
<text x="4" y="187" font-size="12" fill="#4a4a58" textLength="52" lengthAdjust="spacingAndGlyphs" >Properties</text>
<g stroke="#555" fill="none" stroke-width="1.2">
<path d="M188.5 179 H192.5 M189.5 179 V184 M192 179 V184 M187 184.5 H194 M190.5 185 V188" fill="none" />
</g>
<path d="M203 179 L211 187 M211 179 L203 187" fill="none" stroke="#5e5e5e" stroke-width="1.1" />
<rect x="8.5" y="200.5" width="6" height="6" fill="#fff" stroke="#1a78ff" stroke-width="1.2" rx="1"/>
<path d="M10 203.5 H13 M11.5 202 V205" fill="none" stroke="#2a2640" stroke-width="1" />
<rect x="16" y="201" width="3" height="1" fill="#55527a"/>
<rect x="20" y="201" width="4" height="1" fill="#a8a6ba"/>
<rect x="16" y="204" width="3" height="1" fill="#55527a"/>
<rect x="20" y="204" width="4" height="1" fill="#a8a6ba"/>
<rect x="16" y="207" width="3" height="1" fill="#55527a"/>
<rect x="20" y="207" width="4" height="1" fill="#a8a6ba"/>
<rect x="8.5" y="209.5" width="6" height="6" fill="#fff" stroke="#1a78ff" stroke-width="1.2" rx="1"/>
<path d="M10 212.5 H13 M11.5 211 V214" fill="none" stroke="#2a2640" stroke-width="1" />
<rect x="16" y="210" width="3" height="1" fill="#55527a"/>
<rect x="20" y="210" width="4" height="1" fill="#a8a6ba"/>
<rect x="16" y="213" width="3" height="1" fill="#55527a"/>
<rect x="20" y="213" width="4" height="1" fill="#a8a6ba"/>
<rect x="16" y="216" width="3" height="1" fill="#55527a"/>
<rect x="20" y="216" width="4" height="1" fill="#a8a6ba"/>
<rect x="31" y="202" width="1" height="13" fill="#e8eaf0"/>
<rect x="42" y="202" width="4" height="1" fill="#3a3658"/>
<rect x="47" y="202" width="4" height="1" fill="#3a3658"/>
<rect x="42" y="205" width="4" height="1" fill="#3a3658"/>
<rect x="47" y="205" width="4" height="1" fill="#3a3658"/>
<rect x="42" y="208" width="4" height="1" fill="#3a3658"/>
<rect x="47" y="208" width="4" height="1" fill="#3a3658"/>
<rect x="42" y="211" width="4" height="1" fill="#3a3658"/>
<rect x="47" y="211" width="4" height="1" fill="#3a3658"/>
<rect x="42" y="214" width="4" height="1" fill="#3a3658"/>
<rect x="47" y="214" width="4" height="1" fill="#3a3658"/>
<rect x="68" y="202" width="3" height="1" fill="#55527a"/>
<rect x="72" y="203" width="3" height="1" fill="#a8a6ba"/>
<rect x="68" y="205" width="3" height="1" fill="#55527a"/>
<rect x="72" y="206" width="3" height="1" fill="#a8a6ba"/>
<rect x="68" y="208" width="3" height="1" fill="#55527a"/>
<rect x="72" y="209" width="3" height="1" fill="#a8a6ba"/>
<rect x="68" y="211" width="3" height="1" fill="#55527a"/>
<rect x="72" y="212" width="3" height="1" fill="#a8a6ba"/>
<rect x="68" y="214" width="3" height="1" fill="#55527a"/>
<rect x="72" y="215" width="3" height="1" fill="#a8a6ba"/>
<rect x="60.5" y="208.5" width="6" height="6" fill="#fff" stroke="#1a78ff" stroke-width="1.2" rx="1"/>
<path d="M62 211.5 L63.5 213 L66 209.5" fill="none" stroke="#2a2640" stroke-width="1" />
<rect x="83" y="202" width="1" height="13" fill="#e8eaf0"/>
<path d="M92 208 L96 213 L105 203" fill="none" stroke="#a6a8b6" stroke-width="2" />
<circle cx="118.5" cy="206" r="4" fill="none" stroke="#2a2640" stroke-width="1.6" />
<path d="M121.5 209 L126 213.5" fill="none" stroke="#2a2640" stroke-width="2.2" />
<rect x="3" y="219" width="211" height="768" fill="#fff"/>
<rect x="3" y="236" width="211" height="1" fill="#d6d6da"/>
<text x="7" y="232" font-size="11" fill="#000" textLength="56" lengthAdjust="spacingAndGlyphs" >Face colour</text>
<rect x="111.5" y="221.5" width="13" height="13" fill="#ff5481" stroke="#000" stroke-width="1"/>
<text x="130" y="232" font-size="11" fill="#000" textLength="42" lengthAdjust="spacingAndGlyphs" >ff548100</text>
<rect x="3" y="253" width="211" height="1" fill="#d6d6da"/>
<text x="7" y="249" font-size="11" fill="#000" textLength="52" lengthAdjust="spacingAndGlyphs" >Line colour</text>
<rect x="111.5" y="238.5" width="13" height="13" fill="#b53b5b" stroke="#000" stroke-width="1"/>
<text x="130" y="249" font-size="11" fill="#000" textLength="36" lengthAdjust="spacingAndGlyphs" >b53b5b</text>
<rect x="3" y="254" width="105" height="16" fill="#cbcfd4"/>
<rect x="3" y="270" width="211" height="1" fill="#d6d6da"/>
<text x="7" y="266" font-size="11" fill="#000" textLength="93" lengthAdjust="spacingAndGlyphs" >Number of elements</text>
<text x="113" y="266" font-size="11" fill="#8a8a94" textLength="6" lengthAdjust="spacingAndGlyphs" >6</text>
<rect x="3" y="287" width="211" height="1" fill="#d6d6da"/>
<text x="7" y="283" font-size="11" fill="#8a8a94" textLength="63" lengthAdjust="spacingAndGlyphs" >Building code</text>
<text x="113" y="283" font-size="11" fill="#8a8a94" textLength="92" lengthAdjust="spacingAndGlyphs" >DBN B.2.6-98:2009</text>
<rect x="3" y="304" width="211" height="1" fill="#d6d6da"/>
<text x="7" y="300" font-size="11" fill="#000" textLength="95" lengthAdjust="spacingAndGlyphs" >Reinforcement class</text>
<text x="113" y="300" font-size="11" fill="#000" textLength="32" lengthAdjust="spacingAndGlyphs" >A400C</text>
<rect x="3" y="321" width="211" height="1" fill="#d6d6da"/>
<text x="7" y="317" font-size="11" fill="#000" textLength="73" lengthAdjust="spacingAndGlyphs" >B.code for steel</text>
<text x="113" y="317" font-size="11" fill="#000" textLength="85" lengthAdjust="spacingAndGlyphs" >ДСТУ 3760:2019</text>
<rect x="3" y="338" width="211" height="1" fill="#d6d6da"/>
<text x="7" y="334" font-size="11" fill="#000" textLength="96" lengthAdjust="spacingAndGlyphs" >% of excess consu...</text>
<text x="113" y="334" font-size="11" fill="#000" textLength="21" lengthAdjust="spacingAndGlyphs" >Auto</text>
<rect x="3" y="355" width="211" height="1" fill="#d6d6da"/>
<text x="7" y="351" font-size="11" fill="#000" textLength="96" lengthAdjust="spacingAndGlyphs" >B.code for transve...</text>
<text x="113" y="351" font-size="11" fill="#000" textLength="85" lengthAdjust="spacingAndGlyphs" >ДСТУ 3760:2019</text>
<rect x="3" y="372" width="211" height="1" fill="#d6d6da"/>
<text x="7" y="368" font-size="11" fill="#000" textLength="90" lengthAdjust="spacingAndGlyphs" >Class of reinforce...</text>
<text x="113" y="368" font-size="11" fill="#000" textLength="32" lengthAdjust="spacingAndGlyphs" >A400C</text>
<rect x="3" y="389" width="211" height="1" fill="#d6d6da"/>
<text x="7" y="385" font-size="11" fill="#000" textLength="69" lengthAdjust="spacingAndGlyphs" >Concrete class</text>
<text x="113" y="385" font-size="11" fill="#000" textLength="19" lengthAdjust="spacingAndGlyphs" >C25</text>
<rect x="3" y="406" width="211" height="1" fill="#d6d6da"/>
<text x="7" y="402" font-size="11" fill="#000" textLength="96" lengthAdjust="spacingAndGlyphs" >Indent of stirrups, t...</text>
<text x="113" y="402" font-size="11" fill="#000" textLength="21" lengthAdjust="spacingAndGlyphs" >-150</text>
<rect x="3" y="423" width="211" height="1" fill="#d6d6da"/>
<text x="7" y="419" font-size="11" fill="#000" textLength="96" lengthAdjust="spacingAndGlyphs" >Spacing of stirrups...</text>
<text x="113" y="419" font-size="11" fill="#000" textLength="18" lengthAdjust="spacingAndGlyphs" >100</text>
<rect x="3" y="440" width="211" height="1" fill="#d6d6da"/>
<text x="7" y="436" font-size="11" fill="#000" textLength="96" lengthAdjust="spacingAndGlyphs" >Spacing of stirrups...</text>
<text x="113" y="436" font-size="11" fill="#000" textLength="18" lengthAdjust="spacingAndGlyphs" >200</text>
<rect x="3" y="457" width="211" height="1" fill="#d6d6da"/>
<text x="7" y="453" font-size="11" fill="#000" textLength="96" lengthAdjust="spacingAndGlyphs" >Spacing of stirrups...</text>
<text x="113" y="453" font-size="11" fill="#000" textLength="18" lengthAdjust="spacingAndGlyphs" >200</text>
<rect x="3" y="474" width="211" height="1" fill="#d6d6da"/>
<text x="7" y="470" font-size="11" fill="#000" textLength="94" lengthAdjust="spacingAndGlyphs" >Height of zone in j...</text>
<text x="113" y="470" font-size="11" fill="#000" textLength="18" lengthAdjust="spacingAndGlyphs" >900</text>
<rect x="3" y="491" width="211" height="1" fill="#d6d6da"/>
<text x="7" y="487" font-size="11" fill="#000" textLength="93" lengthAdjust="spacingAndGlyphs" >Indent of stirrups, ...</text>
<text x="113" y="487" font-size="11" fill="#000" textLength="12" lengthAdjust="spacingAndGlyphs" >50</text>
<rect x="3" y="508" width="211" height="1" fill="#d6d6da"/>
<text x="7" y="504" font-size="11" fill="#000" textLength="80" lengthAdjust="spacingAndGlyphs" >Arrange manually</text>
<text x="113" y="504" font-size="11" fill="#000" textLength="17" lengthAdjust="spacingAndGlyphs" >Yes</text>
<rect x="3" y="525" width="211" height="1" fill="#d6d6da"/>
<text x="7" y="521" font-size="11" fill="#000" textLength="95" lengthAdjust="spacingAndGlyphs" >Indent for chain of...</text>
<text x="113" y="521" font-size="11" fill="#000" textLength="18" lengthAdjust="spacingAndGlyphs" >900</text>
<rect x="3" y="542" width="211" height="1" fill="#d6d6da"/>
<text x="7" y="538" font-size="11" fill="#000" textLength="96" lengthAdjust="spacingAndGlyphs" >Dimension for long...</text>
<text x="113" y="538" font-size="11" fill="#000" textLength="13" lengthAdjust="spacingAndGlyphs" >No</text>
<rect x="3" y="559" width="211" height="1" fill="#d6d6da"/>
<text x="7" y="555" font-size="11" fill="#000" textLength="67" lengthAdjust="spacingAndGlyphs" >Tag for bars B</text>
<text x="113" y="555" font-size="11" fill="#000" textLength="17" lengthAdjust="spacingAndGlyphs" >Yes</text>
<rect x="3" y="576" width="211" height="1" fill="#d6d6da"/>
<text x="7" y="572" font-size="11" fill="#000" textLength="94" lengthAdjust="spacingAndGlyphs" >Indent for tag B, mm</text>
<text x="113" y="572" font-size="11" fill="#000" textLength="6" lengthAdjust="spacingAndGlyphs" >0</text>
<rect x="3" y="593" width="211" height="1" fill="#d6d6da"/>
<text x="7" y="589" font-size="11" fill="#000" textLength="74" lengthAdjust="spacingAndGlyphs" >Tags for stirrups</text>
<text x="113" y="589" font-size="11" fill="#000" textLength="13" lengthAdjust="spacingAndGlyphs" >No</text>
<rect x="3" y="219" width="211" height="1" fill="#d6d6da"/>
<rect x="108" y="219" width="1" height="708" fill="#d6d6da"/>
<rect x="4" y="928" width="209" height="57" fill="#cbcfd4"/>
<text x="8" y="946" font-size="11" fill="#000" textLength="112" lengthAdjust="spacingAndGlyphs" font-weight="bold" >Number of elements</text>
<text x="8" y="961.5" font-size="11" fill="#000" textLength="184.5" lengthAdjust="spacingAndGlyphs" >Number of elements reinforced with this</text>
<text x="8" y="975" font-size="11" fill="#000" textLength="17" lengthAdjust="spacingAndGlyphs" >tag.</text>
<rect x="0" y="987" width="216" height="1" fill="#111"/>
<rect x="4" y="989" width="77" height="19" fill="#f0f0f0"/>
<text x="24.5" y="1003" font-size="12" fill="#4a4a58" textLength="51" lengthAdjust="spacingAndGlyphs" >Properties</text>
<text x="106" y="1003" font-size="12" fill="#4a4a58" textLength="39" lengthAdjust="spacingAndGlyphs" >Preview</text>
<path d="M7 994 V1004 H20 Z" fill="#d8d8e6" stroke="#55527a" stroke-width="1" />
<path d="M11 1001 L18 993 L20.5 995.5 L13 1003 L10 1004 Z" fill="#3a3658" stroke="#2a2640" stroke-width="0.6" />
<circle cx="95" cy="996.5" r="4.2" fill="none" stroke="#2a2640" stroke-width="1.6" />
<path d="M98 1000 L102.5 1004.5" fill="none" stroke="#2a2640" stroke-width="2.2" />
<text x="0" y="0" font-size="16.5" fill="#0e0e86" font-style="italic" textLength="307.06" lengthAdjust="spacing"  transform="translate(357 229) scale(0.85 1)">Column reinforcement C-1-5-38</text>
<rect x="357" y="232" width="261" height="1" fill="#0e0e86"/>
<text x="0" y="0" font-size="10.5" fill="#3a3ac8" font-style="italic" textLength="34.30" lengthAdjust="spacing"  transform="translate(624 292.5) scale(0.86 1)">M 1:20</text>
<rect x="624" y="294" width="30" height="1" fill="#5a5ad0"/>
<rect x="299" y="350" width="2" height="531" fill="#b4b4e2"/>
<rect x="300" y="350" width="26" height="2" fill="#b4b4e2"/>
<rect x="300" y="357" width="26" height="1" fill="#1a1ac8"/>
<rect x="296" y="424" width="25" height="1" fill="#dadaea"/>
<rect x="298" y="873" width="23" height="1" fill="#1a1ac8"/>
<rect x="298" y="880" width="23" height="1" fill="#b4b4e2"/>
<path d="M298 349.5 L302 352.5" fill="none" stroke="#1a1ac8" stroke-width="1.6" />
<path d="M298 356.0 L302 359.0" fill="none" stroke="#1a1ac8" stroke-width="1.6" />
<path d="M298 422.8 L302 425.8" fill="none" stroke="#1a1ac8" stroke-width="1.6" />
<path d="M298 872.0 L302 875.0" fill="none" stroke="#1a1ac8" stroke-width="1.6" />
<path d="M298 879.0 L302 882.0" fill="none" stroke="#1a1ac8" stroke-width="1.6" />
<text x="0" y="0" font-size="8.5" fill="#6464d4" font-style="italic" textLength="12.79" lengthAdjust="spacing"  transform="translate(297 358) rotate(-90) scale(0.86 1)">50</text>
<text x="0" y="0" font-size="8.5" fill="#6464d4" font-style="italic" textLength="46.51" lengthAdjust="spacing"  transform="translate(297 409) rotate(-90) scale(0.86 1)">100x5=500</text>
<text x="0" y="0" font-size="8.5" fill="#6464d4" font-style="italic" textLength="60.47" lengthAdjust="spacing"  transform="translate(297 674) rotate(-90) scale(0.86 1)">200x17=3400</text>
<text x="0" y="0" font-size="8.5" fill="#6464d4" font-style="italic" textLength="12.79" lengthAdjust="spacing"  transform="translate(297 901) rotate(-90) scale(0.86 1)">50</text>
<rect x="334" y="350" width="305" height="2" fill="#0e0e86"/>
<rect x="334" y="429" width="106" height="2" fill="#0e0e86"/>
<rect x="532" y="429" width="107" height="2" fill="#0e0e86"/>
<rect x="334" y="348" width="1" height="85" fill="#4a4a8a"/>
<rect x="638" y="348" width="1" height="85" fill="#4a4a8a"/>
<path d="M334.5 361.5 L339.0 362.7 L330.0 366.0 L334.5 367.5" fill="none" stroke="#22226a" stroke-width="1" />
<path d="M638.5 361.0 L643.0 362.2 L634.0 365.5 L638.5 367.0" fill="none" stroke="#22226a" stroke-width="1" />
<path d="M334.5 388 L339.0 389.2 L330.0 392.5 L334.5 394" fill="none" stroke="#22226a" stroke-width="1" />
<path d="M638.5 387.5 L643.0 388.7 L634.0 392.0 L638.5 393.5" fill="none" stroke="#22226a" stroke-width="1" />
<path d="M334.5 414.5 L339.0 415.7 L330.0 419.0 L334.5 420.5" fill="none" stroke="#22226a" stroke-width="1" />
<path d="M638.5 414.0 L643.0 415.2 L634.0 418.5 L638.5 420.0" fill="none" stroke="#22226a" stroke-width="1" />
<line x1="334" y1="377.5" x2="441" y2="377.5" stroke="#0e0e86" stroke-width="1.2" stroke-dasharray="9 7" shape-rendering="crispEdges"/>
<line x1="534" y1="377.5" x2="639" y2="377.5" stroke="#0e0e86" stroke-width="1.2" stroke-dasharray="9 7" shape-rendering="crispEdges"/>
<rect x="645" y="350" width="13" height="1" fill="#1a78ff"/>
<path d="M651.5 341.0 V350.5 M646.5 345.0 L651.5 350.5 L656.5 345.0" fill="none" stroke="#1a78ff" stroke-width="1.1" />
<path d="M651.5 341.0 H671" fill="none" stroke="#7a9af0" stroke-width="1" />
<text x="0" y="0" font-size="9" fill="#4a4ad0" font-style="italic" textLength="25.00" lengthAdjust="spacing"  transform="translate(652.5 339.5) scale(0.86 1)">4.000</text>
<rect x="645" y="378" width="13" height="1" fill="#1a78ff"/>
<path d="M651.5 368.0 V377.5 M646.5 372.0 L651.5 377.5 L656.5 372.0" fill="none" stroke="#1a78ff" stroke-width="1.1" />
<path d="M651.5 368.0 H671" fill="none" stroke="#7a9af0" stroke-width="1" />
<text x="0" y="0" font-size="9" fill="#4a4ad0" font-style="italic" textLength="25.00" lengthAdjust="spacing"  transform="translate(652.5 366.5) scale(0.86 1)">3.800</text>
<rect x="645" y="430" width="13" height="1" fill="#1a78ff"/>
<path d="M651.5 421.0 V430.5 M646.5 425.0 L651.5 430.5 L656.5 425.0" fill="none" stroke="#1a78ff" stroke-width="1.1" />
<path d="M651.5 421.0 H671" fill="none" stroke="#7a9af0" stroke-width="1" />
<text x="0" y="0" font-size="9" fill="#4a4ad0" font-style="italic" textLength="25.00" lengthAdjust="spacing"  transform="translate(652.5 419.5) scale(0.86 1)">3.400</text>
<rect x="645" y="880" width="13" height="1" fill="#1a78ff"/>
<path d="M651.5 870.5 V880.5 M646.5 875.0 L651.5 880.5 L656.5 875.0" fill="none" stroke="#1a78ff" stroke-width="1.1" />
<path d="M651.5 870.5 H671" fill="none" stroke="#7a9af0" stroke-width="1" />
<text x="0" y="0" font-size="9" fill="#4a4ad0" font-style="italic" textLength="25.00" lengthAdjust="spacing"  transform="translate(652.5 869) scale(0.86 1)">0.000</text>
<rect x="387" y="880" width="199" height="1.5" fill="#111"/>
<rect x="387" y="985" width="199" height="2" fill="#111"/>
<rect x="387" y="880" width="1" height="107" fill="#555"/>
<rect x="585" y="880" width="1" height="107" fill="#555"/>
<rect x="386.0" y="901" width="3" height="14" fill="#fff"/>
<path d="M387.5 900.7 L397.5 903 L377.0 909 L387.5 915" fill="none" stroke="#222" stroke-width="1" />
<rect x="584.0" y="901" width="3" height="14" fill="#fff"/>
<path d="M585.5 900.7 L595.5 903 L575.0 909 L585.5 915" fill="none" stroke="#222" stroke-width="1" />
<rect x="386.0" y="954" width="3" height="14" fill="#fff"/>
<path d="M387.5 953.7 L397.5 956 L377.0 962 L387.5 968" fill="none" stroke="#222" stroke-width="1" />
<rect x="584.0" y="954" width="3" height="14" fill="#fff"/>
<path d="M585.5 953.7 L595.5 956 L575.0 962 L585.5 968" fill="none" stroke="#222" stroke-width="1" />
<rect x="439" y="430" width="2" height="451" fill="#0e0e86"/>
<rect x="532" y="430" width="2" height="451" fill="#0e0e86"/>
<line x1="447" y1="430.5" x2="527" y2="430.5" stroke="#9a9aa6" stroke-width="1.5" stroke-dasharray="1.5 1.5"/>
<path d="M530 431 L542.5 456.2 H620" fill="none" stroke="#2a6ae8" stroke-width="1" />
<text x="0" y="0" font-size="9" fill="#2a6ae8" font-style="italic" textLength="83.72" lengthAdjust="spacing"  transform="translate(543.5 454.5) scale(0.86 1)">Construction joint</text>
<line x1="443" y1="357.2" x2="529.5" y2="357.2" stroke="#0a0a0a" stroke-width="1.8" />
<line x1="443" y1="370.45" x2="529.5" y2="370.45" stroke="#0a0a0a" stroke-width="1.4" />
<line x1="443" y1="383.7" x2="529.5" y2="383.7" stroke="#0a0a0a" stroke-width="1.8" />
<line x1="443" y1="396.95" x2="529.5" y2="396.95" stroke="#0a0a0a" stroke-width="1.4" />
<line x1="443" y1="410.2" x2="529.5" y2="410.2" stroke="#0a0a0a" stroke-width="1.8" />
<line x1="443" y1="423.45" x2="529.5" y2="423.45" stroke="#0a0a0a" stroke-width="1.4" />
<line x1="443" y1="449.95" x2="529.5" y2="449.95" stroke="#0a0a0a" stroke-width="1.8" />
<line x1="443" y1="476.45" x2="529.5" y2="476.45" stroke="#0a0a0a" stroke-width="1.4" />
<line x1="443" y1="502.95" x2="529.5" y2="502.95" stroke="#0a0a0a" stroke-width="1.8" />
<line x1="443" y1="529.45" x2="529.5" y2="529.45" stroke="#0a0a0a" stroke-width="1.4" />
<line x1="443" y1="555.95" x2="529.5" y2="555.95" stroke="#0a0a0a" stroke-width="1.8" />
<line x1="443" y1="582.45" x2="529.5" y2="582.45" stroke="#0a0a0a" stroke-width="1.4" />
<line x1="443" y1="608.95" x2="529.5" y2="608.95" stroke="#0a0a0a" stroke-width="1.8" />
<line x1="443" y1="635.45" x2="529.5" y2="635.45" stroke="#0a0a0a" stroke-width="1.4" />
<line x1="443" y1="661.95" x2="529.5" y2="661.95" stroke="#0a0a0a" stroke-width="1.8" />
<line x1="443" y1="688.45" x2="529.5" y2="688.45" stroke="#0a0a0a" stroke-width="1.4" />
<line x1="443" y1="714.95" x2="529.5" y2="714.95" stroke="#0a0a0a" stroke-width="1.8" />
<line x1="443" y1="741.45" x2="529.5" y2="741.45" stroke="#0a0a0a" stroke-width="1.4" />
<line x1="443" y1="767.95" x2="529.5" y2="767.95" stroke="#0a0a0a" stroke-width="1.8" />
<line x1="443" y1="794.45" x2="529.5" y2="794.45" stroke="#0a0a0a" stroke-width="1.4" />
<line x1="443" y1="820.95" x2="529.5" y2="820.95" stroke="#0a0a0a" stroke-width="1.8" />
<line x1="443" y1="847.45" x2="529.5" y2="847.45" stroke="#0a0a0a" stroke-width="1.4" />
<line x1="443" y1="873.95" x2="529.5" y2="873.95" stroke="#0a0a0a" stroke-width="1.8" />
<path d="M449.2 240 L449.2 351" fill="none" stroke="#55553c" stroke-width="2.2" stroke-linejoin="round"/>
<path d="M449.2 240 L449.2 351" fill="none" stroke="#b4b49c" stroke-width="0.20000000000000018" stroke-linejoin="round"/>
<path d="M523.5 240 L523.5 351" fill="none" stroke="#55553c" stroke-width="2.2" stroke-linejoin="round"/>
<path d="M523.5 240 L523.5 351" fill="none" stroke="#b4b49c" stroke-width="0.20000000000000018" stroke-linejoin="round"/>
<path d="M446.8 297 L446.8 351 L444.8 375 L444.8 880" fill="none" stroke="#55553c" stroke-width="3.0" stroke-linejoin="round"/>
<path d="M446.8 297 L446.8 351 L444.8 375 L444.8 880" fill="none" stroke="#b4b49c" stroke-width="1.0" stroke-linejoin="round"/>
<path d="M525.9 297 L525.9 351 L527.9 375 L527.9 880" fill="none" stroke="#55553c" stroke-width="3.0" stroke-linejoin="round"/>
<path d="M525.9 297 L525.9 351 L527.9 375 L527.9 880" fill="none" stroke="#b4b49c" stroke-width="1.0" stroke-linejoin="round"/>
<path d="M488.2 297 L488.2 351 L486.6 372 L486.6 880" fill="none" stroke="#55553c" stroke-width="3.0" stroke-linejoin="round"/>
<path d="M488.2 297 L488.2 351 L486.6 372 L486.6 880" fill="none" stroke="#b4b49c" stroke-width="1.0" stroke-linejoin="round"/>
<path d="M488.2 297 L492.3 304.5" fill="none" stroke="#55553c" stroke-width="1.4" />
<path d="M446.8 297 L449.5 304 M525.9 297 L523.5 304" fill="none" stroke="#55553c" stroke-width="1.2" />
<line x1="449.5" y1="761" x2="449.5" y2="880" stroke="#111" stroke-width="1.3" stroke-dasharray="9 4.3"/>
<line x1="482" y1="761" x2="482" y2="880" stroke="#bdbdbd" stroke-width="1.3" stroke-dasharray="9 4.3"/>
<line x1="523" y1="761" x2="523" y2="880" stroke="#111" stroke-width="1.3" stroke-dasharray="9 4.3"/>
<rect x="447" y="271" width="106" height="1" fill="#5a5ae8"/>
<rect x="445" y="288" width="108" height="1" fill="#5a5ae8"/>
<path d="M444.0 288.5 L446.5 286 L449.0 288.5 L446.5 291 Z" fill="#5a5ae8" />
<path d="M485.5 288.5 L488 286 L490.5 288.5 L488 291 Z" fill="#5a5ae8" />
<path d="M523.5 288.5 L526 286 L528.5 288.5 L526 291 Z" fill="#5a5ae8" />
<path d="M447.5 271.5 L449 270 L450.5 271.5 L449 273 Z" fill="#5a5ae8" />
<path d="M522.0 271.5 L523.5 270 L525.0 271.5 L523.5 273 Z" fill="#5a5ae8" />
<text x="0" y="0" font-size="8" fill="#7070e0" font-style="italic" textLength="20.93" lengthAdjust="spacing"  transform="translate(538.5 270.5) scale(0.86 1)">OCп1</text>
<text x="0" y="0" font-size="8" fill="#7070e0" font-style="italic" textLength="52.91" lengthAdjust="spacing"  transform="translate(541.5 279.5) scale(0.86 1)">4ø25A400C</text>
<text x="0" y="0" font-size="8" fill="#7070e0" font-style="italic" textLength="20.93" lengthAdjust="spacing"  transform="translate(538 287) scale(0.86 1)">OCп2</text>
<text x="0" y="0" font-size="8" fill="#7070e0" font-style="italic" textLength="52.33" lengthAdjust="spacing"  transform="translate(541.5 295.5) scale(0.86 1)">4ø12A400C</text>
<circle cx="540" cy="270.5" r="1.7" fill="#8a107a" />
<rect x="369" y="654" width="29" height="2" fill="#5a524a"/>
<rect x="596" y="654" width="29" height="2" fill="#5a524a"/>
<path d="M377.5 626 V653" fill="none" stroke="#5a524a" stroke-width="1" />
<path d="M375.8 644 L377.5 653 L379.2 644 Z" fill="#5a524a" />
<path d="M615.5 626 V653" fill="none" stroke="#5a524a" stroke-width="1" />
<path d="M613.8 644 L615.5 653 L617.2 644 Z" fill="#5a524a" />
<text x="0" y="0" font-size="15" fill="#5a524a" font-style="italic" textLength="7.56" lengthAdjust="spacing"  transform="translate(366.5 639.5) scale(0.86 1)">1</text>
<text x="0" y="0" font-size="15" fill="#5a524a" font-style="italic" textLength="7.56" lengthAdjust="spacing"  transform="translate(622 639.5) scale(0.86 1)">1</text>
<rect x="369" y="786" width="29" height="2" fill="#5a524a"/>
<rect x="596" y="786" width="29" height="2" fill="#5a524a"/>
<path d="M377.5 758.5 V785.5" fill="none" stroke="#5a524a" stroke-width="1" />
<path d="M375.8 776.5 L377.5 785.5 L379.2 776.5 Z" fill="#5a524a" />
<path d="M615.5 758.5 V785.5" fill="none" stroke="#5a524a" stroke-width="1" />
<path d="M613.8 776.5 L615.5 785.5 L617.2 776.5 Z" fill="#5a524a" />
<text x="0" y="0" font-size="15" fill="#5a524a" font-style="italic" textLength="9.30" lengthAdjust="spacing"  transform="translate(366.5 772.0) scale(0.86 1)">2</text>
<text x="0" y="0" font-size="15" fill="#5a524a" font-style="italic" textLength="9.30" lengthAdjust="spacing"  transform="translate(619.5 772.0) scale(0.86 1)">2</text>
<text x="0" y="0" font-size="19" fill="#0e0e86" font-style="italic" textLength="24.71" lengthAdjust="spacing"  transform="translate(809.5 419) scale(0.85 1)">1-1</text>
<rect x="806" y="420" width="25" height="1" fill="#5a5ab0"/>
<text x="0" y="0" font-size="19" fill="#0e0e86" font-style="italic" textLength="30.59" lengthAdjust="spacing"  transform="translate(807 684) scale(0.85 1)">2-2</text>
<rect x="804" y="686" width="29" height="1" fill="#5a5ab0"/>
<rect x="725.5" y="472.5" width="185.0" height="105.0" fill="#fff" stroke="#222" stroke-width="1" style="shape-rendering:geometricPrecision"/>
<rect x="725" y="578" width="186" height="1" fill="#8a8a8a"/>
<rect x="731.5" y="477.8" width="173.5" height="94.2" fill="none" stroke="#465656" stroke-width="4" rx="5.5" style="shape-rendering:geometricPrecision"/>
<rect x="731.5" y="477.8" width="173.5" height="94.2" fill="none" stroke="#6a7a78" stroke-width="1.2" rx="5.5" style="shape-rendering:geometricPrecision"/>
<path d="M738 563.5 L747.5 550 M742.5 568 L753.5 556.5" fill="none" stroke="#566664" stroke-width="3" stroke-linecap="round"/>
<g stroke="#1a78ff" fill="none" stroke-width="1">
<path d="M737 483.3 L781.5 524.4 L737 566.4 M899 483.3 L857 524.4 L899 566.4" fill="none" />
</g>
<rect x="781.5" y="523" width="75.5" height="2" fill="#1a78ff"/>
<circle cx="737" cy="483.3" r="2.7" fill="#0a0a14" />
<circle cx="898.8" cy="483.3" r="2.7" fill="#0a0a14" />
<circle cx="737" cy="566.4" r="2.7" fill="#0a0a14" />
<circle cx="898.8" cy="566.4" r="2.7" fill="#0a0a14" />
<circle cx="818" cy="481.3" r="1.1" fill="#1a1a3a" />
<circle cx="818" cy="568.3" r="1.1" fill="#1a1a3a" />
<circle cx="735" cy="524.3" r="1.1" fill="#1a1a3a" />
<circle cx="900.6" cy="524.3" r="1.1" fill="#1a1a3a" />
<text x="0" y="0" font-size="11" fill="#3a4ad8" font-style="italic" textLength="26.74" lengthAdjust="spacing"  transform="translate(809.7 523.5) scale(0.86 1)">SPp1</text>
<text x="0" y="0" font-size="5.5" fill="#7a8ad8" font-style="italic" textLength="22.09" lengthAdjust="spacing"  transform="translate(810 530.8) scale(0.86 1)">(шт.4)</text>
<text x="0" y="0" font-size="11" fill="#3a4ad8" font-style="italic" textLength="27.91" lengthAdjust="spacing"  transform="translate(828 493.7) scale(0.86 1)">SPp2</text>
<rect x="823.5" y="495" width="31.5" height="1.6" fill="#1a78ff"/>
<path d="M818 481.5 L823.5 495.2" fill="none" stroke="#1a78ff" stroke-width="1" />
<text x="0" y="0" font-size="11" fill="#3a4ad8" font-style="italic" textLength="27.91" lengthAdjust="spacing"  transform="translate(738.5 515) scale(0.86 1)">SPp2</text>
<rect x="738" y="516" width="22" height="1.6" fill="#1a78ff"/>
<path d="M735 524 L738 516.8" fill="none" stroke="#1a78ff" stroke-width="1" />
<text x="0" y="0" font-size="11" fill="#3a4ad8" font-style="italic" textLength="27.91" lengthAdjust="spacing"  transform="translate(742.8 538) scale(0.86 1)">SPp3</text>
<rect x="741" y="540" width="24" height="1.6" fill="#1a78ff"/>
<path d="M741 539.5 L739 563" fill="none" stroke="#1a78ff" stroke-width="1" />
<text x="0" y="0" font-size="11" fill="#3a4ad8" font-style="italic" textLength="27.91" lengthAdjust="spacing"  transform="translate(875 536.3) scale(0.86 1)">SPp2</text>
<rect x="873" y="538" width="26" height="1.6" fill="#1a78ff"/>
<path d="M899 537.8 L900.6 524" fill="none" stroke="#1a78ff" stroke-width="1" />
<text x="0" y="0" font-size="11" fill="#3a4ad8" font-style="italic" textLength="27.91" lengthAdjust="spacing"  transform="translate(826.6 553) scale(0.86 1)">SPp2</text>
<rect x="822" y="554" width="30" height="1.6" fill="#1a78ff"/>
<path d="M818 568 L822 554.8" fill="none" stroke="#1a78ff" stroke-width="1" />
<rect x="705" y="599" width="216" height="1" fill="#1a78ff"/>
<rect x="725" y="620" width="186" height="1" fill="#1a78ff"/>
<rect x="725" y="578" width="1" height="46" fill="#1a78ff"/>
<rect x="910" y="578" width="1" height="46" fill="#1a78ff"/>
<rect x="736" y="578" width="1" height="24" fill="#5a98ff"/>
<rect x="818" y="578" width="1" height="24" fill="#1a78ff"/>
<rect x="900" y="578" width="1" height="24" fill="#5a98ff"/>
<path d="M723.5 601.5 L727.5 597.5" fill="none" stroke="#1a50d0" stroke-width="1.6" />
<path d="M734.5 601.5 L738.5 597.5" fill="none" stroke="#1a50d0" stroke-width="1.6" />
<path d="M816.5 601.5 L820.5 597.5" fill="none" stroke="#1a50d0" stroke-width="1.6" />
<path d="M898.5 601.5 L902.5 597.5" fill="none" stroke="#1a50d0" stroke-width="1.6" />
<path d="M908.5 601.5 L912.5 597.5" fill="none" stroke="#1a50d0" stroke-width="1.6" />
<path d="M723.5 622.5 L727.5 618.5" fill="none" stroke="#1a50d0" stroke-width="1.6" />
<path d="M908.5 622.5 L912.5 618.5" fill="none" stroke="#1a50d0" stroke-width="1.6" />
<text x="0" y="0" font-size="8" fill="#4a5ad8" font-style="italic" textLength="11.05" lengthAdjust="spacing"  transform="translate(705.5 596.5) scale(0.86 1)">40</text>
<text x="0" y="0" font-size="8" fill="#4a5ad8" font-style="italic" textLength="13.95" lengthAdjust="spacing"  transform="translate(772.5 596.5) scale(0.86 1)">310</text>
<text x="0" y="0" font-size="8" fill="#4a5ad8" font-style="italic" textLength="13.95" lengthAdjust="spacing"  transform="translate(854 596.5) scale(0.86 1)">310</text>
<text x="0" y="0" font-size="8" fill="#4a5ad8" font-style="italic" textLength="11.05" lengthAdjust="spacing"  transform="translate(911.5 596.5) scale(0.86 1)">40</text>
<text x="0" y="0" font-size="8" fill="#4a5ad8" font-style="italic" textLength="15.70" lengthAdjust="spacing"  transform="translate(812.5 617.5) scale(0.86 1)">700</text>
<rect x="931" y="462" width="1" height="136" fill="#5a98ff"/>
<rect x="953" y="472" width="1" height="107" fill="#5a98ff"/>
<rect x="911" y="472" width="46" height="1" fill="#1a78ff"/>
<rect x="911" y="577" width="46" height="1" fill="#1a78ff"/>
<rect x="911" y="482" width="24" height="1" fill="#5a98ff"/>
<rect x="911" y="524" width="24" height="1" fill="#5a98ff"/>
<rect x="911" y="567" width="24" height="1" fill="#1a78ff"/>
<path d="M929.5 470.7 L933.5 474.2" fill="none" stroke="#1a50d0" stroke-width="1.6" />
<path d="M929.5 481.1 L933.5 484.6" fill="none" stroke="#1a50d0" stroke-width="1.6" />
<path d="M929.5 523.2 L933.5 526.7" fill="none" stroke="#1a50d0" stroke-width="1.6" />
<path d="M929.5 566.0 L933.5 569.5" fill="none" stroke="#1a50d0" stroke-width="1.6" />
<path d="M929.5 576.0 L933.5 579.5" fill="none" stroke="#1a50d0" stroke-width="1.6" />
<path d="M951.5 470.7 L955.5 474.2" fill="none" stroke="#1a50d0" stroke-width="1.6" />
<path d="M951.5 576.0 L955.5 579.5" fill="none" stroke="#1a50d0" stroke-width="1.6" />
<text x="0" y="0" font-size="8" fill="#4a5ad8" font-style="italic" textLength="11.05" lengthAdjust="spacing"  transform="translate(929.5 471) rotate(-90) scale(0.86 1)">40</text>
<text x="0" y="0" font-size="8" fill="#4a5ad8" font-style="italic" textLength="14.53" lengthAdjust="spacing"  transform="translate(929.5 508.5) rotate(-90) scale(0.86 1)">160</text>
<text x="0" y="0" font-size="8" fill="#4a5ad8" font-style="italic" textLength="14.53" lengthAdjust="spacing"  transform="translate(929.5 551) rotate(-90) scale(0.86 1)">160</text>
<text x="0" y="0" font-size="8" fill="#4a5ad8" font-style="italic" textLength="11.05" lengthAdjust="spacing"  transform="translate(929.5 597.5) rotate(-90) scale(0.86 1)">40</text>
<text x="0" y="0" font-size="8" fill="#4a5ad8" font-style="italic" textLength="15.70" lengthAdjust="spacing"  transform="translate(951 531) rotate(-90) scale(0.86 1)">400</text>
<text x="0" y="0" font-size="10" fill="#ff5a86" font-style="italic" textLength="41.86" lengthAdjust="spacing"  transform="translate(965 524.7) scale(0.86 1)">AT-005</text>
<rect x="725.5" y="737.1" width="185.0" height="105.0" fill="#fff" stroke="#222" stroke-width="1" style="shape-rendering:geometricPrecision"/>
<rect x="725" y="842" width="186" height="1" fill="#222"/>
<rect x="731.5" y="742.4000000000001" width="173.5" height="94.2" fill="none" stroke="#465656" stroke-width="4" rx="5.5" style="shape-rendering:geometricPrecision"/>
<rect x="731.5" y="742.4000000000001" width="173.5" height="94.2" fill="none" stroke="#6a7a78" stroke-width="1.2" rx="5.5" style="shape-rendering:geometricPrecision"/>
<path d="M738 828.1 L747.5 814.6 M742.5 832.6 L753.5 821.1" fill="none" stroke="#566664" stroke-width="3" stroke-linecap="round"/>
<g stroke="#1a78ff" fill="none" stroke-width="1">
<path d="M737 747.9000000000001 L786 789.0 L737 831.0 M899 747.9000000000001 L865 789.0 L899 831.0" fill="none" />
</g>
<rect x="786" y="788" width="79" height="2" fill="#1a78ff"/>
<circle cx="737" cy="747.9000000000001" r="2.7" fill="#0a0a14" />
<circle cx="898.8" cy="747.9000000000001" r="2.7" fill="#0a0a14" />
<circle cx="737" cy="831.0" r="2.7" fill="#0a0a14" />
<circle cx="898.8" cy="831.0" r="2.7" fill="#0a0a14" />
<circle cx="743" cy="748.2" r="3" fill="#fff" stroke="#222" stroke-width="1" />
<circle cx="892.5" cy="748.2" r="3" fill="#fff" stroke="#222" stroke-width="1" />
<circle cx="892.5" cy="830.4" r="3" fill="#fff" stroke="#222" stroke-width="1" />
<circle cx="815" cy="745.6" r="1.7" fill="#fff" stroke="#222" stroke-width="0.9" />
<circle cx="815" cy="832.9" r="1.7" fill="#fff" stroke="#222" stroke-width="0.9" />
<circle cx="900.8" cy="789.9" r="1.7" fill="#fff" stroke="#222" stroke-width="0.9" />
<circle cx="818" cy="745.9000000000001" r="1.1" fill="#1a1a3a" />
<circle cx="818" cy="832.9" r="1.1" fill="#1a1a3a" />
<circle cx="735" cy="788.9" r="1.1" fill="#1a1a3a" />
<circle cx="900.6" cy="788.9" r="1.1" fill="#1a1a3a" />
<text x="0" y="0" font-size="11" fill="#3a4ad8" font-style="italic" textLength="26.74" lengthAdjust="spacing"  transform="translate(815.7 787.1) scale(0.86 1)">SPp1</text>
<text x="0" y="0" font-size="5.5" fill="#7a8ad8" font-style="italic" textLength="22.09" lengthAdjust="spacing"  transform="translate(816 794.4) scale(0.86 1)">(шт.4)</text>
<text x="0" y="0" font-size="11" fill="#3a4ad8" font-style="italic" textLength="27.91" lengthAdjust="spacing"  transform="translate(828 757.0) scale(0.86 1)">SPp2</text>
<rect x="823.5" y="758" width="31.5" height="1.6" fill="#1a78ff"/>
<path d="M818 746.1 L823.5 758.5" fill="none" stroke="#1a78ff" stroke-width="1" />
<text x="0" y="0" font-size="11" fill="#3a4ad8" font-style="italic" textLength="27.91" lengthAdjust="spacing"  transform="translate(736.5 775.0) scale(0.86 1)">SPp2</text>
<rect x="736" y="776" width="24" height="1.6" fill="#1a78ff"/>
<path d="M735 788.6 L736 776.8" fill="none" stroke="#1a78ff" stroke-width="1" />
<text x="0" y="0" font-size="11" fill="#3a4ad8" font-style="italic" textLength="27.91" lengthAdjust="spacing"  transform="translate(742.8 800.0) scale(0.86 1)">SPp3</text>
<rect x="741" y="802" width="24" height="1.6" fill="#1a78ff"/>
<path d="M741 801.5 L739 827.6" fill="none" stroke="#1a78ff" stroke-width="1" />
<text x="0" y="0" font-size="11" fill="#3a4ad8" font-style="italic" textLength="27.91" lengthAdjust="spacing"  transform="translate(873.5 796.3) scale(0.86 1)">SPp2</text>
<rect x="873" y="798" width="26" height="1.6" fill="#1a78ff"/>
<path d="M899 797.8 L900.6 788.6" fill="none" stroke="#1a78ff" stroke-width="1" />
<text x="0" y="0" font-size="11" fill="#3a4ad8" font-style="italic" textLength="27.91" lengthAdjust="spacing"  transform="translate(827.6 819.0) scale(0.86 1)">SPp2</text>
<rect x="822" y="820" width="30" height="1.6" fill="#1a78ff"/>
<path d="M818 832.6 L822 820.8" fill="none" stroke="#1a78ff" stroke-width="1" />
<circle cx="874" cy="799.4" r="1.7" fill="#8a107a" />
<rect x="705" y="864" width="216" height="1" fill="#1a78ff"/>
<rect x="725" y="885" width="186" height="1" fill="#1a78ff"/>
<rect x="725" y="842" width="1" height="47" fill="#1a78ff"/>
<rect x="910" y="842" width="1" height="47" fill="#1a78ff"/>
<rect x="736" y="842" width="1" height="25" fill="#5a98ff"/>
<rect x="818" y="842" width="1" height="25" fill="#1a78ff"/>
<rect x="900" y="842" width="1" height="25" fill="#5a98ff"/>
<path d="M723.5 866.1 L727.5 862.1" fill="none" stroke="#1a50d0" stroke-width="1.6" />
<path d="M734.5 866.1 L738.5 862.1" fill="none" stroke="#1a50d0" stroke-width="1.6" />
<path d="M816.5 866.1 L820.5 862.1" fill="none" stroke="#1a50d0" stroke-width="1.6" />
<path d="M898.5 866.1 L902.5 862.1" fill="none" stroke="#1a50d0" stroke-width="1.6" />
<path d="M908.5 866.1 L912.5 862.1" fill="none" stroke="#1a50d0" stroke-width="1.6" />
<path d="M723.5 887.1 L727.5 883.1" fill="none" stroke="#1a50d0" stroke-width="1.6" />
<path d="M908.5 887.1 L912.5 883.1" fill="none" stroke="#1a50d0" stroke-width="1.6" />
<text x="0" y="0" font-size="8" fill="#4a5ad8" font-style="italic" textLength="11.05" lengthAdjust="spacing"  transform="translate(705.5 861.1) scale(0.86 1)">40</text>
<text x="0" y="0" font-size="8" fill="#4a5ad8" font-style="italic" textLength="13.95" lengthAdjust="spacing"  transform="translate(772.5 861.1) scale(0.86 1)">310</text>
<text x="0" y="0" font-size="8" fill="#4a5ad8" font-style="italic" textLength="13.95" lengthAdjust="spacing"  transform="translate(854 861.1) scale(0.86 1)">310</text>
<text x="0" y="0" font-size="8" fill="#4a5ad8" font-style="italic" textLength="11.05" lengthAdjust="spacing"  transform="translate(911.5 861.1) scale(0.86 1)">40</text>
<text x="0" y="0" font-size="8" fill="#4a5ad8" font-style="italic" textLength="15.70" lengthAdjust="spacing"  transform="translate(812.5 882.1) scale(0.86 1)">700</text>
<rect x="931" y="727" width="1" height="136" fill="#5a98ff"/>
<rect x="953" y="737" width="1" height="106" fill="#5a98ff"/>
<rect x="911" y="737" width="46" height="1" fill="#1a78ff"/>
<rect x="911" y="842" width="46" height="1" fill="#1a78ff"/>
<rect x="911" y="747" width="24" height="1" fill="#5a98ff"/>
<rect x="911" y="789" width="24" height="1" fill="#5a98ff"/>
<rect x="911" y="832" width="24" height="1" fill="#1a78ff"/>
<path d="M929.5 735.3 L933.5 738.8" fill="none" stroke="#1a50d0" stroke-width="1.6" />
<path d="M929.5 745.7 L933.5 749.2" fill="none" stroke="#1a50d0" stroke-width="1.6" />
<path d="M929.5 787.8000000000001 L933.5 791.3000000000001" fill="none" stroke="#1a50d0" stroke-width="1.6" />
<path d="M929.5 830.6 L933.5 834.1" fill="none" stroke="#1a50d0" stroke-width="1.6" />
<path d="M929.5 840.6 L933.5 844.1" fill="none" stroke="#1a50d0" stroke-width="1.6" />
<path d="M951.5 735.3 L955.5 738.8" fill="none" stroke="#1a50d0" stroke-width="1.6" />
<path d="M951.5 840.6 L955.5 844.1" fill="none" stroke="#1a50d0" stroke-width="1.6" />
<text x="0" y="0" font-size="8" fill="#4a5ad8" font-style="italic" textLength="11.05" lengthAdjust="spacing"  transform="translate(929.5 735.6) rotate(-90) scale(0.86 1)">40</text>
<text x="0" y="0" font-size="8" fill="#4a5ad8" font-style="italic" textLength="14.53" lengthAdjust="spacing"  transform="translate(929.5 773.1) rotate(-90) scale(0.86 1)">160</text>
<text x="0" y="0" font-size="8" fill="#4a5ad8" font-style="italic" textLength="14.53" lengthAdjust="spacing"  transform="translate(929.5 815.6) rotate(-90) scale(0.86 1)">160</text>
<text x="0" y="0" font-size="8" fill="#4a5ad8" font-style="italic" textLength="11.05" lengthAdjust="spacing"  transform="translate(929.5 862.1) rotate(-90) scale(0.86 1)">40</text>
<text x="0" y="0" font-size="8" fill="#4a5ad8" font-style="italic" textLength="15.70" lengthAdjust="spacing"  transform="translate(951 795.6) rotate(-90) scale(0.86 1)">400</text>
<text x="0" y="0" font-size="10" fill="#ff5a86" font-style="italic" textLength="41.86" lengthAdjust="spacing"  transform="translate(965 789.3000000000001) scale(0.86 1)">AT-005</text>
<text x="1615" y="187" font-size="12" fill="#4a4a58" textLength="33.5" lengthAdjust="spacingAndGlyphs" >Library</text>
<g stroke="#555" fill="none" stroke-width="1.2">
<path d="M1891.5 179 H1895.5 M1892.5 179 V184 M1895 179 V184 M1890 184.5 H1897 M1893.5 185 V188" fill="none" />
</g>
<path d="M1906 179 L1914 187 M1914 179 L1906 187" fill="none" stroke="#5e5e5e" stroke-width="1.1" />
<rect x="1620" y="202" width="2" height="1" fill="#8a84b4"/>
<rect x="1623" y="202" width="9" height="1" fill="#8a84b4"/>
<rect x="1620" y="204" width="2" height="1" fill="#8a84b4"/>
<rect x="1623" y="204" width="9" height="1" fill="#8a84b4"/>
<rect x="1620" y="206" width="2" height="1" fill="#8a84b4"/>
<rect x="1623" y="206" width="9" height="1" fill="#8a84b4"/>
<rect x="1620" y="208" width="2" height="1" fill="#8a84b4"/>
<rect x="1623" y="208" width="9" height="1" fill="#8a84b4"/>
<rect x="1620" y="210" width="2" height="1" fill="#8a84b4"/>
<rect x="1623" y="210" width="9" height="1" fill="#8a84b4"/>
<circle cx="1630.5" cy="211.5" r="4.6" fill="#cbcfd4" />
<circle cx="1630.5" cy="211.5" r="2.7" fill="none" stroke="#3a3658" stroke-width="2.2" />
<rect x="1629.4" y="206.5" width="2.2" height="2.6" fill="#3a3658" transform="rotate(0 1630.5 211.5)" style="shape-rendering:geometricPrecision"/>
<rect x="1629.4" y="206.5" width="2.2" height="2.6" fill="#3a3658" transform="rotate(45 1630.5 211.5)" style="shape-rendering:geometricPrecision"/>
<rect x="1629.4" y="206.5" width="2.2" height="2.6" fill="#3a3658" transform="rotate(90 1630.5 211.5)" style="shape-rendering:geometricPrecision"/>
<rect x="1629.4" y="206.5" width="2.2" height="2.6" fill="#3a3658" transform="rotate(135 1630.5 211.5)" style="shape-rendering:geometricPrecision"/>
<rect x="1629.4" y="206.5" width="2.2" height="2.6" fill="#3a3658" transform="rotate(180 1630.5 211.5)" style="shape-rendering:geometricPrecision"/>
<rect x="1629.4" y="206.5" width="2.2" height="2.6" fill="#3a3658" transform="rotate(225 1630.5 211.5)" style="shape-rendering:geometricPrecision"/>
<rect x="1629.4" y="206.5" width="2.2" height="2.6" fill="#3a3658" transform="rotate(270 1630.5 211.5)" style="shape-rendering:geometricPrecision"/>
<rect x="1629.4" y="206.5" width="2.2" height="2.6" fill="#3a3658" transform="rotate(315 1630.5 211.5)" style="shape-rendering:geometricPrecision"/>
<path d="M1641 209 L1645 214 L1656 202" fill="none" stroke="#a4a6b4" stroke-width="2.2" />
<path d="M1667 209 A5 5 0 0 1 1673 203" fill="none" stroke="#1a78ff" stroke-width="2.2" />
<path d="M1672.5 199.5 L1677 203.5 L1672.5 207 Z" fill="#1a78ff" />
<path d="M1677 207 A5 5 0 0 1 1671 213" fill="none" stroke="#1a78ff" stroke-width="2.2" />
<path d="M1671.5 216.5 L1667 212.5 L1671.5 209 Z" fill="#1a78ff" />
<rect x="1687.5" y="202.5" width="12" height="12" fill="none" stroke="#a4a6b4" stroke-width="1.6"/>
<rect x="1690" y="203" width="7" height="4" fill="#cbcfd4" stroke="#a4a6b4" stroke-width="1"/>
<rect x="1691" y="210" width="5" height="4" fill="#a4a6b4"/>
<rect x="1709" y="200.5" width="11" height="4.5" fill="#a4a6b4" rx="1"/>
<path d="M1720 203 H1722.5 V208 H1715 V211" fill="none" stroke="#a4a6b4" stroke-width="1.3" />
<rect x="1713.5" y="210" width="3" height="6" fill="#a4a6b4"/>
<rect x="1614.5" y="220.5" width="302" height="346" fill="#f8f8f8" stroke="#9a9a9a" stroke-width="1"/>
<rect x="1613" y="568" width="307" height="1" fill="#111"/>
<rect x="1635.5" y="222.5" width="64" height="16" fill="#f0f0f0" stroke="#dcdcdc" stroke-width="1"/>
<line x1="1645.5" y1="240" x2="1645.5" y2="375" stroke="#a4a4a4" stroke-width="1" stroke-dasharray="1 1" shape-rendering="crispEdges"/>
<line x1="1645.5" y1="357" x2="1645.5" y2="372" stroke="#a4a4a4" stroke-width="1" stroke-dasharray="1 1" shape-rendering="crispEdges"/>
<rect x="1664" y="257" width="1" height="1" fill="#a4a4a4"/>
<rect x="1664" y="275" width="1" height="1" fill="#a4a4a4"/>
<rect x="1664" y="293" width="1" height="1" fill="#a4a4a4"/>
<rect x="1664" y="311" width="1" height="1" fill="#a4a4a4"/>
<rect x="1664" y="329" width="1" height="1" fill="#a4a4a4"/>
<rect x="1664" y="383" width="1" height="1" fill="#a4a4a4"/>
<rect x="1664" y="401" width="1" height="1" fill="#a4a4a4"/>
<rect x="1664" y="419" width="1" height="1" fill="#a4a4a4"/>
<rect x="1664" y="437" width="1" height="1" fill="#a4a4a4"/>
<rect x="1664" y="455" width="1" height="1" fill="#a4a4a4"/>
<rect x="1664" y="473" width="1" height="1" fill="#a4a4a4"/>
<rect x="1664" y="491" width="1" height="1" fill="#a4a4a4"/>
<rect x="1664" y="509" width="1" height="1" fill="#a4a4a4"/>
<rect x="1664" y="527" width="1" height="1" fill="#a4a4a4"/>
<path d="M1621.7 228.7 L1626.0 233 L1630.3 228.7" fill="none" stroke="#7c7c7c" stroke-width="1.6" />
<line x1="1632" y1="231.5" x2="1636" y2="231.5" stroke="#a4a4a4" stroke-width="1" stroke-dasharray="1 1" shape-rendering="crispEdges"/>
<path d="M1637.1 235 V225.2 Q1637.1 224.5 1637.9 224.5 H1642.5 L1643.7 225.8 H1648.8 L1652.1 228.3 H1639.7 Z" fill="#3a3658" stroke="#2a2640" stroke-width="1" />
<path d="M1637.4 235.4 L1639.8 228.4 H1652.5 L1648.8 235.4 Z" fill="#e4e4f4" stroke="#2a2640" stroke-width="1.3" stroke-linejoin="round"/>
<text x="1658" y="234" font-size="12" fill="#000" textLength="38" lengthAdjust="spacingAndGlyphs" font-weight="bold" >Library</text>
<path d="M1640.4 246.7 L1644.7 251 L1649.0 246.7" fill="none" stroke="#7c7c7c" stroke-width="1.6" />
<line x1="1650" y1="249.5" x2="1655" y2="249.5" stroke="#a4a4a4" stroke-width="1" stroke-dasharray="1 1" shape-rendering="crispEdges"/>
<path d="M1655.8 253 V243.2 Q1655.8 242.5 1656.6000000000001 242.5 H1661.2 L1662.4 243.8 H1667.5 L1670.8 246.3 H1658.4 Z" fill="#3a3658" stroke="#2a2640" stroke-width="1" />
<path d="M1656.1000000000001 253.4 L1658.5 246.4 H1671.2 L1667.5 253.4 Z" fill="#e4e4f4" stroke="#2a2640" stroke-width="1.3" stroke-linejoin="round"/>
<text x="1677" y="252" font-size="12" fill="#000" textLength="42" lengthAdjust="spacingAndGlyphs" font-weight="bold" >Objects</text>
<path d="M1661.9 263 L1665.9 267 L1661.9 271" fill="none" stroke="#8c8c8c" stroke-width="1.3" />
<line x1="1669" y1="267.5" x2="1673" y2="267.5" stroke="#a4a4a4" stroke-width="1" stroke-dasharray="1 1" shape-rendering="crispEdges"/>
<path d="M1674.5 271 V261.2 Q1674.5 260.5 1675.3000000000002 260.5 H1679.9 L1681.1000000000001 261.8 H1686.2 L1689.5 264.3 H1677.1000000000001 Z" fill="#3a3658" stroke="#2a2640" stroke-width="1" />
<path d="M1674.8000000000002 271.4 L1677.2 264.4 H1689.9 L1686.2 271.4 Z" fill="#e4e4f4" stroke="#2a2640" stroke-width="1.3" stroke-linejoin="round"/>
<text x="1696" y="270" font-size="12" fill="#000" textLength="65.5" lengthAdjust="spacingAndGlyphs" >Architecture</text>
<path d="M1661.9 281 L1665.9 285 L1661.9 289" fill="none" stroke="#8c8c8c" stroke-width="1.3" />
<line x1="1669" y1="285.5" x2="1673" y2="285.5" stroke="#a4a4a4" stroke-width="1" stroke-dasharray="1 1" shape-rendering="crispEdges"/>
<path d="M1674.5 289 V279.2 Q1674.5 278.5 1675.3000000000002 278.5 H1679.9 L1681.1000000000001 279.8 H1686.2 L1689.5 282.3 H1677.1000000000001 Z" fill="#3a3658" stroke="#2a2640" stroke-width="1" />
<path d="M1674.8000000000002 289.4 L1677.2 282.4 H1689.9 L1686.2 289.4 Z" fill="#e4e4f4" stroke="#2a2640" stroke-width="1.3" stroke-linejoin="round"/>
<text x="1696" y="288" font-size="12" fill="#000" textLength="31" lengthAdjust="spacingAndGlyphs" >Doors</text>
<path d="M1661.9 299 L1665.9 303 L1661.9 307" fill="none" stroke="#8c8c8c" stroke-width="1.3" />
<line x1="1669" y1="303.5" x2="1673" y2="303.5" stroke="#a4a4a4" stroke-width="1" stroke-dasharray="1 1" shape-rendering="crispEdges"/>
<path d="M1674.5 307 V297.2 Q1674.5 296.5 1675.3000000000002 296.5 H1679.9 L1681.1000000000001 297.8 H1686.2 L1689.5 300.3 H1677.1000000000001 Z" fill="#3a3658" stroke="#2a2640" stroke-width="1" />
<path d="M1674.8000000000002 307.4 L1677.2 300.4 H1689.9 L1686.2 307.4 Z" fill="#e4e4f4" stroke="#2a2640" stroke-width="1.3" stroke-linejoin="round"/>
<text x="1696" y="306" font-size="12" fill="#000" textLength="31" lengthAdjust="spacingAndGlyphs" >Loads</text>
<path d="M1661.9 317 L1665.9 321 L1661.9 325" fill="none" stroke="#8c8c8c" stroke-width="1.3" />
<line x1="1669" y1="321.5" x2="1673" y2="321.5" stroke="#a4a4a4" stroke-width="1" stroke-dasharray="1 1" shape-rendering="crispEdges"/>
<path d="M1674.5 325 V315.2 Q1674.5 314.5 1675.3000000000002 314.5 H1679.9 L1681.1000000000001 315.8 H1686.2 L1689.5 318.3 H1677.1000000000001 Z" fill="#3a3658" stroke="#2a2640" stroke-width="1" />
<path d="M1674.8000000000002 325.4 L1677.2 318.4 H1689.9 L1686.2 325.4 Z" fill="#e4e4f4" stroke="#2a2640" stroke-width="1.3" stroke-linejoin="round"/>
<text x="1696" y="324" font-size="12" fill="#000" textLength="28" lengthAdjust="spacingAndGlyphs" >Stairs</text>
<path d="M1661.9 335 L1665.9 339 L1661.9 343" fill="none" stroke="#8c8c8c" stroke-width="1.3" />
<line x1="1669" y1="339.5" x2="1673" y2="339.5" stroke="#a4a4a4" stroke-width="1" stroke-dasharray="1 1" shape-rendering="crispEdges"/>
<path d="M1674.5 343 V333.2 Q1674.5 332.5 1675.3000000000002 332.5 H1679.9 L1681.1000000000001 333.8 H1686.2 L1689.5 336.3 H1677.1000000000001 Z" fill="#3a3658" stroke="#2a2640" stroke-width="1" />
<path d="M1674.8000000000002 343.4 L1677.2 336.4 H1689.9 L1686.2 343.4 Z" fill="#e4e4f4" stroke="#2a2640" stroke-width="1.3" stroke-linejoin="round"/>
<text x="1696" y="342" font-size="12" fill="#000" textLength="49" lengthAdjust="spacingAndGlyphs" >Windows</text>
<path d="M1643.2 353 L1647.2 357 L1643.2 361" fill="none" stroke="#8c8c8c" stroke-width="1.3" />
<line x1="1650" y1="357.5" x2="1655" y2="357.5" stroke="#a4a4a4" stroke-width="1" stroke-dasharray="1 1" shape-rendering="crispEdges"/>
<path d="M1655.8 361 V351.2 Q1655.8 350.5 1656.6000000000001 350.5 H1661.2 L1662.4 351.8 H1667.5 L1670.8 354.3 H1658.4 Z" fill="#3a3658" stroke="#2a2640" stroke-width="1" />
<path d="M1656.1000000000001 361.4 L1658.5 354.4 H1671.2 L1667.5 361.4 Z" fill="#e4e4f4" stroke="#2a2640" stroke-width="1.3" stroke-linejoin="round"/>
<text x="1677" y="360" font-size="12" fill="#000" textLength="40" lengthAdjust="spacingAndGlyphs" font-weight="bold" >Images</text>
<path d="M1640.4 372.7 L1644.7 377 L1649.0 372.7" fill="none" stroke="#7c7c7c" stroke-width="1.6" />
<line x1="1650" y1="375.5" x2="1655" y2="375.5" stroke="#a4a4a4" stroke-width="1" stroke-dasharray="1 1" shape-rendering="crispEdges"/>
<path d="M1655.8 379 V369.2 Q1655.8 368.5 1656.6000000000001 368.5 H1661.2 L1662.4 369.8 H1667.5 L1670.8 372.3 H1658.4 Z" fill="#3a3658" stroke="#2a2640" stroke-width="1" />
<path d="M1656.1000000000001 379.4 L1658.5 372.4 H1671.2 L1667.5 379.4 Z" fill="#e4e4f4" stroke="#2a2640" stroke-width="1.3" stroke-linejoin="round"/>
<text x="1677" y="378" font-size="12" fill="#000" textLength="49" lengthAdjust="spacingAndGlyphs" font-weight="bold" >Textures</text>
<path d="M1661.9 389 L1665.9 393 L1661.9 397" fill="none" stroke="#8c8c8c" stroke-width="1.3" />
<line x1="1669" y1="393.5" x2="1673" y2="393.5" stroke="#a4a4a4" stroke-width="1" stroke-dasharray="1 1" shape-rendering="crispEdges"/>
<path d="M1674.5 397 V387.2 Q1674.5 386.5 1675.3000000000002 386.5 H1679.9 L1681.1000000000001 387.8 H1686.2 L1689.5 390.3 H1677.1000000000001 Z" fill="#3a3658" stroke="#2a2640" stroke-width="1" />
<path d="M1674.8000000000002 397.4 L1677.2 390.4 H1689.9 L1686.2 397.4 Z" fill="#e4e4f4" stroke="#2a2640" stroke-width="1.3" stroke-linejoin="round"/>
<text x="1696" y="396" font-size="12" fill="#000" textLength="53" lengthAdjust="spacingAndGlyphs" >Elevations</text>
<path d="M1661.9 407 L1665.9 411 L1661.9 415" fill="none" stroke="#8c8c8c" stroke-width="1.3" />
<line x1="1669" y1="411.5" x2="1673" y2="411.5" stroke="#a4a4a4" stroke-width="1" stroke-dasharray="1 1" shape-rendering="crispEdges"/>
<path d="M1674.5 415 V405.2 Q1674.5 404.5 1675.3000000000002 404.5 H1679.9 L1681.1000000000001 405.8 H1686.2 L1689.5 408.3 H1677.1000000000001 Z" fill="#3a3658" stroke="#2a2640" stroke-width="1" />
<path d="M1674.8000000000002 415.4 L1677.2 408.4 H1689.9 L1686.2 415.4 Z" fill="#e4e4f4" stroke="#2a2640" stroke-width="1.3" stroke-linejoin="round"/>
<text x="1696" y="414" font-size="12" fill="#000" textLength="40" lengthAdjust="spacingAndGlyphs" >Flowers</text>
<path d="M1661.9 425 L1665.9 429 L1661.9 433" fill="none" stroke="#8c8c8c" stroke-width="1.3" />
<line x1="1669" y1="429.5" x2="1673" y2="429.5" stroke="#a4a4a4" stroke-width="1" stroke-dasharray="1 1" shape-rendering="crispEdges"/>
<path d="M1674.5 433 V423.2 Q1674.5 422.5 1675.3000000000002 422.5 H1679.9 L1681.1000000000001 423.8 H1686.2 L1689.5 426.3 H1677.1000000000001 Z" fill="#3a3658" stroke="#2a2640" stroke-width="1" />
<path d="M1674.8000000000002 433.4 L1677.2 426.4 H1689.9 L1686.2 433.4 Z" fill="#e4e4f4" stroke="#2a2640" stroke-width="1.3" stroke-linejoin="round"/>
<text x="1696" y="432" font-size="12" fill="#000" textLength="48.5" lengthAdjust="spacingAndGlyphs" >Hatching</text>
<path d="M1661.9 443 L1665.9 447 L1661.9 451" fill="none" stroke="#8c8c8c" stroke-width="1.3" />
<line x1="1669" y1="447.5" x2="1673" y2="447.5" stroke="#a4a4a4" stroke-width="1" stroke-dasharray="1 1" shape-rendering="crispEdges"/>
<path d="M1674.5 451 V441.2 Q1674.5 440.5 1675.3000000000002 440.5 H1679.9 L1681.1000000000001 441.8 H1686.2 L1689.5 444.3 H1677.1000000000001 Z" fill="#3a3658" stroke="#2a2640" stroke-width="1" />
<path d="M1674.8000000000002 451.4 L1677.2 444.4 H1689.9 L1686.2 451.4 Z" fill="#e4e4f4" stroke="#2a2640" stroke-width="1.3" stroke-linejoin="round"/>
<text x="1696" y="450" font-size="12" fill="#000" textLength="56" lengthAdjust="spacingAndGlyphs" >Landscape</text>
<path d="M1661.9 461 L1665.9 465 L1661.9 469" fill="none" stroke="#8c8c8c" stroke-width="1.3" />
<line x1="1669" y1="465.5" x2="1673" y2="465.5" stroke="#a4a4a4" stroke-width="1" stroke-dasharray="1 1" shape-rendering="crispEdges"/>
<path d="M1674.5 469 V459.2 Q1674.5 458.5 1675.3000000000002 458.5 H1679.9 L1681.1000000000001 459.8 H1686.2 L1689.5 462.3 H1677.1000000000001 Z" fill="#3a3658" stroke="#2a2640" stroke-width="1" />
<path d="M1674.8000000000002 469.4 L1677.2 462.4 H1689.9 L1686.2 469.4 Z" fill="#e4e4f4" stroke="#2a2640" stroke-width="1.3" stroke-linejoin="round"/>
<text x="1696" y="468" font-size="12" fill="#000" textLength="46" lengthAdjust="spacingAndGlyphs" >Masonry</text>
<path d="M1661.9 479 L1665.9 483 L1661.9 487" fill="none" stroke="#8c8c8c" stroke-width="1.3" />
<line x1="1669" y1="483.5" x2="1673" y2="483.5" stroke="#a4a4a4" stroke-width="1" stroke-dasharray="1 1" shape-rendering="crispEdges"/>
<path d="M1674.5 487 V477.2 Q1674.5 476.5 1675.3000000000002 476.5 H1679.9 L1681.1000000000001 477.8 H1686.2 L1689.5 480.3 H1677.1000000000001 Z" fill="#3a3658" stroke="#2a2640" stroke-width="1" />
<path d="M1674.8000000000002 487.4 L1677.2 480.4 H1689.9 L1686.2 487.4 Z" fill="#e4e4f4" stroke="#2a2640" stroke-width="1.3" stroke-linejoin="round"/>
<text x="1696" y="486" font-size="12" fill="#000" textLength="30" lengthAdjust="spacingAndGlyphs" >Metal</text>
<path d="M1661.9 497 L1665.9 501 L1661.9 505" fill="none" stroke="#8c8c8c" stroke-width="1.3" />
<line x1="1669" y1="501.5" x2="1673" y2="501.5" stroke="#a4a4a4" stroke-width="1" stroke-dasharray="1 1" shape-rendering="crispEdges"/>
<path d="M1674.5 505 V495.2 Q1674.5 494.5 1675.3000000000002 494.5 H1679.9 L1681.1000000000001 495.8 H1686.2 L1689.5 498.3 H1677.1000000000001 Z" fill="#3a3658" stroke="#2a2640" stroke-width="1" />
<path d="M1674.8000000000002 505.4 L1677.2 498.4 H1689.9 L1686.2 505.4 Z" fill="#e4e4f4" stroke="#2a2640" stroke-width="1.3" stroke-linejoin="round"/>
<text x="1696" y="504" font-size="12" fill="#000" textLength="35" lengthAdjust="spacingAndGlyphs" >Plaster</text>
<path d="M1661.9 515 L1665.9 519 L1661.9 523" fill="none" stroke="#8c8c8c" stroke-width="1.3" />
<line x1="1669" y1="519.5" x2="1673" y2="519.5" stroke="#a4a4a4" stroke-width="1" stroke-dasharray="1 1" shape-rendering="crispEdges"/>
<path d="M1674.5 523 V513.2 Q1674.5 512.5 1675.3000000000002 512.5 H1679.9 L1681.1000000000001 513.8 H1686.2 L1689.5 516.3 H1677.1000000000001 Z" fill="#3a3658" stroke="#2a2640" stroke-width="1" />
<path d="M1674.8000000000002 523.4 L1677.2 516.4 H1689.9 L1686.2 523.4 Z" fill="#e4e4f4" stroke="#2a2640" stroke-width="1.3" stroke-linejoin="round"/>
<text x="1696" y="522" font-size="12" fill="#000" textLength="25" lengthAdjust="spacingAndGlyphs" >Roof</text>
<path d="M1661.9 533 L1665.9 537 L1661.9 541" fill="none" stroke="#8c8c8c" stroke-width="1.3" />
<line x1="1669" y1="537.5" x2="1673" y2="537.5" stroke="#a4a4a4" stroke-width="1" stroke-dasharray="1 1" shape-rendering="crispEdges"/>
<path d="M1674.5 541 V531.2 Q1674.5 530.5 1675.3000000000002 530.5 H1679.9 L1681.1000000000001 531.8 H1686.2 L1689.5 534.3 H1677.1000000000001 Z" fill="#3a3658" stroke="#2a2640" stroke-width="1" />
<path d="M1674.8000000000002 541.4 L1677.2 534.4 H1689.9 L1686.2 541.4 Z" fill="#e4e4f4" stroke="#2a2640" stroke-width="1.3" stroke-linejoin="round"/>
<text x="1696" y="540" font-size="12" fill="#000" textLength="31.5" lengthAdjust="spacingAndGlyphs" >Wood</text>
<rect x="1691" y="570" width="60" height="19" fill="#f0f0f0"/>
<text x="1635" y="584" font-size="12" fill="#4a4a58" textLength="46.5" lengthAdjust="spacingAndGlyphs" >Structure</text>
<text x="1711" y="584" font-size="12" fill="#4a4a58" textLength="34" lengthAdjust="spacingAndGlyphs" >Library</text>
<g stroke="#2a2640" fill="#fff" stroke-width="1">
<path d="M1617.5 576 L1622 571.5 L1626.5 576 L1622 580.5 Z M1625.5 581 L1629 577.5 L1632.5 581 L1629 584.5 Z" fill="none" />
<path d="M1624 578 L1627 581" fill="none" fill="none"/>
</g>
<ellipse cx="1701" cy="574.5" rx="5.5" ry="2" fill="#c9c9d6" stroke="#6a688a" stroke-width="0.9"/>
<ellipse cx="1701" cy="577.5" rx="5.5" ry="2" fill="#c9c9d6" stroke="#6a688a" stroke-width="0.9"/>
<ellipse cx="1701" cy="580.5" rx="5.5" ry="2" fill="#c9c9d6" stroke="#6a688a" stroke-width="0.9"/>
<ellipse cx="1701" cy="583.5" rx="5.5" ry="2" fill="#c9c9d6" stroke="#6a688a" stroke-width="0.9"/>
<text x="1615" y="610" font-size="12" fill="#4a4a58" textLength="29.5" lengthAdjust="spacingAndGlyphs" >Views</text>
<g stroke="#555" fill="none" stroke-width="1.2">
<path d="M1891.5 602 H1895.5 M1892.5 602 V607 M1895 602 V607 M1890 607.5 H1897 M1893.5 608 V611" fill="none" />
</g>
<path d="M1906 602 L1914 610 M1914 602 L1906 610" fill="none" stroke="#5e5e5e" stroke-width="1.1" />
<rect x="1620" y="625" width="2" height="1" fill="#b4b6c8"/>
<rect x="1623" y="625" width="9" height="1" fill="#b4b6c8"/>
<rect x="1620" y="627" width="2" height="1" fill="#b4b6c8"/>
<rect x="1623" y="627" width="9" height="1" fill="#b4b6c8"/>
<rect x="1620" y="629" width="2" height="1" fill="#b4b6c8"/>
<rect x="1623" y="629" width="9" height="1" fill="#b4b6c8"/>
<rect x="1620" y="631" width="2" height="1" fill="#b4b6c8"/>
<rect x="1623" y="631" width="9" height="1" fill="#b4b6c8"/>
<rect x="1620" y="633" width="2" height="1" fill="#b4b6c8"/>
<rect x="1623" y="633" width="9" height="1" fill="#b4b6c8"/>
<circle cx="1630.5" cy="634.5" r="4.6" fill="#cbcfd4" />
<circle cx="1630.5" cy="634.5" r="2.7" fill="none" stroke="#b0b2c2" stroke-width="2.2" />
<rect x="1629.4" y="629.5" width="2.2" height="2.6" fill="#b0b2c2" transform="rotate(0 1630.5 634.5)" style="shape-rendering:geometricPrecision"/>
<rect x="1629.4" y="629.5" width="2.2" height="2.6" fill="#b0b2c2" transform="rotate(45 1630.5 634.5)" style="shape-rendering:geometricPrecision"/>
<rect x="1629.4" y="629.5" width="2.2" height="2.6" fill="#b0b2c2" transform="rotate(90 1630.5 634.5)" style="shape-rendering:geometricPrecision"/>
<rect x="1629.4" y="629.5" width="2.2" height="2.6" fill="#b0b2c2" transform="rotate(135 1630.5 634.5)" style="shape-rendering:geometricPrecision"/>
<rect x="1629.4" y="629.5" width="2.2" height="2.6" fill="#b0b2c2" transform="rotate(180 1630.5 634.5)" style="shape-rendering:geometricPrecision"/>
<rect x="1629.4" y="629.5" width="2.2" height="2.6" fill="#b0b2c2" transform="rotate(225 1630.5 634.5)" style="shape-rendering:geometricPrecision"/>
<rect x="1629.4" y="629.5" width="2.2" height="2.6" fill="#b0b2c2" transform="rotate(270 1630.5 634.5)" style="shape-rendering:geometricPrecision"/>
<rect x="1629.4" y="629.5" width="2.2" height="2.6" fill="#b0b2c2" transform="rotate(315 1630.5 634.5)" style="shape-rendering:geometricPrecision"/>
<path d="M1641 632 L1645 637 L1656 625" fill="none" stroke="#a4a6b4" stroke-width="2.2" />
<path d="M1667 632 A5 5 0 0 1 1673 626" fill="none" stroke="#1a78ff" stroke-width="2.2" />
<path d="M1672.5 622.5 L1677 626.5 L1672.5 630 Z" fill="#1a78ff" />
<path d="M1677 630 A5 5 0 0 1 1671 636" fill="none" stroke="#1a78ff" stroke-width="2.2" />
<path d="M1671.5 639.5 L1667 635.5 L1671.5 632 Z" fill="#1a78ff" />
<rect x="1686" y="625" width="1" height="13" fill="#e8eaf0"/>
<g stroke="#9cc4fb" fill="#9cc4fb" stroke-width="1">
<path d="M1699.5 637 V628 M1696 630 L1699.5 625.5 L1703 630 Z" fill="none" />
<path d="M1719.5 625 V634 M1716 632 L1719.5 636.5 L1723 632 Z" fill="none" />
</g>
<rect x="1703" y="629.0" width="5" height="1" fill="#b4c4dc"/>
<rect x="1723" y="626.0" width="5" height="1" fill="#b4c4dc"/>
<rect x="1703" y="631.5" width="5" height="1" fill="#b4c4dc"/>
<rect x="1723" y="628.5" width="5" height="1" fill="#b4c4dc"/>
<rect x="1703" y="634.0" width="5" height="1" fill="#b4c4dc"/>
<rect x="1723" y="631.0" width="5" height="1" fill="#b4c4dc"/>
<rect x="1703" y="636.5" width="5" height="1" fill="#b4c4dc"/>
<rect x="1723" y="633.5" width="5" height="1" fill="#b4c4dc"/>
<rect x="1738" y="625" width="1" height="13" fill="#e8eaf0"/>
<path d="M1745.6 637.5 V627.7 Q1745.6 627.0 1746.4 627.0 H1751 L1752.2 628.3 H1757.3 L1760.6 630.8 H1748.2 Z" fill="#3a3658" stroke="#2a2640" stroke-width="1" />
<path d="M1745.9 637.9 L1748.3 630.9 H1761 L1757.3 637.9 Z" fill="#e4e4f4" stroke="#2a2640" stroke-width="1.3" stroke-linejoin="round"/>
<path d="M1757.5 623 V629 M1754.5 626 H1760.5" fill="none" stroke="#1a78ff" stroke-width="1.6" />
<rect x="1768.5" y="628.5" width="9" height="8" fill="#c9c9d6" stroke="#2a2640" stroke-width="1.2"/>
<path d="M1777.5 631 L1782.5 628.5 V637 L1777.5 634.5 Z" fill="#c9c9d6" stroke="#2a2640" stroke-width="1.2" />
<circle cx="1771" cy="626.5" r="1.5" fill="none" stroke="#2a2640" stroke-width="1" />
<circle cx="1775" cy="626.5" r="1.5" fill="none" stroke="#2a2640" stroke-width="1" />
<path d="M1780.5 622 V628 M1777.5 625 H1783.5" fill="none" stroke="#1a78ff" stroke-width="1.6" />
<rect x="1614.5" y="643.5" width="302" height="342" fill="#f8f8f8" stroke="#9a9a9a" stroke-width="1"/>
<rect x="1613" y="987" width="307" height="1" fill="#111"/>
<rect x="1635.5" y="644.5" width="59" height="16" fill="#f0f0f0" stroke="#dcdcdc" stroke-width="1"/>
<line x1="1627.5" y1="681" x2="1627.5" y2="700" stroke="#a4a4a4" stroke-width="1" stroke-dasharray="1 1" shape-rendering="crispEdges"/>
<line x1="1645.5" y1="679" x2="1645.5" y2="689" stroke="#a4a4a4" stroke-width="1" stroke-dasharray="1 1" shape-rendering="crispEdges"/>
<line x1="1645" y1="689.5" x2="1655" y2="689.5" stroke="#a4a4a4" stroke-width="1" stroke-dasharray="1 1" shape-rendering="crispEdges"/>
<path d="M1624.5 649.5 L1628.5 653.5 L1624.5 657.5" fill="none" stroke="#8c8c8c" stroke-width="1.3" />
<line x1="1632" y1="653.5" x2="1636" y2="653.5" stroke="#a4a4a4" stroke-width="1" stroke-dasharray="1 1" shape-rendering="crispEdges"/>
<path d="M1637.1 657.5 V647.7 Q1637.1 647.0 1637.9 647.0 H1642.5 L1643.7 648.3 H1648.8 L1652.1 650.8 H1639.7 Z" fill="#3a3658" stroke="#2a2640" stroke-width="1" />
<path d="M1637.4 657.9 L1639.8 650.9 H1652.5 L1648.8 657.9 Z" fill="#e4e4f4" stroke="#2a2640" stroke-width="1.3" stroke-linejoin="round"/>
<text x="1658" y="656.5" font-size="12" fill="#000" textLength="33" lengthAdjust="spacingAndGlyphs" font-weight="bold" >Views</text>
<path d="M1621.7 669.2 L1626.0 673.5 L1630.3 669.2" fill="none" stroke="#7c7c7c" stroke-width="1.6" />
<line x1="1632" y1="671.5" x2="1636" y2="671.5" stroke="#a4a4a4" stroke-width="1" stroke-dasharray="1 1" shape-rendering="crispEdges"/>
<path d="M1637.1 675.5 V665.7 Q1637.1 665.0 1637.9 665.0 H1642.5 L1643.7 666.3 H1648.8 L1652.1 668.8 H1639.7 Z" fill="#3a3658" stroke="#2a2640" stroke-width="1" />
<path d="M1637.4 675.9 L1639.8 668.9 H1652.5 L1648.8 675.9 Z" fill="#e4e4f4" stroke="#2a2640" stroke-width="1.3" stroke-linejoin="round"/>
<text x="1658" y="674.5" font-size="12" fill="#000" textLength="54" lengthAdjust="spacingAndGlyphs" font-weight="bold" >3D-Views</text>
<path d="M1624.5 703.5 L1628.5 707.5 L1624.5 711.5" fill="none" stroke="#8c8c8c" stroke-width="1.3" />
<line x1="1632" y1="707.5" x2="1636" y2="707.5" stroke="#a4a4a4" stroke-width="1" stroke-dasharray="1 1" shape-rendering="crispEdges"/>
<path d="M1637.1 711.5 V701.7 Q1637.1 701.0 1637.9 701.0 H1642.5 L1643.7 702.3 H1648.8 L1652.1 704.8 H1639.7 Z" fill="#3a3658" stroke="#2a2640" stroke-width="1" />
<path d="M1637.4 711.9 L1639.8 704.9 H1652.5 L1648.8 711.9 Z" fill="#e4e4f4" stroke="#2a2640" stroke-width="1.3" stroke-linejoin="round"/>
<text x="1658" y="710.5" font-size="12" fill="#000" textLength="52" lengthAdjust="spacingAndGlyphs" font-weight="bold" >Drawings</text>
<path d="M1624.5 721.5 L1628.5 725.5 L1624.5 729.5" fill="none" stroke="#8c8c8c" stroke-width="1.3" />
<line x1="1632" y1="725.5" x2="1636" y2="725.5" stroke="#a4a4a4" stroke-width="1" stroke-dasharray="1 1" shape-rendering="crispEdges"/>
<path d="M1637.1 729.5 V719.7 Q1637.1 719.0 1637.9 719.0 H1642.5 L1643.7 720.3 H1648.8 L1652.1 722.8 H1639.7 Z" fill="#3a3658" stroke="#2a2640" stroke-width="1" />
<path d="M1637.4 729.9 L1639.8 722.9 H1652.5 L1648.8 729.9 Z" fill="#e4e4f4" stroke="#2a2640" stroke-width="1.3" stroke-linejoin="round"/>
<text x="1658" y="728.5" font-size="12" fill="#000" textLength="87" lengthAdjust="spacingAndGlyphs" font-weight="bold" >Meshed models</text>
<path d="M1657 688 L1664 681.5 L1671 688 L1669.5 689.5 V696.5 H1658.5 V689.5 Z" fill="#fff" stroke="#2a2640" stroke-width="1.2" />
<path d="M1664 681.5 L1671 688 L1669.5 689.5 V696.5 L1666 694 V686" fill="#8a88a0" stroke="#2a2640" stroke-width="1" />
<rect x="1660.5" y="691.5" width="2" height="5" fill="#fff" stroke="#2a2640" stroke-width="0.8"/>
<text x="1677" y="693" font-size="12" fill="#000" textLength="41" lengthAdjust="spacingAndGlyphs" >3D view</text>
<rect x="1615" y="989" width="54" height="19" fill="#f0f0f0"/>
<text x="1635" y="1003" font-size="12" fill="#4a4a58" textLength="29.5" lengthAdjust="spacingAndGlyphs" >Views</text>
<text x="1694" y="1003" font-size="12" fill="#4a4a58" textLength="33.5" lengthAdjust="spacingAndGlyphs" >Sheets</text>
<rect x="1621.5" y="993.5" width="9" height="9" fill="#d0d0de" stroke="#2a2640" stroke-width="1"/>
<path d="M1621.5 993.5 L1624 991.5 H1632.5 V1000 L1630.5 1002" fill="none" stroke="#2a2640" stroke-width="1" />
<path d="M1617.5 993 V990.5 H1620 M1617.5 1002 V1005.5 H1620 M1631 990.5 H1633.5 M1633.5 1003 V1005.5 H1631" fill="none" stroke="#666" stroke-width="1" />
<path d="M1678.5 991.5 H1685 L1689.5 996 V1005.5 H1678.5 Z" fill="#f8f8f8" stroke="#2a2640" stroke-width="1.1" />
<path d="M1685 991.5 V996 H1689.5" fill="none" stroke="#2a2640" stroke-width="1" />
<path d="M1920 974 H1901 Q1895 974 1895 980 V1013 Q1895 1017 1899 1019 L1920 1029 Z" fill="#fafafa" />
<rect x="1901" y="985" width="16" height="17" fill="#1a1f6a" rx="2.5"/>
<circle cx="1909" cy="993.5" r="5.2" fill="#fff" />
<path d="M1904.5 993.5 L1907 991.5 V992.8 H1911 V991.5 L1913.5 993.5 L1911 995.5 V994.2 H1907 V995.5 Z" fill="#1a1f6a" />
<rect x="1510" y="198" width="75" height="103" fill="#cbcfd4"/>
<text x="1515" y="212.5" font-size="12" fill="#3a3a48" textLength="48" lengthAdjust="spacingAndGlyphs" font-weight="bold" >Projecti...</text>
<path d="M1571 205 L1578 212 M1578 205 L1571 212" fill="none" stroke="#555" stroke-width="1.1" />
<rect x="1537.5" y="221.5" width="21" height="21" fill="#b5bad6" stroke="#1c2c78" stroke-width="1"/>
<path d="M1520.3 228.6 L1526.9 224.5 L1532.7 228.6 V235.7 L1525.9 239.5 L1520.3 235.7 Z M1520.3 228.6 L1526.2 232.2 L1532.7 228.6 M1526.2 232.2 L1525.9 239.5" fill="none" stroke="#b4b6c8" stroke-width="1" />
<rect x="1541.2" y="226.6" width="10.2" height="10.2" fill="none" stroke="#6a688a" stroke-width="1" rx="0.8" style="shape-rendering:geometricPrecision"/>
<path d="M1550.9 227.4 L1553.9 230.4 M1542.0 236.29999999999998 L1545.0 239.29999999999998" fill="none" stroke="#6a688a" stroke-width="0.9" />
<rect x="1544.2" y="229.6" width="10.2" height="10.2" fill="#b0b4d0" stroke="#55527a" stroke-width="1.4" rx="0.6" style="shape-rendering:geometricPrecision"/>
<path d="M1541.2 224.2 H1551.8 L1554.9 227.6 H1544.2 Z" fill="#f06a6a" stroke="#e82828" stroke-width="1" />
<rect x="1563.8" y="225.9" width="10.3" height="10.3" fill="none" stroke="#b4b6c8" stroke-width="1" rx="0.8" style="shape-rendering:geometricPrecision"/>
<path d="M1573.6 226.70000000000002 L1577.1 230.20000000000002 M1564.6 235.70000000000002 L1568.1 239.20000000000002" fill="none" stroke="#b4b6c8" stroke-width="0.9" />
<rect x="1567.3" y="229.4" width="10.3" height="10.3" fill="#c8d4ec" stroke="#8ab4f0" stroke-width="1.3" rx="0.6" style="shape-rendering:geometricPrecision"/>
<rect x="1520.1" y="252.90000000000003" width="9.8" height="9.8" fill="none" stroke="#b4b6c8" stroke-width="1" rx="0.8" style="shape-rendering:geometricPrecision"/>
<path d="M1529.3999999999999 253.70000000000005 L1532.6 256.90000000000003 M1520.8999999999999 262.20000000000005 L1524.1 265.40000000000003" fill="none" stroke="#b4b6c8" stroke-width="0.9" />
<rect x="1523.3" y="256.1" width="9.8" height="9.8" fill="none" stroke="#b4b6c8" stroke-width="1.2" rx="0.6" style="shape-rendering:geometricPrecision"/>
<path d="M1518.2 252.2 L1521.8 256.1 V265.8 L1518.2 262.2 Z" fill="#b4dcc2" stroke="#72b88a" stroke-width="0.9" />
<rect x="1542.0" y="253.4" width="9.4" height="9.4" fill="none" stroke="#6a688a" stroke-width="1" rx="0.8" style="shape-rendering:geometricPrecision"/>
<path d="M1550.9 254.20000000000002 L1553.1000000000001 256.4 M1542.8 262.3 L1545.0 264.5" fill="none" stroke="#6a688a" stroke-width="0.9" />
<rect x="1544.2" y="255.6" width="9.4" height="9.4" fill="#c6c8da" stroke="#55527a" stroke-width="1.5" rx="0.6" style="shape-rendering:geometricPrecision"/>
<g stroke="#1a78ff" fill="none" stroke-width="1.8">
<path d="M1540.6 254.8 V251.8 H1543.6 M1552.4 251.8 H1555.4 V254.8 M1540.6 263.2 V266.2 H1543.6 M1552.4 266.2 H1555.4 V263.2" fill="none" />
</g>
<rect x="1562.3999999999999" y="252.90000000000003" width="9.6" height="9.6" fill="none" stroke="#b4b6c8" stroke-width="1" rx="0.8" style="shape-rendering:geometricPrecision"/>
<path d="M1571.4999999999998 253.70000000000005 L1574.6999999999998 256.90000000000003 M1563.1999999999998 262.00000000000006 L1566.3999999999999 265.20000000000005" fill="none" stroke="#b4b6c8" stroke-width="0.9" />
<rect x="1565.6" y="256.1" width="9.6" height="9.6" fill="none" stroke="#b4b6c8" stroke-width="1.2" rx="0.6" style="shape-rendering:geometricPrecision"/>
<path d="M1574.2 252.2 L1577.8 256.1 V265.8 L1574.2 262.2 Z" fill="#b4dcc2" stroke="#72b88a" stroke-width="0.9" />
<path d="M1518.2 278.5 L1523.5 283.8 M1518.2 278.5 L1533.5 283.8 M1518.2 278.5 L1523.5 293.2 M1518.4 278.6 L1521.5 281" fill="none" stroke="#1a78ff" stroke-width="1" />
<path d="M1518.2 278.5 L1520.6 281.5 L1521.8 279.8 Z" fill="#1a78ff" />
<rect x="1521.1" y="281.40000000000003" width="10.2" height="10.2" fill="none" stroke="#8a88a6" stroke-width="1" rx="0.8" style="shape-rendering:geometricPrecision"/>
<path d="M1530.8 282.20000000000005 L1533.0 284.40000000000003 M1521.8999999999999 291.1 L1524.1 293.3" fill="none" stroke="#8a88a6" stroke-width="0.9" />
<rect x="1523.3" y="283.6" width="10.2" height="10.2" fill="#c6c8da" stroke="#55527a" stroke-width="1.4" rx="0.6" style="shape-rendering:geometricPrecision"/>
<path d="M1524 284.3 L1529 289 M1529 289 V293 M1529 289 H1533" fill="none" stroke="#b4b4cc" stroke-width="0.7" />
<rect x="1541.5" y="278.40000000000003" width="9.6" height="9.6" fill="none" stroke="#b4b6c8" stroke-width="1" rx="0.8" style="shape-rendering:geometricPrecision"/>
<path d="M1550.6 279.20000000000005 L1553.8 282.40000000000003 M1542.3 287.50000000000006 L1545.5 290.70000000000005" fill="none" stroke="#b4b6c8" stroke-width="0.9" />
<rect x="1544.7" y="281.6" width="9.6" height="9.6" fill="none" stroke="#b4b6c8" stroke-width="1.2" rx="0.6" style="shape-rendering:geometricPrecision"/>
<path d="M1541.2 290.2 H1551.8 L1554.9 293.6 H1544.2 Z" fill="none" stroke="#f0a0a0" stroke-width="1.1" />
<rect x="1562.2" y="278.3" width="10.5" height="9.9" fill="#c8d4ec" stroke="#8ab4f0" stroke-width="1.2" style="shape-rendering:geometricPrecision"/>
<rect x="1564.1" y="279.90000000000003" width="10.3" height="10.3" fill="none" stroke="#b4b6c8" stroke-width="1" rx="0.8" style="shape-rendering:geometricPrecision"/>
<path d="M1573.8999999999999 280.70000000000005 L1577.1 283.90000000000003 M1564.8999999999999 289.70000000000005 L1568.1 292.90000000000003" fill="none" stroke="#b4b6c8" stroke-width="0.9" />
<rect x="1567.3" y="283.1" width="10.3" height="10.3" fill="none" stroke="#b4b6c8" stroke-width="1.2" rx="0.6" style="shape-rendering:geometricPrecision"/>
<rect x="1445" y="912" width="140" height="71" fill="#f0f0f0"/>
<rect x="1445" y="912" width="140" height="1" fill="#fff"/>
<rect x="1445" y="912" width="1" height="71" fill="#fff"/>
<rect x="1445" y="981" width="140" height="2" fill="#555"/>
<rect x="1583" y="912" width="2" height="71" fill="#555"/>
<rect x="1453" y="920" width="1" height="31" fill="#888"/>
<rect x="1576" y="920" width="1" height="31" fill="#888"/>
<text x="1460.5" y="926" font-size="11" fill="#16168a" textLength="13" lengthAdjust="spacingAndGlyphs" >X :</text>
<text x="1481" y="926" font-size="11" fill="#2b9a1e" textLength="38.5" lengthAdjust="spacingAndGlyphs" >3745.19</text>
<text x="1460.5" y="939" font-size="11" fill="#16168a" textLength="13" lengthAdjust="spacingAndGlyphs" >Y :</text>
<text x="1481" y="939" font-size="11" fill="#1b1bc8" textLength="38.5" lengthAdjust="spacingAndGlyphs" >5133.48</text>
<text x="1460.5" y="952" font-size="11" fill="#16168a" textLength="13" lengthAdjust="spacingAndGlyphs" >Z :</text>
<text x="1481" y="952" font-size="11" fill="#c0281e" textLength="6" lengthAdjust="spacingAndGlyphs" >0</text>
<text x="1459" y="965" font-size="11" fill="#16168a" font-weight="bold" >L</text>
<text x="1470.5" y="965" font-size="11" fill="#16168a" >:</text>
<text x="1481" y="965" font-size="11" fill="#1c97a8" textLength="38.5" lengthAdjust="spacingAndGlyphs" >6354.45</text>
<text x="1456" y="978" font-size="11" fill="#16168a" textLength="18" lengthAdjust="spacingAndGlyphs" >Ux :</text>
<text x="1481" y="978" font-size="11" fill="#1c97a8" textLength="26.5" lengthAdjust="spacingAndGlyphs" >53.89</text>
<rect x="9.5" y="1017.5" width="12" height="13" fill="#fff" stroke="#555" stroke-width="1"/>
<rect x="11" y="1020" width="9" height="1" fill="#777"/>
<rect x="11" y="1022" width="9" height="1" fill="#777"/>
<rect x="11" y="1024" width="9" height="1" fill="#777"/>
<rect x="11" y="1026" width="9" height="1" fill="#777"/>
<rect x="11" y="1028" width="9" height="1" fill="#777"/>
<text x="33" y="1028" font-size="12" fill="#3f3f52" textLength="99" lengthAdjust="spacingAndGlyphs" >Service information</text>
<rect x="0" y="1059" width="1920" height="1" fill="#b4bac6"/>
<rect x="0" y="1060" width="1920" height="1" fill="#dfe3ea"/>
<text x="4" y="1074" font-size="12" fill="#222" textLength="161" lengthAdjust="spacingAndGlyphs" >Specify object(s) to be modified</text>
<rect x="0" y="1078" width="1920" height="2" fill="#2a2a2a"/>
<rect x="48" y="1078" width="287" height="2" fill="#f4f4f4"/>
<rect x="683" y="1078" width="24" height="2" fill="#6a6a6a"/>
<rect x="1392" y="1062" width="1" height="16" fill="#aaa"/>
<text x="1400" y="1074" font-size="12" fill="#222" textLength="26" lengthAdjust="spacingAndGlyphs" >NUM</text>
<rect x="1428" y="1062" width="1" height="16" fill="#aaa"/>
<text x="1432" y="1074" font-size="12" fill="#9a9a9a" textLength="38" lengthAdjust="spacingAndGlyphs" >ORTHO</text>
<rect x="1474" y="1062" width="83" height="16" fill="#fbfbe8"/>
<rect x="1473" y="1062" width="1" height="16" fill="#aaa"/>
<text x="1477" y="1074" font-size="12" fill="#2b9a1e" textLength="41" lengthAdjust="spacingAndGlyphs" >3745.19</text>
<rect x="1559" y="1062" width="83" height="16" fill="#fbfbe8"/>
<rect x="1558" y="1062" width="1" height="16" fill="#aaa"/>
<text x="1562" y="1074" font-size="12" fill="#1b1bc8" textLength="41" lengthAdjust="spacingAndGlyphs" >5133.48</text>
<rect x="1645" y="1062" width="83" height="16" fill="#fbfbe8"/>
<rect x="1644" y="1062" width="1" height="16" fill="#aaa"/>
<text x="1648" y="1074" font-size="12" fill="#c0281e" textLength="7" lengthAdjust="spacingAndGlyphs" >0</text>
<rect x="1731" y="1062" width="83" height="16" fill="#fbfbe8"/>
<rect x="1730" y="1062" width="1" height="16" fill="#aaa"/>
<text x="1734" y="1074" font-size="12" fill="#1c97a8" textLength="41" lengthAdjust="spacingAndGlyphs" >6354.45</text>
<rect x="1817" y="1062" width="83" height="16" fill="#fbfbe8"/>
<rect x="1816" y="1062" width="1" height="16" fill="#aaa"/>
<text x="1820" y="1074" font-size="12" fill="#111" textLength="6" lengthAdjust="spacingAndGlyphs" >1</text>
<rect x="1903" y="1062" width="1" height="16" fill="#aaa"/>
<rect x="1915" y="1074" width="2" height="2" fill="#8a8a8a"/>
<rect x="1912" y="1074" width="2" height="2" fill="#8a8a8a"/>
<rect x="1915" y="1071" width="2" height="2" fill="#8a8a8a"/>
<rect x="1909" y="1074" width="2" height="2" fill="#8a8a8a"/>
<rect x="1915" y="1068" width="2" height="2" fill="#8a8a8a"/>
<rect x="1912" y="1071" width="2" height="2" fill="#8a8a8a"/>
<path d="M1016 139 L1051 139 L1562 343 L1562 838 L1025 838 L1016 171 Z" fill="#ff4040" opacity="0.3"/>
<rect x="1017.5" y="139.5" width="32" height="30" fill="#f2f2f2" stroke="#f73c3c" stroke-width="3"/>
<g stroke="#444" fill="none" stroke-width="1">
<path d="M1027 149.5 H1030.5 V146.5 H1034.5 V149.5 H1038.5 V152.5 H1034.5 V165.5 H1030.5 V152.5 H1027 Z" fill="none" />
<path d="M1024 165.5 H1030 M1035 165.5 H1042" fill="none" />
<path d="M1025.5 146 V153 M1040.5 145 V152" fill="none" stroke-dasharray="1 2"/>
</g>
<rect x="1025" y="342" width="537" height="496" fill="#fa4040"/>
<rect x="1030" y="347" width="527" height="486" fill="#587268"/>
<rect x="1033" y="375" width="519" height="453" fill="#f0f0f0"/>
<rect x="1551" y="375" width="1" height="453" fill="#fafafa"/>
<text x="1041.5" y="364" font-size="12" fill="#fff" textLength="113.5" lengthAdjust="spacingAndGlyphs" >Connection of beams</text>
<rect x="1519.5" y="347.5" width="33" height="27" fill="#c25b50" stroke="#5a2c28" stroke-width="1"/>
<text x="1531.5" y="363.3" font-size="15" fill="#000" textLength="10" lengthAdjust="spacingAndGlyphs" font-weight="bold" >x</text>
<text x="1075.5" y="401" font-size="12" fill="#000" textLength="90.5" lengthAdjust="spacingAndGlyphs" >Connection option:</text>
<rect x="1173.5" y="388.5" width="223" height="20" fill="#fff" stroke="#555" stroke-width="1"/>
<text x="1176.5" y="403" font-size="12" fill="#000" textLength="110.5" lengthAdjust="spacingAndGlyphs" >Connection of beams 2</text>
<path d="M1384.5 396 L1388.5 400 L1392.5 396" fill="none" stroke="#444" stroke-width="1.3" />
<rect x="1402" y="386" width="29" height="27" fill="#f2f2f2"/>
<rect x="1402" y="386" width="29" height="1" fill="#ffffff"/>
<rect x="1402" y="386" width="1" height="27" fill="#ffffff"/>
<rect x="1402" y="412" width="29" height="1" fill="#6e6e6e"/>
<rect x="1430" y="386" width="1" height="27" fill="#6e6e6e"/>
<rect x="1402.5" y="386.5" width="28" height="26" fill="none" stroke="#111" stroke-width="1"/>
<rect x="1403" y="411" width="27" height="1" fill="#7a7a7a"/>
<rect x="1429" y="387" width="1" height="25" fill="#7a7a7a"/>
<rect x="1409" y="398.1" width="16" height="3.7" fill="#6e68a0" style="shape-rendering:geometricPrecision"/>
<rect x="1415.1" y="392" width="3.8" height="16" fill="#6e68a0" style="shape-rendering:geometricPrecision"/>
<rect x="1438" y="387" width="27" height="26" fill="#f2f2f2"/>
<rect x="1438" y="387" width="27" height="1" fill="#ffffff"/>
<rect x="1438" y="387" width="1" height="26" fill="#ffffff"/>
<rect x="1438" y="412" width="27" height="1" fill="#6e6e6e"/>
<rect x="1464" y="387" width="1" height="26" fill="#6e6e6e"/>
<path d="M1443.2 393.2 Q1443.8 391.4 1445.8 392.3 Q1453.5 398 1460.2 409.6 Q1451.5 401 1443.2 393.2 Z" fill="#1a6aff" />
<path d="M1460.9 391.3 Q1453.5 402.5 1444.6 407.9 Q1442.5 408.5 1443 406.5 Q1452.5 400.5 1460.9 391.3 Z" fill="#1a6aff" />
<rect x="1477" y="387" width="27" height="26" fill="#f2f2f2"/>
<rect x="1477" y="387" width="27" height="1" fill="#ffffff"/>
<rect x="1477" y="387" width="1" height="26" fill="#ffffff"/>
<rect x="1477" y="412" width="27" height="1" fill="#6e6e6e"/>
<rect x="1503" y="387" width="1" height="26" fill="#6e6e6e"/>
<path d="M1484.3 405 V395.2 Q1484.3 394.5 1485.1000000000001 394.5 H1489.7 L1490.9 395.8 H1496.0 L1499.3 398.3 H1486.9 Z" fill="#3a3658" stroke="#2a2640" stroke-width="1" />
<path d="M1484.6000000000001 405.4 L1487.0 398.4 H1499.7 L1496.0 405.4 Z" fill="#e4e4f4" stroke="#2a2640" stroke-width="1.3" stroke-linejoin="round"/>
<rect x="1510" y="387" width="27" height="26" fill="#f2f2f2"/>
<rect x="1510" y="387" width="27" height="1" fill="#ffffff"/>
<rect x="1510" y="387" width="1" height="26" fill="#ffffff"/>
<rect x="1510" y="412" width="27" height="1" fill="#6e6e6e"/>
<rect x="1536" y="387" width="1" height="26" fill="#6e6e6e"/>
<rect x="1519" y="394" width="13" height="12.8" fill="#35305a" rx="1.2" style="shape-rendering:geometricPrecision"/>
<rect x="1521.5" y="395" width="8.3" height="5.3" fill="#e6e6f2" style="shape-rendering:geometricPrecision"/>
<rect x="1522.2" y="402" width="7.1" height="3.8" fill="#e6e6f2" style="shape-rendering:geometricPrecision"/>
<rect x="1526.4" y="402.8" width="1.6" height="2.3" fill="#2a2640" style="shape-rendering:geometricPrecision"/>
<rect x="1054.5" y="423.0" width="12" height="12" fill="#fff" stroke="#333" stroke-width="1"/>
<path d="M1056.8 429.0 L1059.3 432.0 L1064.3 425.5" fill="none" stroke="#111" stroke-width="1.9" />
<text x="1069.7" y="432.5" font-size="12" fill="#000" textLength="63.5" lengthAdjust="spacingAndGlyphs" >symmetrically</text>
<rect x="1054.5" y="449.0" width="12" height="12" fill="#fff" stroke="#333" stroke-width="1"/>
<path d="M1056.8 455.0 L1059.3 458.0 L1064.3 451.5" fill="none" stroke="#111" stroke-width="1.9" />
<text x="1069.7" y="458.5" font-size="12" fill="#000" textLength="103" lengthAdjust="spacingAndGlyphs" >connection to the left</text>
<text x="1057.3" y="488" font-size="12" fill="#000" textLength="69" lengthAdjust="spacingAndGlyphs" >Top elevation:</text>
<rect x="1141.5" y="474.5" width="77" height="22" fill="#fff" stroke="#4a4a4a" stroke-width="1"/>
<text x="1146.5" y="487.7" font-size="12" fill="#000" >0</text>
<text x="1086" y="516" font-size="12" fill="#000" textLength="40" lengthAdjust="spacingAndGlyphs" >H beam:</text>
<rect x="1141.5" y="502.5" width="77" height="22" fill="#fff" stroke="#4a4a4a" stroke-width="1"/>
<text x="1146.5" y="515.7" font-size="12" fill="#000" textLength="17.5" lengthAdjust="spacingAndGlyphs" >600</text>
<text x="1092.3" y="544.5" font-size="12" fill="#000" textLength="33" lengthAdjust="spacingAndGlyphs" >H slab:</text>
<rect x="1141.5" y="529.5" width="77" height="22" fill="#fff" stroke="#4a4a4a" stroke-width="1"/>
<text x="1146.5" y="542.7" font-size="12" fill="#000" textLength="17.5" lengthAdjust="spacingAndGlyphs" >200</text>
<text x="1066" y="574.7" font-size="12" fill="#000" textLength="59.5" lengthAdjust="spacingAndGlyphs" >L cantilever:</text>
<rect x="1141.5" y="559.5" width="77" height="22" fill="#fff" stroke="#4a4a4a" stroke-width="1"/>
<text x="1146.5" y="572.7" font-size="12" fill="#000" textLength="17.5" lengthAdjust="spacingAndGlyphs" >800</text>
<rect x="1054.5" y="593.0" width="12" height="12" fill="#fff" stroke="#333" stroke-width="1"/>
<text x="1069.7" y="602.7" font-size="12" fill="#000" textLength="80" lengthAdjust="spacingAndGlyphs" >end of cantilever</text>
<rect x="1054.5" y="617.5" width="12" height="12" fill="#fff" stroke="#333" stroke-width="1"/>
<text x="1069.7" y="627.5" font-size="12" fill="#000" textLength="117.5" lengthAdjust="spacingAndGlyphs" >display height elevations</text>
<rect x="1243" y="453" width="103" height="15" fill="#404040"/>
<rect x="1282" y="440" width="26" height="163" fill="#404040"/>
<rect x="1368.5" y="449.0" width="12" height="12" fill="#f4f4f4" stroke="#bcbcbc" stroke-width="1"/>
<path d="M1370.8 455.0 L1373.3 458.0 L1378.3 451.5" fill="none" stroke="#b4b4b4" stroke-width="1.9" />
<text x="1383.7" y="458.5" font-size="12" fill="#838383" textLength="108.5" lengthAdjust="spacingAndGlyphs" >connection to the right</text>
<text x="1376.8" y="488" font-size="12" fill="#838383" textLength="68" lengthAdjust="spacingAndGlyphs" >Top elevation:</text>
<rect x="1461.5" y="474.5" width="77" height="22" fill="#f0f0f0" stroke="#bcbcbc" stroke-width="1"/>
<text x="1466.5" y="487.7" font-size="12" fill="#838383" >0</text>
<text x="1403" y="518" font-size="12" fill="#838383" textLength="40" lengthAdjust="spacingAndGlyphs" >H beam:</text>
<rect x="1461.5" y="502.5" width="77" height="22" fill="#f0f0f0" stroke="#bcbcbc" stroke-width="1"/>
<text x="1466.5" y="515.7" font-size="12" fill="#838383" textLength="17.5" lengthAdjust="spacingAndGlyphs" >600</text>
<text x="1412.4" y="546.5" font-size="12" fill="#838383" textLength="32" lengthAdjust="spacingAndGlyphs" >H slab:</text>
<rect x="1461.5" y="531.5" width="77" height="22" fill="#f0f0f0" stroke="#bcbcbc" stroke-width="1"/>
<text x="1466.5" y="544.7" font-size="12" fill="#838383" textLength="17.5" lengthAdjust="spacingAndGlyphs" >200</text>
<text x="1386.5" y="576" font-size="12" fill="#838383" textLength="58" lengthAdjust="spacingAndGlyphs" >L cantilever:</text>
<rect x="1461.5" y="561.0" width="77" height="21" fill="#f0f0f0" stroke="#bcbcbc" stroke-width="1"/>
<text x="1466.5" y="573.7" font-size="12" fill="#838383" textLength="17.5" lengthAdjust="spacingAndGlyphs" >800</text>
<rect x="1368.5" y="593.0" width="12" height="12" fill="#f4f4f4" stroke="#bcbcbc" stroke-width="1"/>
<text x="1383.7" y="602.7" font-size="12" fill="#838383" textLength="80" lengthAdjust="spacingAndGlyphs" >end of cantilever</text>
<rect x="1368.5" y="617.5" width="12" height="12" fill="#fff" stroke="#333" stroke-width="1"/>
<path d="M1370.8 623.5 L1373.3 626.5 L1378.3 620" fill="none" stroke="#111" stroke-width="1.9" />
<text x="1383.7" y="627.5" font-size="12" fill="#000" textLength="117.5" lengthAdjust="spacingAndGlyphs" >display height elevations</text>
<text x="1092.2" y="653.7" font-size="12" fill="#000" textLength="158.5" lengthAdjust="spacingAndGlyphs" >Modulus for indent of labels, mm:</text>
<rect x="1258.5" y="638.5" width="77" height="22" fill="#fff" stroke="#4a4a4a" stroke-width="1"/>
<text x="1264" y="651.7" font-size="12" fill="#000" textLength="12" lengthAdjust="spacingAndGlyphs" >50</text>
<rect x="1044.5" y="680" width="497" height="98" fill="none" stroke="#ffffff" stroke-width="1" rx="3" style="shape-rendering:geometricPrecision"/>
<rect x="1043.5" y="679" width="497" height="98" fill="none" stroke="#dcdcdc" stroke-width="1" rx="3" style="shape-rendering:geometricPrecision"/>
<rect x="1050" y="672" width="231" height="12" fill="#f0f0f0"/>
<text x="1052.4" y="682.5" font-size="12" fill="#000" textLength="226.5" lengthAdjust="spacingAndGlyphs" >General parameters for model of reinforcement</text>
<text x="1103.7" y="707.5" font-size="12" fill="#000" textLength="195" lengthAdjust="spacingAndGlyphs" >Indent from longitudinal dimensions, mm:</text>
<rect x="1306.5" y="692.5" width="77" height="22" fill="#fff" stroke="#4a4a4a" stroke-width="1"/>
<text x="1312.3" y="705.7" font-size="12" fill="#000" textLength="17.5" lengthAdjust="spacingAndGlyphs" >100</text>
<text x="1143.2" y="734.8" font-size="12" fill="#000" textLength="155.5" lengthAdjust="spacingAndGlyphs" >Indent for chain of stirrups, mm:</text>
<rect x="1306.5" y="720.5" width="77" height="22" fill="#fff" stroke="#4a4a4a" stroke-width="1"/>
<text x="1312.3" y="733.7" font-size="12" fill="#000" textLength="17.5" lengthAdjust="spacingAndGlyphs" >900</text>
<text x="1186.8" y="762" font-size="12" fill="#000" textLength="112" lengthAdjust="spacingAndGlyphs" >Column base level, mm:</text>
<rect x="1306.5" y="748.0" width="77" height="21.5" fill="#fff" stroke="#4a4a4a" stroke-width="1"/>
<text x="1312.3" y="760.7" font-size="12" fill="#000" >0</text>
<rect x="1045.5" y="794.5" width="72" height="20" fill="#e1e1e1" stroke="#2d78c8" stroke-width="1"/>
<rect x="1046.5" y="795.5" width="70" height="18" fill="none" stroke="#5aa0e0" stroke-width="1"/>
<text x="1073.6" y="809.2" font-size="12" fill="#000" textLength="14.5" lengthAdjust="spacingAndGlyphs" >OK</text>
<rect x="1126.5" y="794.5" width="72" height="20" fill="#e1e1e1" stroke="#8a8a8a" stroke-width="1"/>
<text x="1149" y="809.2" font-size="12" fill="#000" textLength="26.5" lengthAdjust="spacingAndGlyphs" >Apply</text>
<rect x="1207.5" y="794.5" width="72" height="20" fill="#e1e1e1" stroke="#8a8a8a" stroke-width="1"/>
<text x="1226.3" y="809.2" font-size="12" fill="#000" textLength="32" lengthAdjust="spacingAndGlyphs" >Cancel</text>
</svg></body></html>
